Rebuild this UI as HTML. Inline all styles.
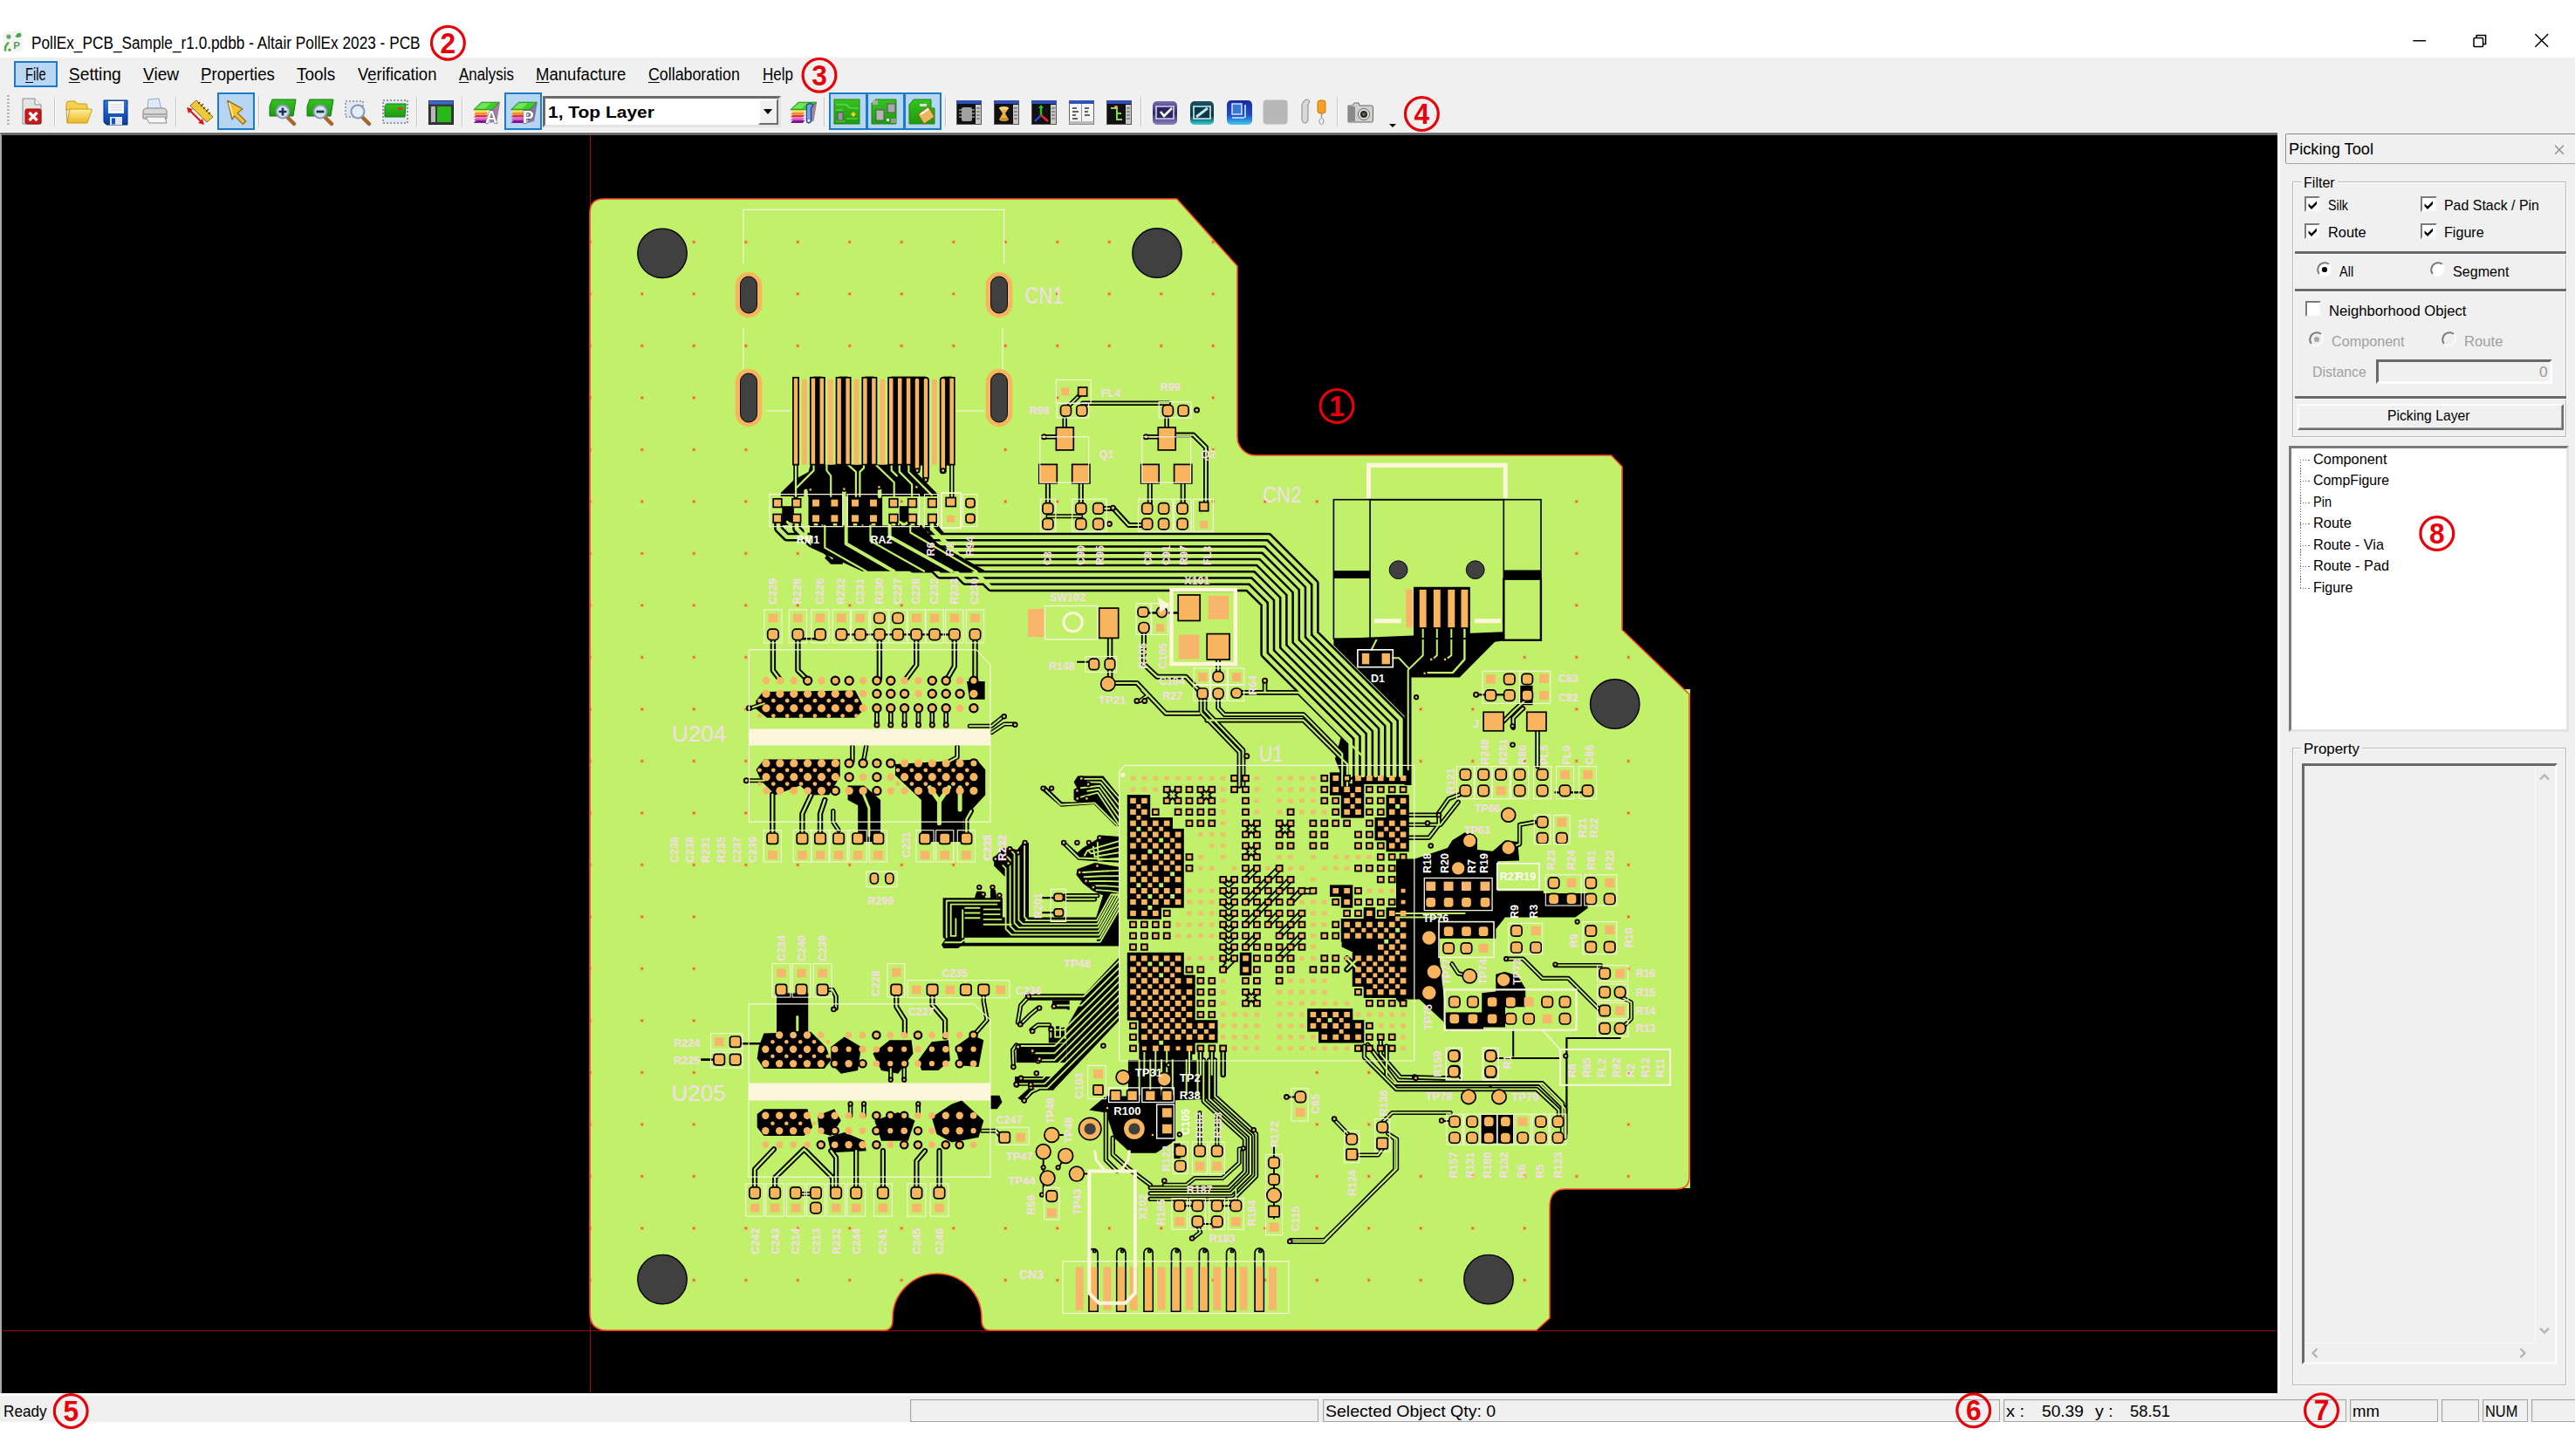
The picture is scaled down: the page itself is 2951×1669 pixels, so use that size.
<!DOCTYPE html>
<html lang="en"><head><meta charset="utf-8"><title>PollEx_PCB_Sample_r1.0.pdbb - Altair PollEx 2023 - PCB</title>
<style>
html,body{margin:0;padding:0;background:#fff;}
body{width:2951px;height:1669px;position:relative;overflow:hidden;font-family:"Liberation Sans",sans-serif;}
.t{position:absolute;white-space:nowrap;transform-origin:0 50%;}
.b{position:absolute;box-sizing:border-box;}
u{text-decoration:underline;text-underline-offset:2px;text-decoration-thickness:1px;}
svg{position:absolute;left:0;top:0;}
svg text{font-family:"Liberation Sans",sans-serif;}
</style></head><body>
<div class="b" style="left:0.0px;top:66.0px;width:2951.0px;height:1563.8px;background:#f0f0f0;"></div>
<div class="b" style="left:0.0px;top:1597.4px;width:2609.6px;height:3.1px;background:#fbfbfb;"></div>
<div class="b" style="left:0.0px;top:150.7px;width:2609.6px;height:1.4px;background:#fff;"></div>
<div class="b" style="left:0.0px;top:152.1px;width:2609.6px;height:1445.3px;background:#000;border-left:2.6px solid #a8a8a8;border-top:3.2px solid #6c6c6c;"></div>
<div class="b" style="left:2609.6px;top:155.0px;width:3.6px;height:1442.4px;background:#f8f8f8;"></div>
<span class="t" style="left:36.1px;top:37.9px;font-size:19.5px;line-height:22.41px;color:#000;transform:scaleX(0.8841);">PollEx_PCB_Sample_r1.0.pdbb - Altair PollEx 2023 - PCB</span>
<div class="b" style="left:15.7px;top:69.7px;width:50.1px;height:30.0px;background:#b9d7f3;border:2px solid #1c7acb;"></div>
<span class="t" style="left:28.5px;top:74.5px;font-size:19.3px;line-height:22.18px;color:#000;transform:scaleX(0.7589);"><u>F</u>ile</span>
<span class="t" style="left:78.8px;top:74.5px;font-size:19.3px;line-height:22.18px;color:#000;"><u>S</u>etting</span>
<span class="t" style="left:163.9px;top:74.5px;font-size:19.3px;line-height:22.18px;color:#000;transform:scaleX(0.9908);"><u>V</u>iew</span>
<span class="t" style="left:230.3px;top:74.5px;font-size:19.3px;line-height:22.18px;color:#000;transform:scaleX(0.9664);"><u>P</u>roperties</span>
<span class="t" style="left:340.2px;top:74.5px;font-size:19.3px;line-height:22.18px;color:#000;transform:scaleX(0.9833);"><u>T</u>ools</span>
<span class="t" style="left:409.7px;top:74.5px;font-size:19.3px;line-height:22.18px;color:#000;transform:scaleX(0.9586);">V<u>e</u>rification</span>
<span class="t" style="left:526.2px;top:74.5px;font-size:19.3px;line-height:22.18px;color:#000;transform:scaleX(0.8752);"><u>A</u>nalysis</span>
<span class="t" style="left:613.6px;top:74.5px;font-size:19.3px;line-height:22.18px;color:#000;transform:scaleX(0.9630);"><u>M</u>anufacture</span>
<span class="t" style="left:742.5px;top:74.5px;font-size:19.3px;line-height:22.18px;color:#000;transform:scaleX(0.9224);"><u>C</u>ollaboration</span>
<span class="t" style="left:873.8px;top:74.5px;font-size:19.3px;line-height:22.18px;color:#000;transform:scaleX(0.8793);"><u>H</u>elp</span>
<div class="b" style="left:8.0px;top:109.0px;width:3.0px;height:36.0px;background:repeating-linear-gradient(#b8b8b8 0 2px,transparent 2px 4px);"></div>
<div class="b" style="left:62.0px;top:111.0px;width:1.0px;height:34.0px;background:#c4c4c4;"></div>
<div class="b" style="left:63.0px;top:111.0px;width:1.0px;height:34.0px;background:#fff;"></div>
<div class="b" style="left:200.8px;top:111.0px;width:1.0px;height:34.0px;background:#c4c4c4;"></div>
<div class="b" style="left:201.8px;top:111.0px;width:1.0px;height:34.0px;background:#fff;"></div>
<div class="b" style="left:296.0px;top:111.0px;width:1.0px;height:34.0px;background:#c4c4c4;"></div>
<div class="b" style="left:297.0px;top:111.0px;width:1.0px;height:34.0px;background:#fff;"></div>
<div class="b" style="left:477.0px;top:111.0px;width:1.0px;height:34.0px;background:#c4c4c4;"></div>
<div class="b" style="left:478.0px;top:111.0px;width:1.0px;height:34.0px;background:#fff;"></div>
<div class="b" style="left:529.0px;top:111.0px;width:1.0px;height:34.0px;background:#c4c4c4;"></div>
<div class="b" style="left:530.0px;top:111.0px;width:1.0px;height:34.0px;background:#fff;"></div>
<div class="b" style="left:944.3px;top:111.0px;width:1.0px;height:34.0px;background:#c4c4c4;"></div>
<div class="b" style="left:945.3px;top:111.0px;width:1.0px;height:34.0px;background:#fff;"></div>
<div class="b" style="left:1083.3px;top:111.0px;width:1.0px;height:34.0px;background:#c4c4c4;"></div>
<div class="b" style="left:1084.3px;top:111.0px;width:1.0px;height:34.0px;background:#fff;"></div>
<div class="b" style="left:1307.0px;top:111.0px;width:1.0px;height:34.0px;background:#c4c4c4;"></div>
<div class="b" style="left:1308.0px;top:111.0px;width:1.0px;height:34.0px;background:#fff;"></div>
<div class="b" style="left:1531.5px;top:111.0px;width:1.0px;height:34.0px;background:#c4c4c4;"></div>
<div class="b" style="left:1532.5px;top:111.0px;width:1.0px;height:34.0px;background:#fff;"></div>
<div class="b" style="left:249.0px;top:106.2px;width:43.0px;height:43.0px;background:#b5d5f2;border:2px solid #1c7acb;"></div>
<div class="b" style="left:578.1px;top:106.2px;width:43.0px;height:43.0px;background:#b5d5f2;border:2px solid #1c7acb;"></div>
<div class="b" style="left:949.7px;top:106.2px;width:44.4px;height:43.0px;background:#b5d5f2;border:2px solid #1c7acb;"></div>
<div class="b" style="left:992.6px;top:106.2px;width:44.4px;height:43.0px;background:#b5d5f2;border:2px solid #1c7acb;"></div>
<div class="b" style="left:1035.5px;top:106.2px;width:43.4px;height:43.0px;background:#b5d5f2;border:2px solid #1c7acb;"></div>
<div class="b" style="left:621.6px;top:109.7px;width:273.4px;height:36.1px;background:#fff;border:3px solid;border-color:#6a6a6a #e4e4e4 #e4e4e4 #6a6a6a;"></div>
<div class="b" style="left:869.0px;top:112.8px;width:23.0px;height:30.2px;background:#f0f0f0;border:2px solid;border-color:#fff #6d6d6d #6d6d6d #fff;"></div>
<div class="b" style="left:874.8px;top:125.0px;width:0.0px;height:0.0px;border-left:5.5px solid transparent;border-right:5.5px solid transparent;border-top:6px solid #000;"></div>
<span class="t" style="left:628.2px;top:117.9px;font-size:19.2px;line-height:22.06px;color:#000;font-weight:bold;transform:scaleX(1.0925);">1, Top Layer</span>
<div class="b" style="left:1592.0px;top:142.0px;width:0.0px;height:0.0px;border-left:4px solid transparent;border-right:4px solid transparent;border-top:4px solid #000;"></div>
<div class="b" style="left:2619.3px;top:153.1px;width:333.0px;height:35.2px;background:#f0f0f0;border:1px solid;border-color:#8c8c8c #b0b0b0 #a8a8a8 #8c8c8c;border-radius:2px;"></div>
<span class="t" style="left:2622.8px;top:160.0px;font-size:18.6px;line-height:21.37px;color:#000;transform:scaleX(0.9817);">Picking Tool</span>
<div class="b" style="left:2627.4px;top:208.3px;width:313.8px;height:292.3px;border:1px solid #b8b8b8;box-shadow:inset 1px 1px 0 #fff, 1px 1px 0 #fff;"></div>
<div class="b" style="left:2636.5px;top:200.0px;width:42.0px;height:20.0px;background:#f0f0f0;"></div>
<span class="t" style="left:2639.9px;top:200.2px;font-size:17.0px;line-height:19.53px;color:#000;transform:scaleX(0.9451);">Filter</span>
<div class="b" style="left:2640.9px;top:225.4px;width:18.3px;height:18.0px;background:#fff;border:2px solid;border-color:#7a7a7a #f4f4f4 #f4f4f4 #7a7a7a;"></div>
<svg width="20" height="20" style="left:2640.9px;top:225.4px" viewBox="0 0 20 20"><path d="M4.6 8.2 L8 11.6 L14 5.6 V9 L8 15 L4.6 11.6 Z" fill="#000"/></svg>
<span class="t" style="left:2667.8px;top:226.3px;font-size:17.0px;line-height:19.53px;color:#000;transform:scaleX(0.8360);">Silk</span>
<div class="b" style="left:2774.4px;top:225.4px;width:18.3px;height:18.0px;background:#fff;border:2px solid;border-color:#7a7a7a #f4f4f4 #f4f4f4 #7a7a7a;"></div>
<svg width="20" height="20" style="left:2774.4px;top:225.4px" viewBox="0 0 20 20"><path d="M4.6 8.2 L8 11.6 L14 5.6 V9 L8 15 L4.6 11.6 Z" fill="#000"/></svg>
<span class="t" style="left:2800.9px;top:226.3px;font-size:17.0px;line-height:19.53px;color:#000;transform:scaleX(0.9370);">Pad Stack / Pin</span>
<div class="b" style="left:2640.9px;top:256.1px;width:18.3px;height:18.0px;background:#fff;border:2px solid;border-color:#7a7a7a #f4f4f4 #f4f4f4 #7a7a7a;"></div>
<svg width="20" height="20" style="left:2640.9px;top:256.1px" viewBox="0 0 20 20"><path d="M4.6 8.2 L8 11.6 L14 5.6 V9 L8 15 L4.6 11.6 Z" fill="#000"/></svg>
<span class="t" style="left:2667.8px;top:256.9px;font-size:17.0px;line-height:19.53px;color:#000;transform:scaleX(0.9634);">Route</span>
<div class="b" style="left:2774.4px;top:256.1px;width:18.3px;height:18.0px;background:#fff;border:2px solid;border-color:#7a7a7a #f4f4f4 #f4f4f4 #7a7a7a;"></div>
<svg width="20" height="20" style="left:2774.4px;top:256.1px" viewBox="0 0 20 20"><path d="M4.6 8.2 L8 11.6 L14 5.6 V9 L8 15 L4.6 11.6 Z" fill="#000"/></svg>
<span class="t" style="left:2800.9px;top:256.9px;font-size:17.0px;line-height:19.53px;color:#000;transform:scaleX(0.9485);">Figure</span>
<div class="b" style="left:2629.7px;top:288.0px;width:311.0px;height:3.0px;background:#6a6a6a;"></div>
<div class="b" style="left:2629.7px;top:291.0px;width:311.0px;height:1.0px;background:#fff;"></div>
<div class="b" style="left:2629.7px;top:331.2px;width:311.0px;height:3.0px;background:#6a6a6a;"></div>
<div class="b" style="left:2629.7px;top:334.2px;width:311.0px;height:1.0px;background:#fff;"></div>
<div class="b" style="left:2629.7px;top:454.0px;width:311.0px;height:3.0px;background:#6a6a6a;"></div>
<div class="b" style="left:2629.7px;top:457.0px;width:311.0px;height:1.0px;background:#fff;"></div>
<svg width="20" height="20" style="left:2654.4px;top:299.1px" viewBox="0 0 20 20"><circle cx="10" cy="10" r="7.6" fill="#fff"/><path d="M3.8 15 A8 8 0 0 1 15 3.8" fill="none" stroke="#7a7a7a" stroke-width="2"/><path d="M15.6 4.4 A8 8 0 0 1 4.4 15.6" fill="none" stroke="#fbfbfb" stroke-width="2"/><circle cx="10" cy="10" r="3.1" fill="#000"/></svg>
<span class="t" style="left:2681.4px;top:301.6px;font-size:17.0px;line-height:19.53px;color:#000;transform:scaleX(0.8521);">All</span>
<svg width="20" height="20" style="left:2783.6px;top:299.1px" viewBox="0 0 20 20"><circle cx="10" cy="10" r="7.6" fill="#fff"/><path d="M3.8 15 A8 8 0 0 1 15 3.8" fill="none" stroke="#7a7a7a" stroke-width="2"/><path d="M15.6 4.4 A8 8 0 0 1 4.4 15.6" fill="none" stroke="#fbfbfb" stroke-width="2"/></svg>
<span class="t" style="left:2810.6px;top:301.6px;font-size:17.0px;line-height:19.53px;color:#000;transform:scaleX(0.9465);">Segment</span>
<div class="b" style="left:2642.2px;top:345.3px;width:18.3px;height:18.0px;background:#fff;border:2px solid;border-color:#7a7a7a #f4f4f4 #f4f4f4 #7a7a7a;"></div>
<span class="t" style="left:2668.8px;top:346.5px;font-size:17.0px;line-height:19.53px;color:#000;transform:scaleX(0.9798);">Neighborhood Object</span>
<svg width="20" height="20" style="left:2645.3px;top:379.3px" viewBox="0 0 20 20"><circle cx="10" cy="10" r="7.6" fill="#f0f0f0"/><path d="M3.8 15 A8 8 0 0 1 15 3.8" fill="none" stroke="#7a7a7a" stroke-width="2"/><path d="M15.6 4.4 A8 8 0 0 1 4.4 15.6" fill="none" stroke="#fbfbfb" stroke-width="2"/><circle cx="10" cy="10" r="3.1" fill="#a8a8a8"/></svg>
<span class="t" style="left:2672.2px;top:381.6px;font-size:17.0px;line-height:19.53px;color:#a0a0a0;transform:scaleX(0.9513);">Component</span>
<svg width="20" height="20" style="left:2797.2px;top:379.3px" viewBox="0 0 20 20"><circle cx="10" cy="10" r="7.6" fill="#f0f0f0"/><path d="M3.8 15 A8 8 0 0 1 15 3.8" fill="none" stroke="#7a7a7a" stroke-width="2"/><path d="M15.6 4.4 A8 8 0 0 1 4.4 15.6" fill="none" stroke="#fbfbfb" stroke-width="2"/></svg>
<span class="t" style="left:2824.1px;top:381.6px;font-size:17.0px;line-height:19.53px;color:#a0a0a0;transform:scaleX(0.9788);">Route</span>
<span class="t" style="left:2649.5px;top:416.9px;font-size:17.0px;line-height:19.53px;color:#a0a0a0;transform:scaleX(0.9359);">Distance</span>
<div class="b" style="left:2722.6px;top:411.5px;width:202.0px;height:28.0px;background:#f0f0f0;border:3px solid;border-color:#696969 #fdfdfd #fdfdfd #696969;"></div>
<span class="t" style="left:2909.5px;top:416.9px;font-size:17.0px;line-height:19.53px;color:#9a9a9a;transform:scaleX(1.0155);">0</span>
<div class="b" style="left:2633.0px;top:462.9px;width:304.7px;height:30.0px;background:#f0f0f0;border:2px solid;border-color:#fcfcfc #6d6d6d #6d6d6d #fcfcfc;box-shadow:inset -1px -1px 0 #a0a0a0;"></div>
<span class="t" style="left:2736.2px;top:467.1px;font-size:17.0px;line-height:19.53px;color:#000;transform:scaleX(0.9261);">Picking Layer</span>
<div class="b" style="left:2622.5px;top:510.7px;width:321.0px;height:328.6px;background:#fff;border:3px solid;border-color:#7a7a7a #e3e3e3 #e3e3e3 #7a7a7a;"></div>
<div class="b" style="left:2636.0px;top:526.9px;width:1.3px;height:147.0px;background:repeating-linear-gradient(#707070 0 1.3px,transparent 1.3px 3.1px);"></div>
<div class="b" style="left:2636.0px;top:526.6px;width:10.8px;height:1.3px;background:repeating-linear-gradient(90deg,#707070 0 1.3px,transparent 1.3px 3.1px);"></div>
<span class="t" style="left:2650.6px;top:516.9px;font-size:17.0px;line-height:19.53px;color:#000;transform:scaleX(0.9615);">Component</span>
<div class="b" style="left:2636.0px;top:551.1px;width:10.8px;height:1.3px;background:repeating-linear-gradient(90deg,#707070 0 1.3px,transparent 1.3px 3.1px);"></div>
<span class="t" style="left:2650.6px;top:541.4px;font-size:17.0px;line-height:19.53px;color:#000;transform:scaleX(0.9313);">CompFigure</span>
<div class="b" style="left:2636.0px;top:575.6px;width:10.8px;height:1.3px;background:repeating-linear-gradient(90deg,#707070 0 1.3px,transparent 1.3px 3.1px);"></div>
<span class="t" style="left:2650.6px;top:565.9px;font-size:17.0px;line-height:19.53px;color:#000;transform:scaleX(0.8588);">Pin</span>
<div class="b" style="left:2636.0px;top:600.1px;width:10.8px;height:1.3px;background:repeating-linear-gradient(90deg,#707070 0 1.3px,transparent 1.3px 3.1px);"></div>
<span class="t" style="left:2650.6px;top:590.4px;font-size:17.0px;line-height:19.53px;color:#000;transform:scaleX(0.9656);">Route</span>
<div class="b" style="left:2636.0px;top:624.6px;width:10.8px;height:1.3px;background:repeating-linear-gradient(90deg,#707070 0 1.3px,transparent 1.3px 3.1px);"></div>
<span class="t" style="left:2650.6px;top:614.9px;font-size:17.0px;line-height:19.53px;color:#000;transform:scaleX(0.9548);">Route - Via</span>
<div class="b" style="left:2636.0px;top:649.1px;width:10.8px;height:1.3px;background:repeating-linear-gradient(90deg,#707070 0 1.3px,transparent 1.3px 3.1px);"></div>
<span class="t" style="left:2650.6px;top:639.4px;font-size:17.0px;line-height:19.53px;color:#000;transform:scaleX(0.9602);">Route - Pad</span>
<div class="b" style="left:2636.0px;top:673.6px;width:10.8px;height:1.3px;background:repeating-linear-gradient(90deg,#707070 0 1.3px,transparent 1.3px 3.1px);"></div>
<span class="t" style="left:2650.6px;top:663.9px;font-size:17.0px;line-height:19.53px;color:#000;transform:scaleX(0.9423);">Figure</span>
<div class="b" style="left:2627.4px;top:857.2px;width:313.8px;height:730.4px;border:1px solid #b8b8b8;box-shadow:inset 1px 1px 0 #fff, 1px 1px 0 #fff;"></div>
<div class="b" style="left:2636.5px;top:848.0px;width:70.0px;height:20.0px;background:#f0f0f0;"></div>
<span class="t" style="left:2639.6px;top:849.2px;font-size:17.0px;line-height:19.53px;color:#000;transform:scaleX(0.9946);">Property</span>
<div class="b" style="left:2638.3px;top:874.7px;width:292.3px;height:689.7px;background:#f0f0f0;border:3px solid;border-color:#696969 #fafafa #fafafa #696969;"></div>
<div class="b" style="left:2904.5px;top:877.7px;width:1.5px;height:661.0px;background:#fafafa;"></div>
<div class="b" style="left:2641.3px;top:1538.6px;width:264.0px;height:1.5px;background:#fafafa;"></div>
<svg width="14" height="14" style="left:2909.3px;top:884.0px" viewBox="-7 -7 14 14"><path d="M-5 2.5 L0 -2.5 L5 2.5" fill="none" stroke="#b4b4b4" stroke-width="2.4"/></svg>
<svg width="14" height="14" style="left:2909.3px;top:1518.3px" viewBox="-7 -7 14 14"><path d="M-5 -2.5 L0 2.5 L5 -2.5" fill="none" stroke="#b4b4b4" stroke-width="2.4"/></svg>
<svg width="14" height="14" style="left:2646.2px;top:1544.1px" viewBox="-7 -7 14 14"><path d="M2.5 -5 L-2.5 0 L2.5 5" fill="none" stroke="#b4b4b4" stroke-width="2.4"/></svg>
<svg width="14" height="14" style="left:2883.8px;top:1544.1px" viewBox="-7 -7 14 14"><path d="M-2.5 -5 L2.5 0 L-2.5 5" fill="none" stroke="#b4b4b4" stroke-width="2.4"/></svg>
<span class="t" style="left:3.9px;top:1606.6px;font-size:18.6px;line-height:21.37px;color:#000;transform:scaleX(0.9244);">Ready</span>
<div class="b" style="left:1043.0px;top:1604.0px;width:468.0px;height:25.8px;border:1px solid #a6a6a6;box-shadow:inset 1px 1px 0 #e2e2e2;"></div>
<div class="b" style="left:1516.0px;top:1604.0px;width:775.5px;height:25.8px;border:1px solid #a6a6a6;box-shadow:inset 1px 1px 0 #e2e2e2;"></div>
<div class="b" style="left:2296.0px;top:1604.0px;width:393.0px;height:25.8px;border:1px solid #a6a6a6;box-shadow:inset 1px 1px 0 #e2e2e2;"></div>
<div class="b" style="left:2693.0px;top:1604.0px;width:100.5px;height:25.8px;border:1px solid #a6a6a6;box-shadow:inset 1px 1px 0 #e2e2e2;"></div>
<div class="b" style="left:2797.5px;top:1604.0px;width:43.5px;height:25.8px;border:1px solid #a6a6a6;box-shadow:inset 1px 1px 0 #e2e2e2;"></div>
<div class="b" style="left:2845.0px;top:1604.0px;width:51.7px;height:25.8px;border:1px solid #a6a6a6;box-shadow:inset 1px 1px 0 #e2e2e2;"></div>
<div class="b" style="left:2900.5px;top:1604.0px;width:52.5px;height:25.8px;border:1px solid #a6a6a6;box-shadow:inset 1px 1px 0 #e2e2e2;"></div>
<span class="t" style="left:1519.3px;top:1606.6px;font-size:18.6px;line-height:21.37px;color:#000;transform:scaleX(1.0490);">Selected Object Qty: 0</span>
<span class="t" style="left:2299.1px;top:1606.6px;font-size:18.6px;line-height:21.37px;color:#000;transform:scaleX(1.0797);">x :</span>
<span class="t" style="left:2340.0px;top:1606.6px;font-size:18.6px;line-height:21.37px;color:#000;transform:scaleX(1.0292);">50.39</span>
<span class="t" style="left:2400.5px;top:1606.6px;font-size:18.6px;line-height:21.37px;color:#000;transform:scaleX(1.0543);">y :</span>
<span class="t" style="left:2441.4px;top:1606.6px;font-size:18.6px;line-height:21.37px;color:#000;transform:scaleX(0.9884);">58.51</span>
<span class="t" style="left:2696.0px;top:1606.6px;font-size:18.6px;line-height:21.37px;color:#000;">mm</span>
<span class="t" style="left:2848.3px;top:1606.6px;font-size:18.6px;line-height:21.37px;color:#000;transform:scaleX(0.8806);">NUM</span>
<svg width="2951" height="1669" viewBox="0 0 2951 1669" shape-rendering="auto">
<defs><clipPath id="cv"><rect x="3" y="155.3" width="2606.6" height="1442.1"/></clipPath>
<clipPath id="bd"><path d="M692 228 H1348.7 L1418 305 V501 A21 21 0 0 0 1439 522 H1846.5 L1859 535 V722 L1936 796 V1349 Q1936 1363 1921 1363 H1793 Q1776 1363 1776 1384 V1511 L1760.6 1525 H1135 Q1125 1525 1125 1513 V1511 A51 51 0 0 0 1023 1511 V1513 Q1023 1525 1013 1525 H696 Q676 1525 676 1505 V244 Q676 228 692 228 Z"/></clipPath>
<pattern id="vg" x="765.45" y="247.65" width="59.5" height="59.5" patternUnits="userSpaceOnUse"><rect x="27.6" y="27.6" width="4.4" height="4.4" fill="#f8b55e"/><rect x="29" y="29" width="1.6" height="1.6" fill="#7a3a10"/></pattern>
</defs>
<g clip-path="url(#cv)">
<path d="M676.5 155 V1597.4 M3 1525.5 H2610" stroke="#8f0d0d" stroke-width="1.2"/>
<path d="M692 228 H1348.7 L1418 305 V501 A21 21 0 0 0 1439 522 H1846.5 L1859 535 V722 L1936 796 V1349 Q1936 1363 1921 1363 H1793 Q1776 1363 1776 1384 V1511 L1760.6 1525 H1135 Q1125 1525 1125 1513 V1511 A51 51 0 0 0 1023 1511 V1513 Q1023 1525 1013 1525 H696 Q676 1525 676 1505 V244 Q676 228 692 228 Z" fill="#c1f06a"/>
<path d="M692 228 H1348.7 L1418 305 V501 A21 21 0 0 0 1439 522 H1846.5 L1859 535 V722 L1936 796 V1349 Q1936 1363 1921 1363 H1793 Q1776 1363 1776 1384 V1511 L1760.6 1525 H1135 Q1125 1525 1125 1513 V1511 A51 51 0 0 0 1023 1511 V1513 Q1023 1525 1013 1525 H696 Q676 1525 676 1505 V244 Q676 228 692 228 Z" fill="url(#vg)"/>
<rect x="1529" y="573" width="237" height="160" fill="#c1f06a"/>
<rect x="1283" y="877" width="338" height="339" fill="#c1f06a"/>
<rect x="858" y="745" width="277" height="197" fill="#c1f06a"/>
<rect x="858" y="1151" width="277" height="198" fill="#c1f06a"/>
<rect x="1622" y="930" width="208" height="370" fill="#c1f06a"/>
<rect x="1130" y="1216" width="370" height="184" fill="#c1f06a"/>
<rect x="1080" y="600" width="450" height="277" fill="#c1f06a"/>
<rect x="1135" y="877" width="148" height="339" fill="#c1f06a"/>
<rect x="826" y="1010" width="474" height="390" fill="#c1f06a"/>
<rect x="1900" y="790" width="37" height="572" fill="#c1f06a"/>
<rect x="1240" y="440" width="120" height="172" fill="#c1f06a"/>
<rect x="826" y="1010" width="34" height="230" fill="#c1f06a"/>
<g clip-path="url(#bd)">
<g fill="#000"><rect x="931.9" y="431.6" width="9.9" height="102"/><rect x="961.6" y="431.6" width="9.9" height="102"/><rect x="991.4" y="431.6" width="9.9" height="102"/><rect x="1021.2" y="431.6" width="9.9" height="102"/><rect x="1031.2" y="431.6" width="9.9" height="102"/><rect x="1041.1" y="431.6" width="9.9" height="102"/><rect x="1051" y="431.6" width="9.9" height="102"/><rect x="1080.8" y="431.6" width="9.9" height="102"/><polygon points="928.8,532.6 1049.7,532.6 1049.7,540.9 1073.9,565.8 1073.9,568.9 894.8,568.9 894.8,565.1 909.9,550 926.5,540.9" fill="#000"/><rect x="926.5" y="568.9" width="39.3" height="33.2"/><rect x="971.8" y="568.9" width="39.3" height="33.2"/><polygon points="896.3,580.2 909.9,580.2 909.9,602.1 896.3,602.1" fill="#000"/><polygon points="1030.8,580.2 1041.4,580.2 1041.4,602.1 1030.8,602.1" fill="#000"/><polygon points="928,602.1 965.8,602.1 965.8,646.7 952.2,646.7 928,622.5" fill="#000"/><polygon points="971.8,602.1 1011.1,602.1 1011.1,621 1033.8,643.7 996,643.7 971.8,628.6" fill="#000"/><polygon points="1020.2,602.1 1056.5,602.1 1056.5,622.5 1047.4,622.5 1030.8,613.4 1020.2,613.4" fill="#000"/><polygon points="1059.5,602.1 1074.6,602.1 1085.2,615 1071.6,615 1059.5,607.4" fill="#000"/><polygon points="1538,840 1616,840 1616,890 1538,890 1530,870" fill="#000"/><rect x="1528.4" y="654.2" width="41.7" height="8.8"/><rect x="1723.3" y="653.5" width="42.6" height="10.1"/><rect x="1620" y="672.8" width="64.8" height="59.4"/><polygon points="1528.4,732.2 1723.3,724.3 1723.3,734.4 1713.2,735.7 1672.7,776.4 1617.5,776.4 1617.5,899.9 1609.6,899.9 1609.6,820.7 1528.4,739.5" fill="#000"/><rect x="1524" y="885.4" width="13.5" height="13.5"/><rect x="1549.8" y="885.4" width="13.5" height="13.5"/><rect x="1562.7" y="885.4" width="13.5" height="13.5"/><rect x="1575.5" y="885.4" width="13.5" height="13.5"/><rect x="1588.5" y="885.4" width="13.5" height="13.5"/><rect x="1601.3" y="885.4" width="13.5" height="13.5"/><rect x="1524" y="898.2" width="13.5" height="13.5"/><rect x="1536.8" y="898.2" width="13.5" height="13.5"/><rect x="1549.8" y="898.2" width="13.5" height="13.5"/><rect x="1291.8" y="911.1" width="13.5" height="13.5"/><rect x="1304.7" y="911.1" width="13.5" height="13.5"/><rect x="1536.8" y="911.1" width="13.5" height="13.5"/><rect x="1549.8" y="911.1" width="13.5" height="13.5"/><rect x="1588.5" y="911.1" width="13.5" height="13.5"/><rect x="1601.3" y="911.1" width="13.5" height="13.5"/><rect x="1291.8" y="924.1" width="13.5" height="13.5"/><rect x="1304.7" y="924.1" width="13.5" height="13.5"/><rect x="1536.8" y="924.1" width="13.5" height="13.5"/><rect x="1549.8" y="924.1" width="13.5" height="13.5"/><rect x="1588.5" y="924.1" width="13.5" height="13.5"/><rect x="1601.3" y="924.1" width="13.5" height="13.5"/><rect x="1291.8" y="937" width="13.5" height="13.5"/><rect x="1304.7" y="937" width="13.5" height="13.5"/><rect x="1317.5" y="937" width="13.5" height="13.5"/><rect x="1330.5" y="937" width="13.5" height="13.5"/><rect x="1575.5" y="937" width="13.5" height="13.5"/><rect x="1588.5" y="937" width="13.5" height="13.5"/><rect x="1601.3" y="937" width="13.5" height="13.5"/><rect x="1291.8" y="949.9" width="13.5" height="13.5"/><rect x="1304.7" y="949.9" width="13.5" height="13.5"/><rect x="1317.5" y="949.9" width="13.5" height="13.5"/><rect x="1330.5" y="949.9" width="13.5" height="13.5"/><rect x="1343.3" y="949.9" width="13.5" height="13.5"/><rect x="1575.5" y="949.9" width="13.5" height="13.5"/><rect x="1588.5" y="949.9" width="13.5" height="13.5"/><rect x="1601.3" y="949.9" width="13.5" height="13.5"/><rect x="1291.8" y="962.8" width="13.5" height="13.5"/><rect x="1304.7" y="962.8" width="13.5" height="13.5"/><rect x="1317.5" y="962.8" width="13.5" height="13.5"/><rect x="1330.5" y="962.8" width="13.5" height="13.5"/><rect x="1343.3" y="962.8" width="13.5" height="13.5"/><rect x="1588.5" y="962.8" width="13.5" height="13.5"/><rect x="1601.3" y="962.8" width="13.5" height="13.5"/><rect x="1291.8" y="975.6" width="13.5" height="13.5"/><rect x="1304.7" y="975.6" width="13.5" height="13.5"/><rect x="1317.5" y="975.6" width="13.5" height="13.5"/><rect x="1330.5" y="975.6" width="13.5" height="13.5"/><rect x="1343.3" y="975.6" width="13.5" height="13.5"/><rect x="1291.8" y="988.6" width="13.5" height="13.5"/><rect x="1304.7" y="988.6" width="13.5" height="13.5"/><rect x="1317.5" y="988.6" width="13.5" height="13.5"/><rect x="1330.5" y="988.6" width="13.5" height="13.5"/><rect x="1343.3" y="988.6" width="13.5" height="13.5"/><rect x="1291.8" y="1001.5" width="13.5" height="13.5"/><rect x="1304.7" y="1001.5" width="13.5" height="13.5"/><rect x="1317.5" y="1001.5" width="13.5" height="13.5"/><rect x="1330.5" y="1001.5" width="13.5" height="13.5"/><rect x="1343.3" y="1001.5" width="13.5" height="13.5"/><rect x="1291.8" y="1014.4" width="13.5" height="13.5"/><rect x="1304.7" y="1014.4" width="13.5" height="13.5"/><rect x="1317.5" y="1014.4" width="13.5" height="13.5"/><rect x="1330.5" y="1014.4" width="13.5" height="13.5"/><rect x="1343.3" y="1014.4" width="13.5" height="13.5"/><rect x="1524" y="1014.4" width="13.5" height="13.5"/><rect x="1536.8" y="1014.4" width="13.5" height="13.5"/><rect x="1291.8" y="1027.2" width="13.5" height="13.5"/><rect x="1304.7" y="1027.2" width="13.5" height="13.5"/><rect x="1317.5" y="1027.2" width="13.5" height="13.5"/><rect x="1330.5" y="1027.2" width="13.5" height="13.5"/><rect x="1343.3" y="1027.2" width="13.5" height="13.5"/><rect x="1536.8" y="1027.2" width="13.5" height="13.5"/><rect x="1291.8" y="1040.2" width="13.5" height="13.5"/><rect x="1304.7" y="1040.2" width="13.5" height="13.5"/><rect x="1317.5" y="1040.2" width="13.5" height="13.5"/><rect x="1562.7" y="1040.2" width="13.5" height="13.5"/><rect x="1588.5" y="1040.2" width="13.5" height="13.5"/><rect x="1601.3" y="1040.2" width="13.5" height="13.5"/><rect x="1536.8" y="1053" width="13.5" height="13.5"/><rect x="1549.8" y="1053" width="13.5" height="13.5"/><rect x="1562.7" y="1053" width="13.5" height="13.5"/><rect x="1575.5" y="1053" width="13.5" height="13.5"/><rect x="1588.5" y="1053" width="13.5" height="13.5"/><rect x="1601.3" y="1053" width="13.5" height="13.5"/><rect x="1536.8" y="1066" width="13.5" height="13.5"/><rect x="1549.8" y="1066" width="13.5" height="13.5"/><rect x="1562.7" y="1066" width="13.5" height="13.5"/><rect x="1575.5" y="1066" width="13.5" height="13.5"/><rect x="1588.5" y="1066" width="13.5" height="13.5"/><rect x="1601.3" y="1066" width="13.5" height="13.5"/><rect x="1575.5" y="1078.8" width="13.5" height="13.5"/><rect x="1588.5" y="1078.8" width="13.5" height="13.5"/><rect x="1601.3" y="1078.8" width="13.5" height="13.5"/><rect x="1291.8" y="1091.8" width="13.5" height="13.5"/><rect x="1304.7" y="1091.8" width="13.5" height="13.5"/><rect x="1317.5" y="1091.8" width="13.5" height="13.5"/><rect x="1330.5" y="1091.8" width="13.5" height="13.5"/><rect x="1343.3" y="1091.8" width="13.5" height="13.5"/><rect x="1420.8" y="1091.8" width="13.5" height="13.5"/><rect x="1549.8" y="1091.8" width="13.5" height="13.5"/><rect x="1562.7" y="1091.8" width="13.5" height="13.5"/><rect x="1575.5" y="1091.8" width="13.5" height="13.5"/><rect x="1588.5" y="1091.8" width="13.5" height="13.5"/><rect x="1601.3" y="1091.8" width="13.5" height="13.5"/><rect x="1291.8" y="1104.7" width="13.5" height="13.5"/><rect x="1304.7" y="1104.7" width="13.5" height="13.5"/><rect x="1317.5" y="1104.7" width="13.5" height="13.5"/><rect x="1330.5" y="1104.7" width="13.5" height="13.5"/><rect x="1343.3" y="1104.7" width="13.5" height="13.5"/><rect x="1420.8" y="1104.7" width="13.5" height="13.5"/><rect x="1549.8" y="1104.7" width="13.5" height="13.5"/><rect x="1562.7" y="1104.7" width="13.5" height="13.5"/><rect x="1575.5" y="1104.7" width="13.5" height="13.5"/><rect x="1588.5" y="1104.7" width="13.5" height="13.5"/><rect x="1601.3" y="1104.7" width="13.5" height="13.5"/><rect x="1291.8" y="1117.5" width="13.5" height="13.5"/><rect x="1304.7" y="1117.5" width="13.5" height="13.5"/><rect x="1317.5" y="1117.5" width="13.5" height="13.5"/><rect x="1330.5" y="1117.5" width="13.5" height="13.5"/><rect x="1343.3" y="1117.5" width="13.5" height="13.5"/><rect x="1356.2" y="1117.5" width="13.5" height="13.5"/><rect x="1549.8" y="1117.5" width="13.5" height="13.5"/><rect x="1562.7" y="1117.5" width="13.5" height="13.5"/><rect x="1575.5" y="1117.5" width="13.5" height="13.5"/><rect x="1588.5" y="1117.5" width="13.5" height="13.5"/><rect x="1601.3" y="1117.5" width="13.5" height="13.5"/><rect x="1291.8" y="1130.5" width="13.5" height="13.5"/><rect x="1304.7" y="1130.5" width="13.5" height="13.5"/><rect x="1317.5" y="1130.5" width="13.5" height="13.5"/><rect x="1330.5" y="1130.5" width="13.5" height="13.5"/><rect x="1343.3" y="1130.5" width="13.5" height="13.5"/><rect x="1356.2" y="1130.5" width="13.5" height="13.5"/><rect x="1562.7" y="1130.5" width="13.5" height="13.5"/><rect x="1575.5" y="1130.5" width="13.5" height="13.5"/><rect x="1588.5" y="1130.5" width="13.5" height="13.5"/><rect x="1601.3" y="1130.5" width="13.5" height="13.5"/><rect x="1291.8" y="1143.3" width="13.5" height="13.5"/><rect x="1304.7" y="1143.3" width="13.5" height="13.5"/><rect x="1317.5" y="1143.3" width="13.5" height="13.5"/><rect x="1330.5" y="1143.3" width="13.5" height="13.5"/><rect x="1343.3" y="1143.3" width="13.5" height="13.5"/><rect x="1356.2" y="1143.3" width="13.5" height="13.5"/><rect x="1291.8" y="1156.2" width="13.5" height="13.5"/><rect x="1304.7" y="1156.2" width="13.5" height="13.5"/><rect x="1317.5" y="1156.2" width="13.5" height="13.5"/><rect x="1330.5" y="1156.2" width="13.5" height="13.5"/><rect x="1343.3" y="1156.2" width="13.5" height="13.5"/><rect x="1356.2" y="1156.2" width="13.5" height="13.5"/><rect x="1498.2" y="1156.2" width="13.5" height="13.5"/><rect x="1511" y="1156.2" width="13.5" height="13.5"/><rect x="1524" y="1156.2" width="13.5" height="13.5"/><rect x="1536.8" y="1156.2" width="13.5" height="13.5"/><rect x="1304.7" y="1169.2" width="13.5" height="13.5"/><rect x="1317.5" y="1169.2" width="13.5" height="13.5"/><rect x="1330.5" y="1169.2" width="13.5" height="13.5"/><rect x="1343.3" y="1169.2" width="13.5" height="13.5"/><rect x="1356.2" y="1169.2" width="13.5" height="13.5"/><rect x="1369.2" y="1169.2" width="13.5" height="13.5"/><rect x="1382" y="1169.2" width="13.5" height="13.5"/><rect x="1498.2" y="1169.2" width="13.5" height="13.5"/><rect x="1511" y="1169.2" width="13.5" height="13.5"/><rect x="1524" y="1169.2" width="13.5" height="13.5"/><rect x="1536.8" y="1169.2" width="13.5" height="13.5"/><rect x="1549.8" y="1169.2" width="13.5" height="13.5"/><rect x="1304.7" y="1182" width="13.5" height="13.5"/><rect x="1317.5" y="1182" width="13.5" height="13.5"/><rect x="1330.5" y="1182" width="13.5" height="13.5"/><rect x="1343.3" y="1182" width="13.5" height="13.5"/><rect x="1356.2" y="1182" width="13.5" height="13.5"/><rect x="1369.2" y="1182" width="13.5" height="13.5"/><rect x="1382" y="1182" width="13.5" height="13.5"/><rect x="1511" y="1182" width="13.5" height="13.5"/><rect x="1524" y="1182" width="13.5" height="13.5"/><rect x="1536.8" y="1182" width="13.5" height="13.5"/><rect x="1549.8" y="1182" width="13.5" height="13.5"/><rect x="1317.5" y="1195" width="13.5" height="13.5"/><rect x="1330.5" y="1195" width="13.5" height="13.5"/><rect x="1356.2" y="1195" width="13.5" height="13.5"/><polygon points="1537.6,1053.8 1621,1053.8 1621,1143.2 1569.4,1143.2 1550.5,1111.4 1550.5,1091.6 1537.6,1085.6" fill="#000"/><polygon points="1305.4,1163 1363,1163 1363,1232 1305.4,1232" fill="#000"/><polygon points="1080.6,1029.2 1116.9,1029.2 1119.3,1021.8 1125.9,1021.8 1129.2,1029.2 1135,1029.2 1135,1020.1 1140.8,1020.1 1142.4,1029.2 1149,1029.2 1149,1051.4 1256.2,1051.4 1264.4,1025.1 1282.5,1025.1 1282.5,1084.4 1256.2,1084.4 1101.2,1084.4 1097.9,1087 1081.4,1087 1079,1083.1 1083.1,1076.5 1080.6,1074.5" fill="#000"/><polygon points="1139.1,983 1149.8,972.3 1158.9,972.3 1165.5,974.3 1172.1,966 1179,966 1179,1052.3 1152.3,1052.3 1152.3,1005.6 1139.1,992.4" fill="#000"/><polygon points="1235.1,889.6 1264.4,889.6 1282.5,912.1 1282.5,946.8 1278.4,946.8 1253.7,922 1215.8,924.8 1192.7,904.7 1197.6,900.6 1216.9,919.2 1230.6,919.2 1230.6,904.7 1235.1,904.7 1230.6,896.5" fill="#000"/><polygon points="1240.5,972.3 1256.2,962.4 1262.7,957.5 1282.5,959.1 1282.5,988.8 1235.5,985.8 1217.4,968.2 1221.2,964.9 1234.7,977.3" fill="#000"/><polygon points="1234.7,996.2 1254.5,989.1 1282.5,993.7 1282.5,1025.9 1263.1,1025.9 1252,1020.9 1241.3,1012.7 1233.4,1002.8" fill="#000"/><polygon points="1282.6,1097.3 1282.6,1169.8 1207.6,1249 1205.1,1249 1205.1,1234.9 1222.4,1216.8 1222.4,1177.3 1245.5,1136.9" fill="#000"/><rect x="1177.9" y="1139.3" width="67.6" height="7.4"/><polygon points="1205.9,1146.8 1225.7,1146.8 1225.7,1157.5 1205.9,1157.5" fill="#000"/><polygon points="1201.8,1176.4 1222.4,1176.4 1222.4,1195.4 1201.8,1195.4" fill="#000"/><rect x="1164.7" y="1196.2" width="57.7" height="21.9"/><polygon points="1163.1,1234.1 1207.6,1234.1 1207.6,1249.8 1189.5,1249.8 1171.3,1262.1 1166.4,1258.8 1182,1244.8 1163.1,1244.8" fill="#000"/><polygon points="866.4,803.2 874.3,793.1 980.1,791.6 991.1,812.7 980.1,822.8 879,822.8 866.4,812.7" fill="#000"/><polygon points="1108,781.1 1128.6,781.1 1128.6,801.7 1111.2,801.7" fill="#000"/><polygon points="866.4,882.2 875.8,870.5 962.7,870.5 962.7,890.1 950.1,911.3 929.5,911.3 916.9,900.5 888.5,911.3 872.7,895.5" fill="#000"/><polygon points="971.6,900.5 990.2,900.5 1009.1,917 1009.1,965 983.2,965 983.2,923.3 971.6,917" fill="#000"/><polygon points="1025.9,875.9 1119.1,870.5 1129.2,882.2 1129.2,911.3 1103.9,939.1 1103.9,965 1055.9,965 1055.9,917 1025.9,888.5" fill="#000"/><polygon points="869.6,1200 875.4,1184.6 929.2,1182.7 946.5,1200 952.3,1215.4 944.6,1225 875.4,1225 867.7,1213.5" fill="#000"/><polygon points="890,1138.5 926.2,1138.5 926.2,1184.6 890,1184.6" fill="#000"/><polygon points="952.3,1200 967.7,1188.5 986.9,1200 983.1,1226.9 963.8,1230.8 952.3,1219.2" fill="#000"/><polygon points="1000.4,1207.7 1019.6,1192.3 1044.6,1192.3 1046.5,1207.7 1029.2,1230.8 1010,1226.9" fill="#000"/><polygon points="1052.3,1215.4 1067.7,1194.2 1086.9,1192.3 1088.8,1215.4 1075.4,1226.9 1056.2,1226.9" fill="#000"/><polygon points="1094.6,1200 1113.8,1186.5 1127.3,1192.3 1121.5,1223.1 1100.4,1221.2" fill="#000"/><polygon points="867.7,1276.9 875.4,1271.2 925.4,1271.2 931.2,1292.3 921.5,1301.9 875.4,1301.9 867.7,1292.3" fill="#000"/><polygon points="936.9,1278.8 956.2,1271.2 963.8,1284.6 952.3,1301.9 938.8,1298.1" fill="#000"/><polygon points="948.5,1303.8 967.7,1298.1 990.8,1307.7 992.7,1319.2 952.3,1321.2" fill="#000"/><polygon points="1002.3,1284.6 1029.2,1275 1048.5,1284.6 1040.8,1307.7 1010,1307.7" fill="#000"/><polygon points="1067.7,1280.8 1090.8,1265.4 1102.3,1261.5 1127.3,1284.6 1121.5,1303.8 1090.8,1309.6 1073.5,1300" fill="#000"/><polygon points="1135,1255.8 1145.4,1255.8 1148.5,1263.5 1142.7,1271.2 1135,1271.2" fill="#000"/><polygon points="1600,984.6 1621.4,984.6 1658.9,972.1 1664.3,963.2 1678.6,954.3 1692.9,961.4 1692.9,973.9 1710.7,975.7 1725,963.2 1739.3,965 1741.1,986.4 1716.1,987.3 1716.1,1021.2 1768.8,1021.2 1768.8,1023.9 1819.6,1023.9 1819.6,1040.9 1805.4,1051.6 1725,1051.6 1714.3,1065 1714.3,1075.7 1650,1075.7 1650,1057.9 1600,1057.9" fill="#000"/><polygon points="1600,1057.9 1650,1057.9 1650,1100.7 1653.6,1132.9 1658.9,1179.3 1653.6,1170.4 1626.8,1145.4 1610.7,1145.4 1607.1,1152.5 1600,1145.4" fill="#000"/><polygon points="1714.3,1116.8 1725,1114.1 1739.3,1118.6 1748.2,1132.9 1748.2,1154.3 1725,1154.3 1725,1177.5 1698.2,1177.5 1698.2,1138.2 1714.3,1136.4" fill="#000"/><rect x="1657.1" y="1160.5" width="42.9" height="19.6"/><polygon points="1741.6,785.9 1756.5,785.9 1756.5,808.2 1741.6,808.2" fill="#000"/><polygon points="1292.9,1215 1394.8,1215 1394.8,1259.6 1347,1261.2 1347,1307.4 1324.7,1321.7 1296,1321.7 1276.9,1304.2 1267.4,1275.5 1248.3,1272.4 1267.4,1256.4 1292.9,1256.4" fill="#000"/><rect x="1345.4" y="1310.6" width="7.3" height="17.5"/><polygon points="1696.7,1278.1 1735.5,1278.1 1735.5,1310.6 1696.7,1310.6" fill="#000"/></g>
<path d="M912 532.6 L912 568.9 M1090.8 532.6 L1090.8 568.9 M976.9 855.4 L976.9 872.7 M992.7 855.4 L989.6 872.7 M1097 855.4 L1097 868 L1084.3 874.9 M954.8 929.6 L954.8 942.2 L961.1 951.7 M942.7 1134.6 L954.2 1134.6 L958.1 1142.3 L958.1 1155.8 M1127.3 1139.2 L1127.3 1148.1 L1131.2 1169.2 L1117.7 1184.6 M974.6 1265.4 L974.6 1278.8 M990 1265.4 L990 1278.8 M1052.3 1265.4 L1052.3 1278.8 M1020.8 1221.2 L1020.8 1236.5 M1036.2 1221.2 L1036.2 1236.5 M1728.7 972 L1741.6 967.6 L1741.6 945.4 L1758.3 942.4 M1615.6 934.2 L1647.1 934.2 L1660.1 915.7 L1679.4 908.3 M1615.6 945.4 L1650.8 945.4 L1671.2 919.4 M1615.6 960.2 L1637.8 960.2 L1649 945.4 L1649 934.2 M1392.3 1215 L1392.3 1256.7 L1439.5 1299.7 L1439.5 1348.3 L1413.4 1374.4 L1318.3 1374.4 M1385.8 1215 L1385.8 1259.6 L1433 1302.6 L1433 1345.6 L1410.7 1367.9 L1318.3 1367.9 M1379.3 1215 L1379.3 1262.5 L1426.5 1305.5 L1426.5 1342.9 L1408 1361.4 L1318.3 1361.4 M1267.4 1275.5 L1267.4 1329.7 L1280.1 1342.4 M1275.3 1304.2 L1275.3 1323.3 L1292.9 1339.2 L1318.3 1358.3 M1563.5 1199.1 L1563.5 1211.8 L1600.2 1248.5 L1761 1248.5 L1786.5 1272.4 L1786.5 1283.5 M1589 1199.1 L1589 1232.5 L1598.6 1242.1 L1764.2 1242.1 L1793.5 1270.8 L1793.5 1304.2" fill="none" stroke="#000" stroke-width="5.4" stroke-linejoin="round" stroke-linecap="round"/>
<path d="M1068 600 L1068 606 L1135.3 673.3 L1430.1 673.3 L1449.2 692.4 L1449.2 749.9 L1547.7 848.4 L1547.7 889 M1046 600 L1046 606 L1106.1 666.1 L1433.1 666.1 L1456.4 689.4 L1456.4 746.9 L1554.9 845.4 L1554.9 889 M1024 600 L1024 606 L1076.9 658.9 L1436 658.9 L1463.6 686.5 L1463.6 744 L1562.1 842.5 L1562.1 889 M1001 600 L1001 606 L1046.7 651.7 L1439 651.7 L1470.8 683.5 L1470.8 741 L1569.3 839.5 L1569.3 889 M980 600 L980 606 L1018.5 644.5 L1442 644.5 L1478 680.5 L1478 738 L1576.5 836.5 L1576.5 889 M957 600 L957 606 L988.3 637.3 L1445 637.3 L1485.2 677.5 L1485.2 735 L1583.7 833.5 L1583.7 889 M935 600 L935 606 L959.1 630.1 L1448 630.1 L1492.4 674.5 L1492.4 732 L1590.9 830.5 L1590.9 889 M913 600 L913 606 L929.9 622.9 L1450.9 622.9 L1499.6 671.6 L1499.6 729.1 L1598.1 827.6 L1598.1 889 M892 600 L892 606 L901.7 615.7 L1453.9 615.7 L1506.8 668.6 L1506.8 726.1 L1605.3 824.6 L1605.3 889" fill="none" stroke="#000" stroke-width="9.7" stroke-linejoin="round" stroke-linecap="round"/>
<path d="M1240.7 462.2 L1339.3 462.2 M1220.2 479.6 L1220.2 490.7 M1197.1 500.8 L1211.3 500.8 M1337.1 479.6 L1337.1 490.7 M1314 500.8 L1328.2 500.8" fill="none" stroke="#000" stroke-width="5.5" stroke-linejoin="round" stroke-linecap="round"/>
<path d="M1240.7 449.6 L1221.5 468.6 M1200.9 591.8 L1238.8 591.8 M860 811.8 L875.8 806.4 M856.9 894.8 L875.8 894.8 M1111.2 832.3 L1136.4 832.3 L1150.7 820.6 M1136.4 839.6 L1150.7 830.1 L1163.3 830.1 M911.9 1368.5 L929.2 1368.5 M1125.4 1296.2 L1140.8 1296.2 L1146.5 1301.9 M1306.4 803.4 L1315.4 797.1 L1309.1 790.9 M1856.6 1141.8 L1869.5 1149.2 L1869.5 1167.8 L1860.3 1177.1 M1375 1275.5 L1375 1315.3 M1394.8 1275.5 L1394.8 1315.3 M1425 1316.9 L1420.2 1316.9 L1420.2 1332.9 L1401.1 1350.4 L1369.3 1350.4 L1359.7 1358.3 L1334.3 1358.3 M1416.4 1377.4 L1416.4 1361.5 M1372.5 1404.5 L1375.7 1412.5 L1366.7 1419.5 M1557.2 1323.9 L1579.5 1323.9 L1584.2 1316.9 M1529.1 1283.5 L1544.4 1299.4 M1584.2 1286.7 L1595.4 1275.5 L1662.3 1275.5" fill="none" stroke="#000" stroke-width="5" stroke-linejoin="round" stroke-linecap="round"/>
<path d="M1200.9 553.9 L1200.9 579.1 M1238.8 553.9 L1238.8 579.1 M1317.8 553.9 L1317.8 579.1 M1355.7 553.9 L1355.7 579.1 M1347.2 498.6 L1367.7 498.6 L1382 512.8 L1382 576 M1258.7 582.9 L1276.1 582.9 L1293.5 601.9 L1314.7 601.9 M913.8 1165.4 L913.8 1180.8 M1310.9 723.9 L1310.9 761.4 L1326.1 775.7 L1359.1 775.7 L1374.3 791.8 M1396.1 756.1 L1396.1 770.4 M1277.9 782.9 L1302.9 782.9 L1335.9 817.7 L1374.3 817.7" fill="none" stroke="#000" stroke-width="6" stroke-linejoin="round" stroke-linecap="round"/>
<path d="M1427 1008.7 L1440.1 995.8 M1427 1034.4 L1465.6 995.8 M1427 1060.1 L1478.5 1008.7 M1440.1 1047.2 L1465.6 1021.5 M1478.5 1034.4 L1491.3 1021.5 M1452.7 1060.1 L1465.6 1047.2 M1465.6 1073 L1491.3 1047.2 M1478.5 1085.8 L1491.3 1073 M1427 1085.8 L1440.1 1073 M1401.3 1111.5 L1414.2 1098.7 M1465.6 1098.7 L1491.3 1073 M1491.3 1021.5 L1504.2 1021.5" fill="none" stroke="#000" stroke-width="7.5" stroke-linejoin="round" stroke-linecap="round"/>
<path d="M1401.7 1008.2 L1408.2 1014.2 L1414.6 1008.2 M1401.7 1021.1 L1408.2 1027.1 L1414.6 1021.1 M1401.7 1034 L1408.2 1040 L1414.6 1034 M1401.7 1046.9 L1408.2 1052.9 L1414.6 1046.9 M1401.7 1059.8 L1408.2 1065.8 L1414.6 1059.8 M1401.7 1072.7 L1408.2 1078.7 L1414.6 1072.7 M1401.7 1085.6 L1408.2 1091.6 L1414.6 1085.6 M1401.7 1098.5 L1408.2 1104.5 L1414.6 1098.5 M1337.2 905 L1350.1 917.9 M1337.2 917.9 L1350.1 905 M1375.9 905 L1388.8 917.9 M1375.9 917.9 L1388.8 905 M1427.5 943.7 L1440.4 956.6 M1427.5 956.6 L1440.4 943.7 M1427.5 969.5 L1440.4 982.4 M1427.5 982.4 L1440.4 969.5 M1427.5 1137.2 L1440.4 1150.1 M1427.5 1150.1 L1440.4 1137.2 M1543.6 1098.5 L1556.5 1111.4 M1543.6 1111.4 L1556.5 1098.5 M1466.2 943.7 L1479.1 956.6 M1466.2 956.6 L1479.1 943.7 M1311.4 1201.7 L1311.4 1232 M1324.3 1201.7 L1324.3 1232 M1337.2 1201.7 L1337.2 1232 M1363 1201.7 L1363 1232 M1375.9 1201.7 L1375.9 1232 M1388.8 1201.7 L1388.8 1232 M1401.7 1201.7 L1401.7 1232 M1272.1 731.4 L1272.1 777.5" fill="none" stroke="#000" stroke-width="6.5" stroke-linejoin="round" stroke-linecap="round"/>
<path d="M1221.5 1026.7 L1257.8 1026.7 M1221.5 1030.8 L1254.5 1030.8 M1178.7 1142.6 L1169.7 1152.5 L1166.4 1172.3 M1189.5 1155.8 L1179.6 1164.1 L1169.7 1174 M1182 1180.5 L1189.5 1174.8 L1202.6 1174.8 M1161.4 1221.8 L1160.6 1203.6 L1164.7 1197.9 M1173 1261.3 L1182 1251.4 L1189.5 1248.1 M1726.1 1099.2 L1745.4 1099.2 L1767.6 1121.4 L1797.3 1121.4 L1834.3 1158.5 M1782.4 1106.6 L1834.3 1106.6 M1684.2 1118.9 L1671.2 1115.9 L1663.8 1104.8" fill="none" stroke="#000" stroke-width="5.2" stroke-linejoin="round" stroke-linecap="round"/>
<path d="M1195.2 1029.2 L1207.5 1029.2 M1195.2 1046.2 L1207.5 1046.2 M1695.3 796.3 L1723.1 796.3 M1782.4 908.3 L1819.5 908.3 M1715.7 1213 L1788 1213 M1795.4 1190 L1795.4 1299.8 M1706.8 1243.7 L1718 1257.4" fill="none" stroke="#000" stroke-width="2.2" stroke-linejoin="round" stroke-linecap="round"/>
<path d="M1004.9 811.8 L1004.9 830.4 M1020.8 811.8 L1020.8 830.4 M1036.6 811.8 L1036.6 830.4 M1052.5 811.8 L1052.5 830.4 M1068.3 811.8 L1068.3 830.4 M1084.2 811.8 L1084.2 830.4 M1376.4 800.7 L1376.4 816.8 L1420.4 862.3 L1420.4 900.7 M1380.7 800.7 L1380.7 814.1 L1424.6 860 L1424.6 900.7 M1396.1 800.7 L1396.1 811.4 L1403.2 819.1 L1493.9 819.1 L1538.2 864.1 L1538.2 900.7 M1383.2 825.7 L1493.9 825.7 L1543.9 875.7 L1543.9 900.7 M1422.5 793.9 L1488.6 793.9 L1560 865.4 M1449.6 782 L1449.6 793.2 M1723.1 826.7 L1734.2 815.6 L1750.2 800.8 M1734.2 834.1 L1734.2 823 L1745.4 811.9 M1762 837.8 L1762 878.6 M1567.4 1197.4 L1600.8 1241.9 L1767.6 1241.9 L1790.6 1264.9 L1790.6 1301.2 M1582.2 1193.7 L1582.2 1208.6 L1604.5 1234.5 L1671.2 1236.4" fill="none" stroke="#000" stroke-width="5.6" stroke-linejoin="round" stroke-linecap="round"/>
<path d="M914.4 732.2 L940 732.2 M964.3 727.4 L1093.8 727.4 M1317.1 702.5 L1326.1 702.5 M1338.6 702.5 L1350.2 702.5" fill="none" stroke="#000" stroke-width="2.4" stroke-linejoin="round" stroke-linecap="round"/>
<path d="M885.9 732.2 L885.9 768.5 L894.8 780.2 M914.4 732.2 L914.4 768.5 L926.4 780.2 M1007.9 732.2 L1007.9 778 M1050.2 732.2 L1050.2 762.2 L1036.9 780.2 M1093.8 732.2 L1093.8 763.8 L1084.3 780.2 M1117.5 732.2 L1117.5 778 M885.3 910.6 L885.3 958.7 M929.5 911.3 L919.4 932.8 L919.4 958.7 M945.3 917 L940 932.8 L940 958.7 M1112.8 929.6 L1107.4 939.1 L1107.4 958.7" fill="none" stroke="#000" stroke-width="6.4" stroke-linejoin="round" stroke-linecap="round"/>
<path d="M1027.3 1139.2 L1027.3 1153.8 L1036.9 1169.2 L1036.9 1186.5 M1068.5 1139.2 L1068.5 1151.9 L1083.1 1169.2 L1083.1 1188.5 M865 1363.5 L865 1340.4 L886.9 1317.3 M888.1 1363.5 L888.1 1350 L921.5 1317.3 L954.2 1350 L954.2 1363.5 M958.1 1363.5 L958.1 1326.9 L952.3 1319.2 M981.2 1363.5 L981.2 1319.2 M1011.9 1363.5 L1011.9 1319.2 M1050.4 1363.5 L1050.4 1330.8 L1060 1319.2 M1076.5 1363.5 L1076.5 1319.2" fill="none" stroke="#000" stroke-width="6.2" stroke-linejoin="round" stroke-linecap="round"/>
<path d="M846.5 1196.2 L871.5 1196.2 M804.2 1214.6 L821.5 1214.6" fill="none" stroke="#000" stroke-width="2.6" stroke-linejoin="round" stroke-linecap="round"/>
<path d="M1235 758.8 L1248.4 758.8 M1734.2 1180.8 L1734.2 1210.4 M1795.4 1190 L1856.6 1190 M1205.3 1301 L1218 1301 M1195.7 1320.1 L1195.7 1371.1 M1221.2 1324.9 L1212.6 1339.2 M1233.9 1345.6 L1246.7 1345.6 M1356.5 1382.2 L1367.7 1382.2 M1399.5 1382.2 L1412.3 1382.2 M1377.2 1402.9 L1390 1402.9 M1460 1315.3 L1460 1396.5 M1476 1257.4 L1487.1 1257.4 M1622.5 1237.3 L1622.5 1242.1 M1653.3 1285.1 L1663.9 1285.1" fill="none" stroke="#000" stroke-width="2" stroke-linejoin="round" stroke-linecap="round"/>
<path d="M1590.6 1299.4 L1598.6 1305.8 L1598.6 1340.8 L1516.7 1423.6 L1479.2 1423.6 M1590.6 1299.4 L1600.8 1305.8 L1600.8 1339.9 L1517.8 1421.4 L1479.2 1421.4" fill="none" stroke="#000" stroke-width="4.8" stroke-linejoin="round" stroke-linecap="round"/>
<path d="M912 532.6 L912 568.9 M1090.8 532.6 L1090.8 568.9 M932.5 532.6 L932.5 539.4 L912.1 559.8 L912.1 568.9 M947.4 532.6 L947.4 539.4 L952.2 545.4 L952.2 568.9 M971.8 532.6 L980.9 540.9 L980.9 568.9 M990 532.6 L990 536.4 L985.4 540.9 L985.4 568.9 M1003.6 532.6 L1024.7 553 L1024.7 568.9 M1030.8 532.6 L1030.8 540.9 L1045.1 555.3 L1045.1 568.9 M1021.7 532.6 L1021.7 539.4 L1027.8 545.4 M1041.4 532.6 L1041.4 540.9 L1050.4 550 L1067.8 567.4 M942.4 602.1 L942.4 628.6 L953.7 640 M988.5 602.1 L988.5 631.6 L996 640 M1033.8 602.1 L1033.8 610.4 L1048.9 625.5 M1258.7 582.9 L1276.1 582.9 L1293.5 601.9 L1314.7 601.9 M1376.4 800.7 L1376.4 816.8 L1420.4 862.3 L1420.4 900.7 M1380.7 800.7 L1380.7 814.1 L1424.6 860 L1424.6 900.7 M1396.1 800.7 L1396.1 811.4 L1403.2 819.1 L1493.9 819.1 L1538.2 864.1 L1538.2 900.7 M1383.2 825.7 L1493.9 825.7 L1543.9 875.7 L1543.9 900.7 M1422.5 793.9 L1488.6 793.9 L1560 865.4 M1449.6 782 L1449.6 793.2 M1723.1 826.7 L1734.2 815.6 L1750.2 800.8 M1734.2 834.1 L1734.2 823 L1745.4 811.9 M1762 837.8 L1762 878.6 M1567.4 1197.4 L1600.8 1241.9 L1767.6 1241.9 L1790.6 1264.9 L1790.6 1301.2 M1582.2 1193.7 L1582.2 1208.6 L1604.5 1234.5 L1671.2 1236.4" fill="none" stroke="#c1f06a" stroke-width="2.2" stroke-linejoin="round" stroke-linecap="round"/>
<path d="M923.5 562.8 L923.5 568.9 M967.3 562.8 L967.3 568.9 M1008.1 561.3 L1008.1 568.9 M968.1 571.1 L968.1 631.6 L974.9 640 M1015.7 571.1 L1015.7 616.5 L1024.7 627.1" fill="none" stroke="#c1f06a" stroke-width="4.5" stroke-linejoin="round" stroke-linecap="round"/>
<path d="M923.5 571.1 L923.5 616.5 L944.6 637.6" fill="none" stroke="#c1f06a" stroke-width="4" stroke-linejoin="round" stroke-linecap="round"/>
<path d="M902.3 598.3 L905.3 601.4 L909.9 598.3 M1030.8 598.3 L1036.1 601.4 L1041.4 598.3 M989.6 910.6 L995.9 926.4 L995.9 958 M913.8 1165.4 L913.8 1180.8" fill="none" stroke="#c1f06a" stroke-width="3" stroke-linejoin="round" stroke-linecap="round"/>
<path d="M1068 600 L1068 606 L1135.3 673.3 L1430.1 673.3 L1449.2 692.4 L1449.2 749.9 L1547.7 848.4 L1547.7 889 M1046 600 L1046 606 L1106.1 666.1 L1433.1 666.1 L1456.4 689.4 L1456.4 746.9 L1554.9 845.4 L1554.9 889 M1024 600 L1024 606 L1076.9 658.9 L1436 658.9 L1463.6 686.5 L1463.6 744 L1562.1 842.5 L1562.1 889 M1001 600 L1001 606 L1046.7 651.7 L1439 651.7 L1470.8 683.5 L1470.8 741 L1569.3 839.5 L1569.3 889 M980 600 L980 606 L1018.5 644.5 L1442 644.5 L1478 680.5 L1478 738 L1576.5 836.5 L1576.5 889 M957 600 L957 606 L988.3 637.3 L1445 637.3 L1485.2 677.5 L1485.2 735 L1583.7 833.5 L1583.7 889 M935 600 L935 606 L959.1 630.1 L1448 630.1 L1492.4 674.5 L1492.4 732 L1590.9 830.5 L1590.9 889 M913 600 L913 606 L929.9 622.9 L1450.9 622.9 L1499.6 671.6 L1499.6 729.1 L1598.1 827.6 L1598.1 889 M892 600 L892 606 L901.7 615.7 L1453.9 615.7 L1506.8 668.6 L1506.8 726.1 L1605.3 824.6 L1605.3 889" fill="none" stroke="#c1f06a" stroke-width="4.7" stroke-linejoin="round" stroke-linecap="round"/>
<path d="M1240.7 462.2 L1339.3 462.2 M1240.7 449.6 L1221.5 468.6 M1220.2 479.6 L1220.2 490.7 M1197.1 500.8 L1211.3 500.8 M1337.1 479.6 L1337.1 490.7 M1314 500.8 L1328.2 500.8 M1200.9 591.8 L1238.8 591.8 M1630.7 719.6 L1630.7 751.2 L1613.7 767.9 L1613.7 882.3 M1596.3 754.3 L1603.2 754.3 L1613.7 765.4 M1646.8 719.6 L1646.8 751.2 L1641.1 755.9 M1663.3 719.6 L1663.3 751.2 L1656.9 755.9 M1578 732.2 L1571.7 744.8 M1311.4 1201.7 L1311.4 1232 M1324.3 1201.7 L1324.3 1232 M1337.2 1201.7 L1337.2 1232 M1363 1201.7 L1363 1232 M1375.9 1201.7 L1375.9 1232 M1388.8 1201.7 L1388.8 1232 M1401.7 1201.7 L1401.7 1232 M1004.9 811.8 L1004.9 830.4 M1020.8 811.8 L1020.8 830.4 M1036.6 811.8 L1036.6 830.4 M1052.5 811.8 L1052.5 830.4 M1068.3 811.8 L1068.3 830.4 M1084.2 811.8 L1084.2 830.4 M976.9 855.4 L976.9 872.7 M992.7 855.4 L989.6 872.7 M1097 855.4 L1097 868 L1084.3 874.9 M954.8 929.6 L954.8 942.2 L961.1 951.7 M860 811.8 L875.8 806.4 M856.9 894.8 L875.8 894.8 M1111.2 832.3 L1136.4 832.3 L1150.7 820.6 M1136.4 839.6 L1150.7 830.1 L1163.3 830.1 M942.7 1134.6 L954.2 1134.6 L958.1 1142.3 L958.1 1155.8 M1127.3 1139.2 L1127.3 1148.1 L1131.2 1169.2 L1117.7 1184.6 M974.6 1265.4 L974.6 1278.8 M990 1265.4 L990 1278.8 M1052.3 1265.4 L1052.3 1278.8 M1020.8 1221.2 L1020.8 1236.5 M1036.2 1221.2 L1036.2 1236.5 M911.9 1368.5 L929.2 1368.5 M1125.4 1296.2 L1140.8 1296.2 L1146.5 1301.9 M1306.4 803.4 L1315.4 797.1 L1309.1 790.9 M1600 1047.1 L1678.6 1047.1 M1600 1051.6 L1653.6 1051.6 M1728.7 972 L1741.6 967.6 L1741.6 945.4 L1758.3 942.4 M1615.6 934.2 L1647.1 934.2 L1660.1 915.7 L1679.4 908.3 M1615.6 945.4 L1650.8 945.4 L1671.2 919.4 M1615.6 960.2 L1637.8 960.2 L1649 945.4 L1649 934.2 M1726.1 1099.2 L1745.4 1099.2 L1767.6 1121.4 L1797.3 1121.4 L1834.3 1158.5 M1782.4 1106.6 L1834.3 1106.6 M1684.2 1118.9 L1671.2 1115.9 L1663.8 1104.8 M1856.6 1141.8 L1869.5 1149.2 L1869.5 1167.8 L1860.3 1177.1 M1305.6 1215 L1305.6 1254.8 M1318.3 1215 L1318.3 1254.8 M1331.1 1215 L1331.1 1254.8 M1343.8 1215 L1343.8 1254.8 M1359.7 1215 L1359.7 1254.8 M1372.5 1215 L1372.5 1254.8 M1375 1275.5 L1375 1315.3 M1394.8 1275.5 L1394.8 1315.3 M1392.3 1215 L1392.3 1256.7 L1439.5 1299.7 L1439.5 1348.3 L1413.4 1374.4 L1318.3 1374.4 M1385.8 1215 L1385.8 1259.6 L1433 1302.6 L1433 1345.6 L1410.7 1367.9 L1318.3 1367.9 M1379.3 1215 L1379.3 1262.5 L1426.5 1305.5 L1426.5 1342.9 L1408 1361.4 L1318.3 1361.4 M1425 1316.9 L1420.2 1316.9 L1420.2 1332.9 L1401.1 1350.4 L1369.3 1350.4 L1359.7 1358.3 L1334.3 1358.3 M1267.4 1275.5 L1267.4 1329.7 L1280.1 1342.4 M1275.3 1304.2 L1275.3 1323.3 L1292.9 1339.2 L1318.3 1358.3 M1416.4 1377.4 L1416.4 1361.5 M1372.5 1404.5 L1375.7 1412.5 L1366.7 1419.5 M1557.2 1323.9 L1579.5 1323.9 L1584.2 1316.9 M1529.1 1283.5 L1544.4 1299.4 M1584.2 1286.7 L1595.4 1275.5 L1662.3 1275.5 M1563.5 1199.1 L1563.5 1211.8 L1600.2 1248.5 L1761 1248.5 L1786.5 1272.4 L1786.5 1283.5 M1589 1199.1 L1589 1232.5 L1598.6 1242.1 L1764.2 1242.1 L1793.5 1270.8 L1793.5 1304.2" fill="none" stroke="#c1f06a" stroke-width="2" stroke-linejoin="round" stroke-linecap="round"/>
<path d="M1200.9 553.9 L1200.9 579.1 M1238.8 553.9 L1238.8 579.1 M1317.8 553.9 L1317.8 579.1 M1355.7 553.9 L1355.7 579.1 M1347.2 498.6 L1367.7 498.6 L1382 512.8 L1382 576 M1678.4 719.6 L1678.4 755.9 L1664.8 771.1 L1633.2 771.1 M885.9 732.2 L885.9 768.5 L894.8 780.2 M914.4 732.2 L914.4 768.5 L926.4 780.2 M1007.9 732.2 L1007.9 778 M1050.2 732.2 L1050.2 762.2 L1036.9 780.2 M1093.8 732.2 L1093.8 763.8 L1084.3 780.2 M1117.5 732.2 L1117.5 778 M885.3 910.6 L885.3 958.7 M929.5 911.3 L919.4 932.8 L919.4 958.7 M945.3 917 L940 932.8 L940 958.7 M1112.8 929.6 L1107.4 939.1 L1107.4 958.7 M1027.3 1139.2 L1027.3 1153.8 L1036.9 1169.2 L1036.9 1186.5 M1068.5 1139.2 L1068.5 1151.9 L1083.1 1169.2 L1083.1 1188.5 M865 1363.5 L865 1340.4 L886.9 1317.3 M888.1 1363.5 L888.1 1350 L921.5 1317.3 L954.2 1350 L954.2 1363.5 M958.1 1363.5 L958.1 1326.9 L952.3 1319.2 M981.2 1363.5 L981.2 1319.2 M1011.9 1363.5 L1011.9 1319.2 M1050.4 1363.5 L1050.4 1330.8 L1060 1319.2 M1076.5 1363.5 L1076.5 1319.2 M1310.9 723.9 L1310.9 761.4 L1326.1 775.7 L1359.1 775.7 L1374.3 791.8 M1396.1 756.1 L1396.1 770.4 M1277.9 782.9 L1302.9 782.9 L1335.9 817.7 L1374.3 817.7" fill="none" stroke="#c1f06a" stroke-width="2.4" stroke-linejoin="round" stroke-linecap="round"/>
<path d="M1427 1008.7 L1440.1 995.8 M1427 1034.4 L1465.6 995.8 M1427 1060.1 L1478.5 1008.7 M1440.1 1047.2 L1465.6 1021.5 M1478.5 1034.4 L1491.3 1021.5 M1452.7 1060.1 L1465.6 1047.2 M1465.6 1073 L1491.3 1047.2 M1478.5 1085.8 L1491.3 1073 M1427 1085.8 L1440.1 1073 M1401.3 1111.5 L1414.2 1098.7 M1465.6 1098.7 L1491.3 1073 M1491.3 1021.5 L1504.2 1021.5" fill="none" stroke="#c1f06a" stroke-width="3.9" stroke-linejoin="round" stroke-linecap="round"/>
<path d="M1401.7 1008.2 L1408.2 1014.2 L1414.6 1008.2 M1401.7 1021.1 L1408.2 1027.1 L1414.6 1021.1 M1401.7 1034 L1408.2 1040 L1414.6 1034 M1401.7 1046.9 L1408.2 1052.9 L1414.6 1046.9 M1401.7 1059.8 L1408.2 1065.8 L1414.6 1059.8 M1401.7 1072.7 L1408.2 1078.7 L1414.6 1072.7 M1401.7 1085.6 L1408.2 1091.6 L1414.6 1085.6 M1401.7 1098.5 L1408.2 1104.5 L1414.6 1098.5 M1337.2 905 L1350.1 917.9 M1337.2 917.9 L1350.1 905 M1375.9 905 L1388.8 917.9 M1375.9 917.9 L1388.8 905 M1427.5 943.7 L1440.4 956.6 M1427.5 956.6 L1440.4 943.7 M1427.5 969.5 L1440.4 982.4 M1427.5 982.4 L1440.4 969.5 M1427.5 1137.2 L1440.4 1150.1 M1427.5 1150.1 L1440.4 1137.2 M1543.6 1098.5 L1556.5 1111.4 M1543.6 1111.4 L1556.5 1098.5 M1466.2 943.7 L1479.1 956.6 M1466.2 956.6 L1479.1 943.7 M1272.1 731.4 L1272.1 777.5" fill="none" stroke="#c1f06a" stroke-width="2.6" stroke-linejoin="round" stroke-linecap="round"/>
<path d="M1175.4 1055.1 L1257 1055.1 L1273.5 1025.1 L1282.5 1025.1 M1174.1 1059.2 L1257.6 1059.2 L1276.4 1025.5 L1282.5 1025.5 M1172.7 1063.3 L1258.3 1063.3 L1279.3 1026 L1282.5 1026 M1171.4 1067.4 L1259 1067.4 L1282.3 1026.5 L1282.5 1026.5 M1170.1 1071.5 L1259.6 1071.5 L1285.2 1027 L1282.5 1027 M1106.2 1075.7 L1260.3 1075.7 L1288.1 1027.5 L1282.5 1027.5 M1106.2 1079.8 L1260.9 1079.8 L1291 1028 L1282.5 1028 M1149.3 992.1 L1152.6 995.4 L1152.6 1064.9 L1159.2 1071.5 L1178.7 1071.5 M1154.3 982.2 L1157.6 985.5 L1157.6 1061.5 L1163.5 1067.4 L1178.7 1067.4 M1159.2 975.6 L1162.5 978.9 L1162.5 1058 L1167.8 1063.3 L1178.7 1063.3 M1167.5 978.9 L1167.5 978.9 L1167.5 1054.6 L1172.1 1059.2 L1178.7 1059.2 M1174.1 969 L1174.1 969 L1174.1 1051.1 L1178 1055.1 L1178.7 1055.1 M1145.7 1032.5 L1084.7 1032.5 L1084.7 1074.5 M1142.4 1036.6 L1089.7 1036.6 L1089.7 1072.9 L1095.4 1072.9 L1095.4 1053.1 M1106.2 1040.7 L1122.6 1040.7 M1106.2 1046.5 L1122.6 1046.5 M1106.2 1052.3 L1122.6 1052.3 M1103.2 1043.2 L1103.2 1074.5 M1127.6 1042.4 L1145.7 1042.4 M1127.6 1048.1 L1145.7 1048.1 M1127.6 1053.9 L1147.4 1053.9 M1127.6 1059.7 L1158.9 1059.7 M1083.1 1080.3 L1101.2 1080.3 L1104.5 1077.8 L1256.2 1077.8 M1238.8 892.9 L1262.7 892.9 L1282.5 915.4 M1246.3 896.4 L1261.6 896.8 L1282.5 923 M1238.8 903.3 L1260.4 900.8 L1282.5 930.5 M1246.3 906.8 L1259.2 904.7 L1282.5 938 M1238.8 913.7 L1258 908.7 L1282.5 945.5 M1196.8 903.9 L1215.8 922.5 L1254.5 920.4 L1280.1 945.9 M1205.1 903.9 L1218.2 918.2 L1233.1 918.2 M1243 980.5 L1246.3 974.8 L1282.5 964.1 M1247.9 975.6 L1250.4 978.4 L1282.5 970.7 M1252.9 970.7 L1254.5 982 L1282.5 977.3 M1257.8 965.7 L1258.6 985.7 L1282.5 983.8 M1219.6 966.5 L1236.4 983.5 L1282.5 985.5 M1238 1000.3 L1261.1 998.7 L1282.5 997.9 M1242.6 1005.3 L1263.6 1004.3 L1282.5 1004.1 M1247.3 1010.2 L1266 1009.9 L1282.5 1010.4 M1251.9 1015.2 L1268.5 1015.5 L1282.5 1016.6 M1256.5 1020.1 L1271 1021.1 L1282.5 1022.9 M1221.5 1026.7 L1257.8 1026.7 M1221.5 1030.8 L1254.5 1030.8 M1288.4 1101.4 L1282.6 1101.4 L1241.7 1142.3 L1179.6 1142.3 M1288.4 1109.3 L1282.6 1109.3 L1239.4 1152.5 L1209.2 1152.5 M1288.4 1117.3 L1282.6 1117.3 L1219.3 1180.5 L1205.9 1180.5 M1288.4 1125.2 L1282.6 1125.2 L1208.7 1199 L1168 1199 M1288.4 1133.1 L1282.6 1133.1 L1208.4 1207.3 L1184.5 1207.3 M1288.4 1141 L1282.6 1141 L1208.4 1215.2 L1191.1 1215.2 M1288.4 1148.9 L1282.6 1148.9 L1194.9 1236.6 L1171.3 1236.6 M1288.4 1156.8 L1282.6 1156.8 L1197 1242.4 L1166.4 1242.4 M1288.4 1164.7 L1282.6 1164.7 L1200 1247.3 L1182.9 1247.3 M1222.4 1157.5 L1207.6 1157.5 L1205.9 1152.5 L1222.4 1152.5 M1204.3 1188.8 L1204.3 1178.9 L1209.2 1176.4 L1209.2 1188.8 L1215 1188.8 L1215 1177.3 L1220.8 1176.4 L1220.8 1190.4 M1178.7 1142.6 L1169.7 1152.5 L1166.4 1172.3 M1189.5 1155.8 L1179.6 1164.1 L1169.7 1174 M1182 1180.5 L1189.5 1174.8 L1202.6 1174.8 M1161.4 1221.8 L1160.6 1203.6 L1164.7 1197.9 M1173 1261.3 L1182 1251.4 L1189.5 1248.1" fill="none" stroke="#c1f06a" stroke-width="1.9" stroke-linejoin="round" stroke-linecap="round"/>
<path d="M1065.4 902.7 L1076.4 918.5 L1087.5 902.7 M1076.4 918.5 L1076.4 943.8 M1100.1 902.7 L1100.1 928" fill="none" stroke="#c1f06a" stroke-width="5" stroke-linejoin="round" stroke-linecap="round"/>
<path d="M1590.6 1299.4 L1598.6 1305.8 L1598.6 1340.8 L1516.7 1423.6 L1479.2 1423.6 M1590.6 1299.4 L1600.8 1305.8 L1600.8 1339.9 L1517.8 1421.4 L1479.2 1421.4" fill="none" stroke="#c1f06a" stroke-width="1.8" stroke-linejoin="round" stroke-linecap="round"/>
<g fill="#000"><polygon points="929.5,602.6 1055.9,602.6 1074.8,623.2 1130.1,654.8 988,654.8 929.5,627.9"/></g>
<path d="M969.7 602.6 L969.7 623.2 L1024.3 654.8 M1019.6 602.6 L1019.6 615.3 L1090.6 654.8" fill="none" stroke="#c1f06a" stroke-width="4" stroke-linejoin="round" stroke-linecap="round"/>
<path d="M997.5 602.6 L997.5 620 L1059.1 654.8 M945.3 602.6 L945.3 627.9 L992.7 654.8 M1043.3 602.6 L1043.3 610.5 L1119.1 654.8" fill="none" stroke="#c1f06a" stroke-width="2.2" stroke-linejoin="round" stroke-linecap="round"/>

<rect x="842.7" y="312" width="30.6" height="52" rx="15.3" fill="#f8b55e"/><rect x="848.5" y="317" width="19" height="42" rx="9.5" fill="#404040" stroke="#000" stroke-width="1"/><rect x="842.7" y="423" width="30.6" height="66" rx="15.3" fill="#f8b55e"/><rect x="848.5" y="428" width="19" height="56" rx="9.5" fill="#404040" stroke="#000" stroke-width="1"/><rect x="1129.7" y="312" width="30.6" height="52" rx="15.3" fill="#f8b55e"/><rect x="1135.5" y="317" width="19" height="42" rx="9.5" fill="#404040" stroke="#000" stroke-width="1"/><rect x="1129.7" y="423" width="30.6" height="66" rx="15.3" fill="#f8b55e"/><rect x="1135.5" y="428" width="19" height="56" rx="9.5" fill="#404040" stroke="#000" stroke-width="1"/><rect x="908.9" y="432.8" width="6.2" height="99.8" fill="#f8b55e" stroke="#000" stroke-width="1.7"/><rect x="918.9" y="434.8" width="6" height="97.8" fill="#f7b66c"/><rect x="928.8" y="432.8" width="6.2" height="99.8" fill="#f8b55e" stroke="#000" stroke-width="1.7"/><rect x="938.7" y="432.8" width="6.2" height="99.8" fill="#f8b55e" stroke="#000" stroke-width="1.7"/><rect x="948.7" y="434.8" width="6" height="97.8" fill="#f7b66c"/><rect x="958.5" y="432.8" width="6.2" height="99.8" fill="#f8b55e" stroke="#000" stroke-width="1.7"/><rect x="968.5" y="432.8" width="6.2" height="99.8" fill="#f8b55e" stroke="#000" stroke-width="1.7"/><rect x="978.5" y="434.8" width="6" height="97.8" fill="#f7b66c"/><rect x="988.3" y="432.8" width="6.2" height="99.8" fill="#f8b55e" stroke="#000" stroke-width="1.7"/><rect x="998.3" y="432.8" width="6.2" height="99.8" fill="#f8b55e" stroke="#000" stroke-width="1.7"/><rect x="1008.3" y="434.8" width="6" height="97.8" fill="#f7b66c"/><rect x="1018.1" y="432.8" width="6.2" height="99.8" fill="#f8b55e" stroke="#000" stroke-width="1.7"/><rect x="1028.1" y="432.8" width="6.2" height="99.8" fill="#f8b55e" stroke="#000" stroke-width="1.7"/><rect x="1038" y="432.8" width="6.2" height="99.8" fill="#f8b55e" stroke="#000" stroke-width="1.7"/><rect x="1047.9" y="432.8" width="6.2" height="106.6" fill="#f8b55e" rx="3" stroke="#000" stroke-width="1.7"/><rect x="1057.9" y="432.8" width="6.2" height="117.2" fill="#f8b55e" rx="3" stroke="#000" stroke-width="1.7"/><rect x="1067.9" y="434.8" width="6" height="97.8" fill="#f7b66c"/><rect x="1077.7" y="432.8" width="6.2" height="109.6" fill="#f8b55e" rx="3" stroke="#000" stroke-width="1.7"/><rect x="1087.6" y="432.8" width="6.2" height="99.8" fill="#f8b55e" stroke="#000" stroke-width="1.7"/><circle cx="928.8" cy="561.3" r="2.3" fill="#f8b55e" stroke="#000" stroke-width="1.8"/><circle cx="967.3" cy="560.6" r="2.3" fill="#f8b55e" stroke="#000" stroke-width="1.8"/><circle cx="1007.4" cy="558.3" r="2.3" fill="#f8b55e" stroke="#000" stroke-width="1.8"/><circle cx="1050.4" cy="558.3" r="2.3" fill="#f8b55e" stroke="#000" stroke-width="1.8"/><circle cx="1051.2" cy="539.4" r="2.3" fill="#f8b55e" stroke="#000" stroke-width="1.8"/><circle cx="1061" cy="550" r="2.3" fill="#f8b55e" stroke="#000" stroke-width="1.8"/><circle cx="1080.7" cy="539.4" r="2.3" fill="#f8b55e" stroke="#000" stroke-width="1.8"/><rect x="886.2" y="571.8" width="9.6" height="9.6" fill="#f8b55e" stroke="#000" stroke-width="1.7"/><rect x="886.2" y="589.5" width="9.6" height="9.6" fill="#f8b55e" stroke="#000" stroke-width="1.7"/><rect x="908" y="571.8" width="9.6" height="9.6" fill="#f8b55e" stroke="#000" stroke-width="1.7"/><rect x="908" y="589.5" width="9.6" height="9.6" fill="#f8b55e" stroke="#000" stroke-width="1.7"/><rect x="930.2" y="571.8" width="9.6" height="9.6" fill="#f8b55e" stroke="#000" stroke-width="1.7"/><rect x="930.2" y="589.5" width="9.6" height="9.6" fill="#f8b55e" stroke="#000" stroke-width="1.7"/><rect x="951.6" y="571.8" width="9.6" height="9.6" fill="#f8b55e" stroke="#000" stroke-width="1.7"/><rect x="951.6" y="589.5" width="9.6" height="9.6" fill="#f8b55e" stroke="#000" stroke-width="1.7"/><rect x="975.2" y="571.8" width="9.6" height="9.6" fill="#f8b55e" stroke="#000" stroke-width="1.7"/><rect x="975.2" y="589.5" width="9.6" height="9.6" fill="#f8b55e" stroke="#000" stroke-width="1.7"/><rect x="996.2" y="571.8" width="9.6" height="9.6" fill="#f8b55e" stroke="#000" stroke-width="1.7"/><rect x="996.2" y="589.5" width="9.6" height="9.6" fill="#f8b55e" stroke="#000" stroke-width="1.7"/><rect x="1019.2" y="571.8" width="9.6" height="9.6" fill="#f8b55e" stroke="#000" stroke-width="1.7"/><rect x="1019.2" y="589.5" width="9.6" height="9.6" fill="#f8b55e" stroke="#000" stroke-width="1.7"/><rect x="1040.7" y="571.8" width="9.6" height="9.6" fill="#f8b55e" stroke="#000" stroke-width="1.7"/><rect x="1040.7" y="589.5" width="9.6" height="9.6" fill="#f8b55e" stroke="#000" stroke-width="1.7"/><rect x="1063.7" y="571.8" width="9.6" height="9.6" fill="#f8b55e" stroke="#000" stroke-width="1.7"/><rect x="1063.7" y="589.5" width="9.6" height="9.6" fill="#f8b55e" stroke="#000" stroke-width="1.7"/><rect x="1084.2" y="570.5" width="11" height="10" fill="#f8b55e" stroke="#000" stroke-width="1.7"/><rect x="1085.2" y="591" width="9" height="8" fill="#f7b66c"/><rect x="1107" y="571.6" width="10" height="10" fill="#f8b55e" rx="3" stroke="#000" stroke-width="1.7"/><rect x="1107" y="589.3" width="10" height="10" fill="#f8b55e" rx="3" stroke="#000" stroke-width="1.7"/><rect x="1216.3" y="444.5" width="9" height="9" fill="#f7b66c"/><rect x="1235.7" y="444" width="10" height="10" fill="#f8b55e" stroke="#000" stroke-width="1.7"/><rect x="1215.5" y="464.5" width="12" height="12.5" fill="#f8b55e" rx="4" stroke="#000" stroke-width="1.7"/><rect x="1233.8" y="464.5" width="12" height="12.5" fill="#f8b55e" rx="4" stroke="#000" stroke-width="1.7"/><rect x="1332.4" y="464.5" width="12" height="12.5" fill="#f8b55e" rx="4" stroke="#000" stroke-width="1.7"/><rect x="1350.1" y="464.5" width="12" height="12.5" fill="#f8b55e" rx="4" stroke="#000" stroke-width="1.7"/><circle cx="1371.5" cy="470.1" r="2.6" fill="#f8b55e" stroke="#000" stroke-width="1.8"/><rect x="1210.4" y="490" width="19.9" height="25.9" fill="#f8b55e" stroke="#000" stroke-width="1.7"/><rect x="1190.8" y="532.4" width="20.5" height="21.5" fill="#f8b55e" stroke="#000" stroke-width="1.7"/><rect x="1228.7" y="532.4" width="20.2" height="21.5" fill="#f8b55e" stroke="#000" stroke-width="1.7"/><circle cx="1196.5" cy="500.8" r="2.6" fill="#f8b55e" stroke="#000" stroke-width="1.8"/><rect x="1327.3" y="490" width="19.9" height="25.9" fill="#f8b55e" stroke="#000" stroke-width="1.7"/><rect x="1307.7" y="532.4" width="20.5" height="21.5" fill="#f8b55e" stroke="#000" stroke-width="1.7"/><rect x="1345.6" y="532.4" width="20.2" height="21.5" fill="#f8b55e" stroke="#000" stroke-width="1.7"/><circle cx="1313.4" cy="500.8" r="2.6" fill="#f8b55e" stroke="#000" stroke-width="1.8"/><rect x="1194.9" y="576.7" width="12" height="12.5" fill="#f8b55e" rx="4" stroke="#000" stroke-width="1.7"/><rect x="1194.9" y="594.4" width="12" height="12.5" fill="#f8b55e" rx="4" stroke="#000" stroke-width="1.7"/><rect x="1232.8" y="576.7" width="12" height="12.5" fill="#f8b55e" rx="4" stroke="#000" stroke-width="1.7"/><rect x="1232.8" y="594.4" width="12" height="12.5" fill="#f8b55e" rx="4" stroke="#000" stroke-width="1.7"/><rect x="1252.7" y="576.7" width="12" height="12.5" fill="#f8b55e" rx="4" stroke="#000" stroke-width="1.7"/><rect x="1252.7" y="594.4" width="12" height="12.5" fill="#f8b55e" rx="4" stroke="#000" stroke-width="1.7"/><rect x="1308.7" y="576.7" width="12" height="12.5" fill="#f8b55e" rx="4" stroke="#000" stroke-width="1.7"/><rect x="1308.7" y="594.4" width="12" height="12.5" fill="#f8b55e" rx="4" stroke="#000" stroke-width="1.7"/><rect x="1327.6" y="576.7" width="12" height="12.5" fill="#f8b55e" rx="4" stroke="#000" stroke-width="1.7"/><rect x="1327.6" y="594.4" width="12" height="12.5" fill="#f8b55e" rx="4" stroke="#000" stroke-width="1.7"/><rect x="1349.1" y="576.7" width="12" height="12.5" fill="#f8b55e" rx="4" stroke="#000" stroke-width="1.7"/><rect x="1349.1" y="594.4" width="12" height="12.5" fill="#f8b55e" rx="4" stroke="#000" stroke-width="1.7"/><rect x="1374.7" y="575.7" width="10" height="10" fill="#f8b55e" stroke="#000" stroke-width="1.7"/><rect x="1375.2" y="596.8" width="9" height="9" fill="#f7b66c"/><circle cx="1275.5" cy="582.3" r="2.6" fill="#f8b55e" stroke="#000" stroke-width="1.8"/><circle cx="1271.4" cy="600.6" r="2.6" fill="#f8b55e" stroke="#000" stroke-width="1.8"/><rect x="1611.2" y="675.5" width="8" height="44" fill="#f7b66c"/><rect x="1625.9" y="675" width="9.6" height="45" fill="#f8b55e" stroke="#000" stroke-width="1.7"/><rect x="1642" y="675" width="9.6" height="45" fill="#f8b55e" stroke="#000" stroke-width="1.7"/><rect x="1658.5" y="675" width="9.6" height="45" fill="#f8b55e" stroke="#000" stroke-width="1.7"/><rect x="1673.6" y="675" width="9.6" height="45" fill="#f8b55e" stroke="#000" stroke-width="1.7"/><rect x="1560" y="748" width="10.1" height="14.2" fill="#f8b55e" stroke="#000" stroke-width="1.7"/><rect x="1582.7" y="748" width="11.1" height="14.2" fill="#f8b55e" stroke="#000" stroke-width="1.7"/><circle cx="1640.2" cy="755.9" r="2.2" fill="#f8b55e" stroke="#000" stroke-width="1.8"/><circle cx="1656" cy="755.9" r="2.2" fill="#f8b55e" stroke="#000" stroke-width="1.8"/><circle cx="1632.6" cy="771.7" r="2.2" fill="#f8b55e" stroke="#000" stroke-width="1.8"/><circle cx="1623.1" cy="799.2" r="2.2" fill="#f8b55e" stroke="#000" stroke-width="1.8"/><rect x="1295.7" y="889.7" width="5.6" height="4.8" fill="#f7b66c" opacity="0.85"/><rect x="1308.6" y="889.7" width="5.6" height="4.8" fill="#f7b66c" opacity="0.85"/><rect x="1321.5" y="889.7" width="5.6" height="4.8" fill="#f7b66c" opacity="0.85"/><rect x="1334.4" y="889.7" width="5.6" height="4.8" fill="#f7b66c" opacity="0.85"/><rect x="1347.3" y="889.7" width="5.6" height="4.8" fill="#f7b66c" opacity="0.85"/><rect x="1360.2" y="889.7" width="5.6" height="4.8" fill="#f7b66c" opacity="0.85"/><rect x="1373.1" y="889.7" width="5.6" height="4.8" fill="#f7b66c" opacity="0.85"/><rect x="1386" y="889.7" width="5.6" height="4.8" fill="#f7b66c" opacity="0.85"/><rect x="1398.9" y="889.7" width="5.6" height="4.8" fill="#f7b66c" opacity="0.85"/><rect x="1411.2" y="888.9" width="6.8" height="6.4" fill="#f8b55e" stroke="#000" stroke-width="1.9"/><rect x="1424.1" y="888.9" width="6.8" height="6.4" fill="#f8b55e" stroke="#000" stroke-width="1.9"/><rect x="1437.6" y="889.7" width="5.6" height="4.8" fill="#f7b66c" opacity="0.85"/><rect x="1463.4" y="889.7" width="5.6" height="4.8" fill="#f7b66c" opacity="0.85"/><rect x="1476.3" y="889.7" width="5.6" height="4.8" fill="#f7b66c" opacity="0.85"/><rect x="1489.2" y="889.7" width="5.6" height="4.8" fill="#f7b66c" opacity="0.85"/><rect x="1502.1" y="889.7" width="5.6" height="4.8" fill="#f7b66c" opacity="0.85"/><rect x="1514.4" y="888.9" width="6.8" height="6.4" fill="#f8b55e" stroke="#000" stroke-width="1.9"/><rect x="1527.4" y="889" width="6.6" height="6.2" fill="#f8b55e"/><rect x="1540.2" y="888.9" width="6.8" height="6.4" fill="#f8b55e" stroke="#000" stroke-width="1.9"/><rect x="1553.2" y="889" width="6.6" height="6.2" fill="#f8b55e"/><rect x="1566.1" y="889" width="6.6" height="6.2" fill="#f8b55e"/><rect x="1579" y="889" width="6.6" height="6.2" fill="#f8b55e"/><rect x="1591.9" y="889" width="6.6" height="6.2" fill="#f8b55e"/><rect x="1604.8" y="889" width="6.6" height="6.2" fill="#f8b55e"/><rect x="1295.7" y="902.6" width="5.6" height="4.8" fill="#f7b66c" opacity="0.85"/><rect x="1308.6" y="902.6" width="5.6" height="4.8" fill="#f7b66c" opacity="0.85"/><rect x="1321.5" y="902.6" width="5.6" height="4.8" fill="#f7b66c" opacity="0.85"/><rect x="1333.8" y="901.8" width="6.8" height="6.4" fill="#f8b55e" stroke="#000" stroke-width="1.9"/><rect x="1346.7" y="901.8" width="6.8" height="6.4" fill="#f8b55e" stroke="#000" stroke-width="1.9"/><rect x="1359.6" y="901.8" width="6.8" height="6.4" fill="#f8b55e" stroke="#000" stroke-width="1.9"/><rect x="1372.5" y="901.8" width="6.8" height="6.4" fill="#f8b55e" stroke="#000" stroke-width="1.9"/><rect x="1385.4" y="901.8" width="6.8" height="6.4" fill="#f8b55e" stroke="#000" stroke-width="1.9"/><rect x="1398.9" y="902.6" width="5.6" height="4.8" fill="#f7b66c" opacity="0.85"/><rect x="1411.2" y="901.8" width="6.8" height="6.4" fill="#f8b55e" stroke="#000" stroke-width="1.9"/><rect x="1424.1" y="901.8" width="6.8" height="6.4" fill="#f8b55e" stroke="#000" stroke-width="1.9"/><rect x="1437.6" y="902.6" width="5.6" height="4.8" fill="#f7b66c" opacity="0.85"/><rect x="1463.4" y="902.6" width="5.6" height="4.8" fill="#f7b66c" opacity="0.85"/><rect x="1476.3" y="902.6" width="5.6" height="4.8" fill="#f7b66c" opacity="0.85"/><rect x="1489.2" y="902.6" width="5.6" height="4.8" fill="#f7b66c" opacity="0.85"/><rect x="1502.1" y="902.6" width="5.6" height="4.8" fill="#f7b66c" opacity="0.85"/><rect x="1514.4" y="901.8" width="6.8" height="6.4" fill="#f8b55e" stroke="#000" stroke-width="1.9"/><rect x="1527.4" y="901.9" width="6.6" height="6.2" fill="#f8b55e"/><rect x="1540.3" y="901.9" width="6.6" height="6.2" fill="#f8b55e"/><rect x="1553.2" y="901.9" width="6.6" height="6.2" fill="#f8b55e"/><rect x="1566" y="901.8" width="6.8" height="6.4" fill="#f8b55e" stroke="#000" stroke-width="1.9"/><rect x="1578.9" y="901.8" width="6.8" height="6.4" fill="#f8b55e" stroke="#000" stroke-width="1.9"/><rect x="1591.8" y="901.8" width="6.8" height="6.4" fill="#f8b55e" stroke="#000" stroke-width="1.9"/><rect x="1604.7" y="901.8" width="6.8" height="6.4" fill="#f8b55e" stroke="#000" stroke-width="1.9"/><rect x="1295.2" y="914.8" width="6.6" height="6.2" fill="#f8b55e"/><rect x="1308.1" y="914.8" width="6.6" height="6.2" fill="#f8b55e"/><rect x="1333.8" y="914.7" width="6.8" height="6.4" fill="#f8b55e" stroke="#000" stroke-width="1.9"/><rect x="1346.7" y="914.7" width="6.8" height="6.4" fill="#f8b55e" stroke="#000" stroke-width="1.9"/><rect x="1359.6" y="914.7" width="6.8" height="6.4" fill="#f8b55e" stroke="#000" stroke-width="1.9"/><rect x="1372.5" y="914.7" width="6.8" height="6.4" fill="#f8b55e" stroke="#000" stroke-width="1.9"/><rect x="1385.4" y="914.7" width="6.8" height="6.4" fill="#f8b55e" stroke="#000" stroke-width="1.9"/><rect x="1398.9" y="915.5" width="5.6" height="4.8" fill="#f7b66c" opacity="0.85"/><rect x="1424.1" y="914.7" width="6.8" height="6.4" fill="#f8b55e" stroke="#000" stroke-width="1.9"/><rect x="1437.6" y="915.5" width="5.6" height="4.8" fill="#f7b66c" opacity="0.85"/><rect x="1463.4" y="915.5" width="5.6" height="4.8" fill="#f7b66c" opacity="0.85"/><rect x="1476.3" y="915.5" width="5.6" height="4.8" fill="#f7b66c" opacity="0.85"/><rect x="1489.2" y="915.5" width="5.6" height="4.8" fill="#f7b66c" opacity="0.85"/><rect x="1502.1" y="915.5" width="5.6" height="4.8" fill="#f7b66c" opacity="0.85"/><rect x="1514.4" y="914.7" width="6.8" height="6.4" fill="#f8b55e" stroke="#000" stroke-width="1.9"/><rect x="1527.3" y="914.7" width="6.8" height="6.4" fill="#f8b55e" stroke="#000" stroke-width="1.9"/><rect x="1540.3" y="914.8" width="6.6" height="6.2" fill="#f8b55e"/><rect x="1553.2" y="914.8" width="6.6" height="6.2" fill="#f8b55e"/><rect x="1566" y="914.7" width="6.8" height="6.4" fill="#f8b55e" stroke="#000" stroke-width="1.9"/><rect x="1578.9" y="914.7" width="6.8" height="6.4" fill="#f8b55e" stroke="#000" stroke-width="1.9"/><rect x="1591.9" y="914.8" width="6.6" height="6.2" fill="#f8b55e"/><rect x="1604.8" y="914.8" width="6.6" height="6.2" fill="#f8b55e"/><rect x="1295.2" y="927.7" width="6.6" height="6.2" fill="#f8b55e"/><rect x="1308.1" y="927.7" width="6.6" height="6.2" fill="#f8b55e"/><rect x="1320.9" y="927.6" width="6.8" height="6.4" fill="#f8b55e" stroke="#000" stroke-width="1.9"/><rect x="1346.7" y="927.6" width="6.8" height="6.4" fill="#f8b55e" stroke="#000" stroke-width="1.9"/><rect x="1359.6" y="927.6" width="6.8" height="6.4" fill="#f8b55e" stroke="#000" stroke-width="1.9"/><rect x="1372.5" y="927.6" width="6.8" height="6.4" fill="#f8b55e" stroke="#000" stroke-width="1.9"/><rect x="1385.4" y="927.6" width="6.8" height="6.4" fill="#f8b55e" stroke="#000" stroke-width="1.9"/><rect x="1398.9" y="928.4" width="5.6" height="4.8" fill="#f7b66c" opacity="0.85"/><rect x="1424.1" y="927.6" width="6.8" height="6.4" fill="#f8b55e" stroke="#000" stroke-width="1.9"/><rect x="1437.6" y="928.4" width="5.6" height="4.8" fill="#f7b66c" opacity="0.85"/><rect x="1463.4" y="928.4" width="5.6" height="4.8" fill="#f7b66c" opacity="0.85"/><rect x="1475.7" y="927.6" width="6.8" height="6.4" fill="#f8b55e" stroke="#000" stroke-width="1.9"/><rect x="1489.2" y="928.4" width="5.6" height="4.8" fill="#f7b66c" opacity="0.85"/><rect x="1502.1" y="928.4" width="5.6" height="4.8" fill="#f7b66c" opacity="0.85"/><rect x="1515" y="928.4" width="5.6" height="4.8" fill="#f7b66c" opacity="0.85"/><rect x="1527.3" y="927.6" width="6.8" height="6.4" fill="#f8b55e" stroke="#000" stroke-width="1.9"/><rect x="1540.3" y="927.7" width="6.6" height="6.2" fill="#f8b55e"/><rect x="1553.2" y="927.7" width="6.6" height="6.2" fill="#f8b55e"/><rect x="1566" y="927.6" width="6.8" height="6.4" fill="#f8b55e" stroke="#000" stroke-width="1.9"/><rect x="1578.9" y="927.6" width="6.8" height="6.4" fill="#f8b55e" stroke="#000" stroke-width="1.9"/><rect x="1591.9" y="927.7" width="6.6" height="6.2" fill="#f8b55e"/><rect x="1604.8" y="927.7" width="6.6" height="6.2" fill="#f8b55e"/><rect x="1295.2" y="940.6" width="6.6" height="6.2" fill="#f8b55e"/><rect x="1308.1" y="940.6" width="6.6" height="6.2" fill="#f8b55e"/><rect x="1321" y="940.6" width="6.6" height="6.2" fill="#f8b55e"/><rect x="1333.9" y="940.6" width="6.6" height="6.2" fill="#f8b55e"/><rect x="1359.6" y="940.5" width="6.8" height="6.4" fill="#f8b55e" stroke="#000" stroke-width="1.9"/><rect x="1372.5" y="940.5" width="6.8" height="6.4" fill="#f8b55e" stroke="#000" stroke-width="1.9"/><rect x="1385.4" y="940.5" width="6.8" height="6.4" fill="#f8b55e" stroke="#000" stroke-width="1.9"/><rect x="1398.9" y="941.3" width="5.6" height="4.8" fill="#f7b66c" opacity="0.85"/><rect x="1424.1" y="940.5" width="6.8" height="6.4" fill="#f8b55e" stroke="#000" stroke-width="1.9"/><rect x="1437" y="940.5" width="6.8" height="6.4" fill="#f8b55e" stroke="#000" stroke-width="1.9"/><rect x="1462.8" y="940.5" width="6.8" height="6.4" fill="#f8b55e" stroke="#000" stroke-width="1.9"/><rect x="1475.7" y="940.5" width="6.8" height="6.4" fill="#f8b55e" stroke="#000" stroke-width="1.9"/><rect x="1501.5" y="940.5" width="6.8" height="6.4" fill="#f8b55e" stroke="#000" stroke-width="1.9"/><rect x="1514.4" y="940.5" width="6.8" height="6.4" fill="#f8b55e" stroke="#000" stroke-width="1.9"/><rect x="1527.3" y="940.5" width="6.8" height="6.4" fill="#f8b55e" stroke="#000" stroke-width="1.9"/><rect x="1540.2" y="940.5" width="6.8" height="6.4" fill="#f8b55e" stroke="#000" stroke-width="1.9"/><rect x="1566" y="940.5" width="6.8" height="6.4" fill="#f8b55e" stroke="#000" stroke-width="1.9"/><rect x="1579" y="940.6" width="6.6" height="6.2" fill="#f8b55e"/><rect x="1591.9" y="940.6" width="6.6" height="6.2" fill="#f8b55e"/><rect x="1604.8" y="940.6" width="6.6" height="6.2" fill="#f8b55e"/><rect x="1295.2" y="953.5" width="6.6" height="6.2" fill="#f8b55e"/><rect x="1308.1" y="953.5" width="6.6" height="6.2" fill="#f8b55e"/><rect x="1321" y="953.5" width="6.6" height="6.2" fill="#f8b55e"/><rect x="1333.9" y="953.5" width="6.6" height="6.2" fill="#f8b55e"/><rect x="1346.8" y="953.5" width="6.6" height="6.2" fill="#f8b55e"/><rect x="1373.1" y="954.2" width="5.6" height="4.8" fill="#f7b66c" opacity="0.85"/><rect x="1386" y="954.2" width="5.6" height="4.8" fill="#f7b66c" opacity="0.85"/><rect x="1398.9" y="954.2" width="5.6" height="4.8" fill="#f7b66c" opacity="0.85"/><rect x="1424.1" y="953.4" width="6.8" height="6.4" fill="#f8b55e" stroke="#000" stroke-width="1.9"/><rect x="1437" y="953.4" width="6.8" height="6.4" fill="#f8b55e" stroke="#000" stroke-width="1.9"/><rect x="1462.8" y="953.4" width="6.8" height="6.4" fill="#f8b55e" stroke="#000" stroke-width="1.9"/><rect x="1475.7" y="953.4" width="6.8" height="6.4" fill="#f8b55e" stroke="#000" stroke-width="1.9"/><rect x="1501.5" y="953.4" width="6.8" height="6.4" fill="#f8b55e" stroke="#000" stroke-width="1.9"/><rect x="1514.4" y="953.4" width="6.8" height="6.4" fill="#f8b55e" stroke="#000" stroke-width="1.9"/><rect x="1553.1" y="953.4" width="6.8" height="6.4" fill="#f8b55e" stroke="#000" stroke-width="1.9"/><rect x="1566" y="953.4" width="6.8" height="6.4" fill="#f8b55e" stroke="#000" stroke-width="1.9"/><rect x="1579" y="953.5" width="6.6" height="6.2" fill="#f8b55e"/><rect x="1591.9" y="953.5" width="6.6" height="6.2" fill="#f8b55e"/><rect x="1604.8" y="953.5" width="6.6" height="6.2" fill="#f8b55e"/><rect x="1295.2" y="966.4" width="6.6" height="6.2" fill="#f8b55e"/><rect x="1308.1" y="966.4" width="6.6" height="6.2" fill="#f8b55e"/><rect x="1321" y="966.4" width="6.6" height="6.2" fill="#f8b55e"/><rect x="1333.9" y="966.4" width="6.6" height="6.2" fill="#f8b55e"/><rect x="1346.8" y="966.4" width="6.6" height="6.2" fill="#f8b55e"/><rect x="1386" y="967.1" width="5.6" height="4.8" fill="#f7b66c" opacity="0.85"/><rect x="1398.9" y="967.1" width="5.6" height="4.8" fill="#f7b66c" opacity="0.85"/><rect x="1424.1" y="966.3" width="6.8" height="6.4" fill="#f8b55e" stroke="#000" stroke-width="1.9"/><rect x="1437" y="966.3" width="6.8" height="6.4" fill="#f8b55e" stroke="#000" stroke-width="1.9"/><rect x="1462.8" y="966.3" width="6.8" height="6.4" fill="#f8b55e" stroke="#000" stroke-width="1.9"/><rect x="1475.7" y="966.3" width="6.8" height="6.4" fill="#f8b55e" stroke="#000" stroke-width="1.9"/><rect x="1501.5" y="966.3" width="6.8" height="6.4" fill="#f8b55e" stroke="#000" stroke-width="1.9"/><rect x="1514.4" y="966.3" width="6.8" height="6.4" fill="#f8b55e" stroke="#000" stroke-width="1.9"/><rect x="1553.1" y="966.3" width="6.8" height="6.4" fill="#f8b55e" stroke="#000" stroke-width="1.9"/><rect x="1566" y="966.3" width="6.8" height="6.4" fill="#f8b55e" stroke="#000" stroke-width="1.9"/><rect x="1578.9" y="966.3" width="6.8" height="6.4" fill="#f8b55e" stroke="#000" stroke-width="1.9"/><rect x="1591.9" y="966.4" width="6.6" height="6.2" fill="#f8b55e"/><rect x="1604.8" y="966.4" width="6.6" height="6.2" fill="#f8b55e"/><rect x="1295.2" y="979.3" width="6.6" height="6.2" fill="#f8b55e"/><rect x="1308.1" y="979.3" width="6.6" height="6.2" fill="#f8b55e"/><rect x="1321" y="979.3" width="6.6" height="6.2" fill="#f8b55e"/><rect x="1333.9" y="979.3" width="6.6" height="6.2" fill="#f8b55e"/><rect x="1346.8" y="979.3" width="6.6" height="6.2" fill="#f8b55e"/><rect x="1359.6" y="979.2" width="6.8" height="6.4" fill="#f8b55e" stroke="#000" stroke-width="1.9"/><rect x="1373.1" y="980" width="5.6" height="4.8" fill="#f7b66c" opacity="0.85"/><rect x="1398.9" y="980" width="5.6" height="4.8" fill="#f7b66c" opacity="0.85"/><rect x="1424.1" y="979.2" width="6.8" height="6.4" fill="#f8b55e" stroke="#000" stroke-width="1.9"/><rect x="1437" y="979.2" width="6.8" height="6.4" fill="#f8b55e" stroke="#000" stroke-width="1.9"/><rect x="1463.4" y="980" width="5.6" height="4.8" fill="#f7b66c" opacity="0.85"/><rect x="1476.3" y="980" width="5.6" height="4.8" fill="#f7b66c" opacity="0.85"/><rect x="1502.1" y="980" width="5.6" height="4.8" fill="#f7b66c" opacity="0.85"/><rect x="1527.9" y="980" width="5.6" height="4.8" fill="#f7b66c" opacity="0.85"/><rect x="1540.8" y="980" width="5.6" height="4.8" fill="#f7b66c" opacity="0.85"/><rect x="1553.7" y="980" width="5.6" height="4.8" fill="#f7b66c" opacity="0.85"/><rect x="1566.6" y="980" width="5.6" height="4.8" fill="#f7b66c" opacity="0.85"/><rect x="1578.9" y="979.2" width="6.8" height="6.4" fill="#f8b55e" stroke="#000" stroke-width="1.9"/><rect x="1591.8" y="979.2" width="6.8" height="6.4" fill="#f8b55e" stroke="#000" stroke-width="1.9"/><rect x="1604.7" y="979.2" width="6.8" height="6.4" fill="#f8b55e" stroke="#000" stroke-width="1.9"/><rect x="1295.2" y="992.2" width="6.6" height="6.2" fill="#f8b55e"/><rect x="1308.1" y="992.2" width="6.6" height="6.2" fill="#f8b55e"/><rect x="1321" y="992.2" width="6.6" height="6.2" fill="#f8b55e"/><rect x="1333.9" y="992.2" width="6.6" height="6.2" fill="#f8b55e"/><rect x="1346.8" y="992.2" width="6.6" height="6.2" fill="#f8b55e"/><rect x="1359.6" y="992.1" width="6.8" height="6.4" fill="#f8b55e" stroke="#000" stroke-width="1.9"/><rect x="1373.1" y="992.9" width="5.6" height="4.8" fill="#f7b66c" opacity="0.85"/><rect x="1386" y="992.9" width="5.6" height="4.8" fill="#f7b66c" opacity="0.85"/><rect x="1411.8" y="992.9" width="5.6" height="4.8" fill="#f7b66c" opacity="0.85"/><rect x="1424.1" y="992.1" width="6.8" height="6.4" fill="#f8b55e" stroke="#000" stroke-width="1.9"/><rect x="1437" y="992.1" width="6.8" height="6.4" fill="#f8b55e" stroke="#000" stroke-width="1.9"/><rect x="1450.5" y="992.9" width="5.6" height="4.8" fill="#f7b66c" opacity="0.85"/><rect x="1462.8" y="992.1" width="6.8" height="6.4" fill="#f8b55e" stroke="#000" stroke-width="1.9"/><rect x="1476.3" y="992.9" width="5.6" height="4.8" fill="#f7b66c" opacity="0.85"/><rect x="1489.2" y="992.9" width="5.6" height="4.8" fill="#f7b66c" opacity="0.85"/><rect x="1515" y="992.9" width="5.6" height="4.8" fill="#f7b66c" opacity="0.85"/><rect x="1527.9" y="992.9" width="5.6" height="4.8" fill="#f7b66c" opacity="0.85"/><rect x="1540.8" y="992.9" width="5.6" height="4.8" fill="#f7b66c" opacity="0.85"/><rect x="1553.1" y="992.1" width="6.8" height="6.4" fill="#f8b55e" stroke="#000" stroke-width="1.9"/><rect x="1566" y="992.1" width="6.8" height="6.4" fill="#f8b55e" stroke="#000" stroke-width="1.9"/><rect x="1578.9" y="992.1" width="6.8" height="6.4" fill="#f8b55e" stroke="#000" stroke-width="1.9"/><rect x="1591.8" y="992.1" width="6.8" height="6.4" fill="#f8b55e" stroke="#000" stroke-width="1.9"/><rect x="1295.2" y="1005.1" width="6.6" height="6.2" fill="#f8b55e"/><rect x="1308.1" y="1005.1" width="6.6" height="6.2" fill="#f8b55e"/><rect x="1321" y="1005.1" width="6.6" height="6.2" fill="#f8b55e"/><rect x="1333.9" y="1005.1" width="6.6" height="6.2" fill="#f8b55e"/><rect x="1346.8" y="1005.1" width="6.6" height="6.2" fill="#f8b55e"/><rect x="1398.3" y="1005" width="6.8" height="6.4" fill="#f8b55e" stroke="#000" stroke-width="1.9"/><rect x="1411.2" y="1005" width="6.8" height="6.4" fill="#f8b55e" stroke="#000" stroke-width="1.9"/><rect x="1424.1" y="1005" width="6.8" height="6.4" fill="#f8b55e" stroke="#000" stroke-width="1.9"/><rect x="1437" y="1005" width="6.8" height="6.4" fill="#f8b55e" stroke="#000" stroke-width="1.9"/><rect x="1449.9" y="1005" width="6.8" height="6.4" fill="#f8b55e" stroke="#000" stroke-width="1.9"/><rect x="1462.8" y="1005" width="6.8" height="6.4" fill="#f8b55e" stroke="#000" stroke-width="1.9"/><rect x="1475.7" y="1005" width="6.8" height="6.4" fill="#f8b55e" stroke="#000" stroke-width="1.9"/><rect x="1502.1" y="1005.8" width="5.6" height="4.8" fill="#f7b66c" opacity="0.85"/><rect x="1578.9" y="1005" width="6.8" height="6.4" fill="#f8b55e" stroke="#000" stroke-width="1.9"/><rect x="1591.8" y="1005" width="6.8" height="6.4" fill="#f8b55e" stroke="#000" stroke-width="1.9"/><rect x="1295.2" y="1018" width="6.6" height="6.2" fill="#f8b55e"/><rect x="1308.1" y="1018" width="6.6" height="6.2" fill="#f8b55e"/><rect x="1321" y="1018" width="6.6" height="6.2" fill="#f8b55e"/><rect x="1333.9" y="1018" width="6.6" height="6.2" fill="#f8b55e"/><rect x="1346.8" y="1018" width="6.6" height="6.2" fill="#f8b55e"/><rect x="1360.2" y="1018.7" width="5.6" height="4.8" fill="#f7b66c" opacity="0.85"/><rect x="1373.1" y="1018.7" width="5.6" height="4.8" fill="#f7b66c" opacity="0.85"/><rect x="1386" y="1018.7" width="5.6" height="4.8" fill="#f7b66c" opacity="0.85"/><rect x="1398.3" y="1017.9" width="6.8" height="6.4" fill="#f8b55e" stroke="#000" stroke-width="1.9"/><rect x="1411.2" y="1017.9" width="6.8" height="6.4" fill="#f8b55e" stroke="#000" stroke-width="1.9"/><rect x="1424.1" y="1017.9" width="6.8" height="6.4" fill="#f8b55e" stroke="#000" stroke-width="1.9"/><rect x="1437" y="1017.9" width="6.8" height="6.4" fill="#f8b55e" stroke="#000" stroke-width="1.9"/><rect x="1449.9" y="1017.9" width="6.8" height="6.4" fill="#f8b55e" stroke="#000" stroke-width="1.9"/><rect x="1462.8" y="1017.9" width="6.8" height="6.4" fill="#f8b55e" stroke="#000" stroke-width="1.9"/><rect x="1475.7" y="1017.9" width="6.8" height="6.4" fill="#f8b55e" stroke="#000" stroke-width="1.9"/><rect x="1488.6" y="1017.9" width="6.8" height="6.4" fill="#f8b55e" stroke="#000" stroke-width="1.9"/><rect x="1501.5" y="1017.9" width="6.8" height="6.4" fill="#f8b55e" stroke="#000" stroke-width="1.9"/><rect x="1527.4" y="1018" width="6.6" height="6.2" fill="#f8b55e"/><rect x="1540.3" y="1018" width="6.6" height="6.2" fill="#f8b55e"/><rect x="1553.1" y="1017.9" width="6.8" height="6.4" fill="#f8b55e" stroke="#000" stroke-width="1.9"/><rect x="1566.6" y="1018.7" width="5.6" height="4.8" fill="#f7b66c" opacity="0.85"/><rect x="1579.5" y="1018.7" width="5.6" height="4.8" fill="#f7b66c" opacity="0.85"/><rect x="1592.4" y="1018.7" width="5.6" height="4.8" fill="#f7b66c" opacity="0.85"/><rect x="1604.7" y="1017.9" width="6.8" height="6.4" fill="#f8b55e" stroke="#000" stroke-width="1.9"/><rect x="1295.2" y="1030.9" width="6.6" height="6.2" fill="#f8b55e"/><rect x="1308.1" y="1030.9" width="6.6" height="6.2" fill="#f8b55e"/><rect x="1321" y="1030.9" width="6.6" height="6.2" fill="#f8b55e"/><rect x="1333.9" y="1030.9" width="6.6" height="6.2" fill="#f8b55e"/><rect x="1346.8" y="1030.9" width="6.6" height="6.2" fill="#f8b55e"/><rect x="1360.2" y="1031.6" width="5.6" height="4.8" fill="#f7b66c" opacity="0.85"/><rect x="1373.1" y="1031.6" width="5.6" height="4.8" fill="#f7b66c" opacity="0.85"/><rect x="1386" y="1031.6" width="5.6" height="4.8" fill="#f7b66c" opacity="0.85"/><rect x="1398.3" y="1030.8" width="6.8" height="6.4" fill="#f8b55e" stroke="#000" stroke-width="1.9"/><rect x="1411.2" y="1030.8" width="6.8" height="6.4" fill="#f8b55e" stroke="#000" stroke-width="1.9"/><rect x="1424.1" y="1030.8" width="6.8" height="6.4" fill="#f8b55e" stroke="#000" stroke-width="1.9"/><rect x="1437" y="1030.8" width="6.8" height="6.4" fill="#f8b55e" stroke="#000" stroke-width="1.9"/><rect x="1449.9" y="1030.8" width="6.8" height="6.4" fill="#f8b55e" stroke="#000" stroke-width="1.9"/><rect x="1462.8" y="1030.8" width="6.8" height="6.4" fill="#f8b55e" stroke="#000" stroke-width="1.9"/><rect x="1475.7" y="1030.8" width="6.8" height="6.4" fill="#f8b55e" stroke="#000" stroke-width="1.9"/><rect x="1489.2" y="1031.6" width="5.6" height="4.8" fill="#f7b66c" opacity="0.85"/><rect x="1502.1" y="1031.6" width="5.6" height="4.8" fill="#f7b66c" opacity="0.85"/><rect x="1515" y="1031.6" width="5.6" height="4.8" fill="#f7b66c" opacity="0.85"/><rect x="1527.3" y="1030.8" width="6.8" height="6.4" fill="#f8b55e" stroke="#000" stroke-width="1.9"/><rect x="1540.3" y="1030.9" width="6.6" height="6.2" fill="#f8b55e"/><rect x="1553.1" y="1030.8" width="6.8" height="6.4" fill="#f8b55e" stroke="#000" stroke-width="1.9"/><rect x="1566" y="1030.8" width="6.8" height="6.4" fill="#f8b55e" stroke="#000" stroke-width="1.9"/><rect x="1578.9" y="1030.8" width="6.8" height="6.4" fill="#f8b55e" stroke="#000" stroke-width="1.9"/><rect x="1591.8" y="1030.8" width="6.8" height="6.4" fill="#f8b55e" stroke="#000" stroke-width="1.9"/><rect x="1604.7" y="1030.8" width="6.8" height="6.4" fill="#f8b55e" stroke="#000" stroke-width="1.9"/><rect x="1295.2" y="1043.8" width="6.6" height="6.2" fill="#f8b55e"/><rect x="1308.1" y="1043.8" width="6.6" height="6.2" fill="#f8b55e"/><rect x="1321" y="1043.8" width="6.6" height="6.2" fill="#f8b55e"/><rect x="1333.8" y="1043.7" width="6.8" height="6.4" fill="#f8b55e" stroke="#000" stroke-width="1.9"/><rect x="1360.2" y="1044.5" width="5.6" height="4.8" fill="#f7b66c" opacity="0.85"/><rect x="1373.1" y="1044.5" width="5.6" height="4.8" fill="#f7b66c" opacity="0.85"/><rect x="1386" y="1044.5" width="5.6" height="4.8" fill="#f7b66c" opacity="0.85"/><rect x="1398.3" y="1043.7" width="6.8" height="6.4" fill="#f8b55e" stroke="#000" stroke-width="1.9"/><rect x="1411.2" y="1043.7" width="6.8" height="6.4" fill="#f8b55e" stroke="#000" stroke-width="1.9"/><rect x="1424.1" y="1043.7" width="6.8" height="6.4" fill="#f8b55e" stroke="#000" stroke-width="1.9"/><rect x="1437" y="1043.7" width="6.8" height="6.4" fill="#f8b55e" stroke="#000" stroke-width="1.9"/><rect x="1449.9" y="1043.7" width="6.8" height="6.4" fill="#f8b55e" stroke="#000" stroke-width="1.9"/><rect x="1462.8" y="1043.7" width="6.8" height="6.4" fill="#f8b55e" stroke="#000" stroke-width="1.9"/><rect x="1475.7" y="1043.7" width="6.8" height="6.4" fill="#f8b55e" stroke="#000" stroke-width="1.9"/><rect x="1488.6" y="1043.7" width="6.8" height="6.4" fill="#f8b55e" stroke="#000" stroke-width="1.9"/><rect x="1502.1" y="1044.5" width="5.6" height="4.8" fill="#f7b66c" opacity="0.85"/><rect x="1515" y="1044.5" width="5.6" height="4.8" fill="#f7b66c" opacity="0.85"/><rect x="1540.2" y="1043.7" width="6.8" height="6.4" fill="#f8b55e" stroke="#000" stroke-width="1.9"/><rect x="1553.1" y="1043.7" width="6.8" height="6.4" fill="#f8b55e" stroke="#000" stroke-width="1.9"/><rect x="1566.1" y="1043.8" width="6.6" height="6.2" fill="#f8b55e"/><rect x="1578.9" y="1043.7" width="6.8" height="6.4" fill="#f8b55e" stroke="#000" stroke-width="1.9"/><rect x="1591.9" y="1043.8" width="6.6" height="6.2" fill="#f8b55e"/><rect x="1604.8" y="1043.8" width="6.6" height="6.2" fill="#f8b55e"/><rect x="1295.1" y="1056.6" width="6.8" height="6.4" fill="#f8b55e" stroke="#000" stroke-width="1.9"/><rect x="1308" y="1056.6" width="6.8" height="6.4" fill="#f8b55e" stroke="#000" stroke-width="1.9"/><rect x="1320.9" y="1056.6" width="6.8" height="6.4" fill="#f8b55e" stroke="#000" stroke-width="1.9"/><rect x="1333.8" y="1056.6" width="6.8" height="6.4" fill="#f8b55e" stroke="#000" stroke-width="1.9"/><rect x="1347.3" y="1057.4" width="5.6" height="4.8" fill="#f7b66c" opacity="0.85"/><rect x="1360.2" y="1057.4" width="5.6" height="4.8" fill="#f7b66c" opacity="0.85"/><rect x="1373.1" y="1057.4" width="5.6" height="4.8" fill="#f7b66c" opacity="0.85"/><rect x="1386" y="1057.4" width="5.6" height="4.8" fill="#f7b66c" opacity="0.85"/><rect x="1398.3" y="1056.6" width="6.8" height="6.4" fill="#f8b55e" stroke="#000" stroke-width="1.9"/><rect x="1411.2" y="1056.6" width="6.8" height="6.4" fill="#f8b55e" stroke="#000" stroke-width="1.9"/><rect x="1424.1" y="1056.6" width="6.8" height="6.4" fill="#f8b55e" stroke="#000" stroke-width="1.9"/><rect x="1437" y="1056.6" width="6.8" height="6.4" fill="#f8b55e" stroke="#000" stroke-width="1.9"/><rect x="1449.9" y="1056.6" width="6.8" height="6.4" fill="#f8b55e" stroke="#000" stroke-width="1.9"/><rect x="1462.8" y="1056.6" width="6.8" height="6.4" fill="#f8b55e" stroke="#000" stroke-width="1.9"/><rect x="1475.7" y="1056.6" width="6.8" height="6.4" fill="#f8b55e" stroke="#000" stroke-width="1.9"/><rect x="1488.6" y="1056.6" width="6.8" height="6.4" fill="#f8b55e" stroke="#000" stroke-width="1.9"/><rect x="1502.1" y="1057.4" width="5.6" height="4.8" fill="#f7b66c" opacity="0.85"/><rect x="1515" y="1057.4" width="5.6" height="4.8" fill="#f7b66c" opacity="0.85"/><rect x="1527.3" y="1056.6" width="6.8" height="6.4" fill="#f8b55e" stroke="#000" stroke-width="1.9"/><rect x="1540.3" y="1056.7" width="6.6" height="6.2" fill="#f8b55e"/><rect x="1553.2" y="1056.7" width="6.6" height="6.2" fill="#f8b55e"/><rect x="1566.1" y="1056.7" width="6.6" height="6.2" fill="#f8b55e"/><rect x="1579" y="1056.7" width="6.6" height="6.2" fill="#f8b55e"/><rect x="1591.9" y="1056.7" width="6.6" height="6.2" fill="#f8b55e"/><rect x="1604.8" y="1056.7" width="6.6" height="6.2" fill="#f8b55e"/><rect x="1295.1" y="1069.5" width="6.8" height="6.4" fill="#f8b55e" stroke="#000" stroke-width="1.9"/><rect x="1308" y="1069.5" width="6.8" height="6.4" fill="#f8b55e" stroke="#000" stroke-width="1.9"/><rect x="1320.9" y="1069.5" width="6.8" height="6.4" fill="#f8b55e" stroke="#000" stroke-width="1.9"/><rect x="1333.8" y="1069.5" width="6.8" height="6.4" fill="#f8b55e" stroke="#000" stroke-width="1.9"/><rect x="1347.3" y="1070.3" width="5.6" height="4.8" fill="#f7b66c" opacity="0.85"/><rect x="1360.2" y="1070.3" width="5.6" height="4.8" fill="#f7b66c" opacity="0.85"/><rect x="1373.1" y="1070.3" width="5.6" height="4.8" fill="#f7b66c" opacity="0.85"/><rect x="1386" y="1070.3" width="5.6" height="4.8" fill="#f7b66c" opacity="0.85"/><rect x="1398.3" y="1069.5" width="6.8" height="6.4" fill="#f8b55e" stroke="#000" stroke-width="1.9"/><rect x="1411.2" y="1069.5" width="6.8" height="6.4" fill="#f8b55e" stroke="#000" stroke-width="1.9"/><rect x="1424.1" y="1069.5" width="6.8" height="6.4" fill="#f8b55e" stroke="#000" stroke-width="1.9"/><rect x="1437" y="1069.5" width="6.8" height="6.4" fill="#f8b55e" stroke="#000" stroke-width="1.9"/><rect x="1462.8" y="1069.5" width="6.8" height="6.4" fill="#f8b55e" stroke="#000" stroke-width="1.9"/><rect x="1475.7" y="1069.5" width="6.8" height="6.4" fill="#f8b55e" stroke="#000" stroke-width="1.9"/><rect x="1488.6" y="1069.5" width="6.8" height="6.4" fill="#f8b55e" stroke="#000" stroke-width="1.9"/><rect x="1502.1" y="1070.3" width="5.6" height="4.8" fill="#f7b66c" opacity="0.85"/><rect x="1514.4" y="1069.5" width="6.8" height="6.4" fill="#f8b55e" stroke="#000" stroke-width="1.9"/><rect x="1527.3" y="1069.5" width="6.8" height="6.4" fill="#f8b55e" stroke="#000" stroke-width="1.9"/><rect x="1540.3" y="1069.6" width="6.6" height="6.2" fill="#f8b55e"/><rect x="1553.2" y="1069.6" width="6.6" height="6.2" fill="#f8b55e"/><rect x="1566.1" y="1069.6" width="6.6" height="6.2" fill="#f8b55e"/><rect x="1579" y="1069.6" width="6.6" height="6.2" fill="#f8b55e"/><rect x="1591.9" y="1069.6" width="6.6" height="6.2" fill="#f8b55e"/><rect x="1604.8" y="1069.6" width="6.6" height="6.2" fill="#f8b55e"/><rect x="1295.1" y="1082.4" width="6.8" height="6.4" fill="#f8b55e" stroke="#000" stroke-width="1.9"/><rect x="1308" y="1082.4" width="6.8" height="6.4" fill="#f8b55e" stroke="#000" stroke-width="1.9"/><rect x="1398.3" y="1082.4" width="6.8" height="6.4" fill="#f8b55e" stroke="#000" stroke-width="1.9"/><rect x="1411.2" y="1082.4" width="6.8" height="6.4" fill="#f8b55e" stroke="#000" stroke-width="1.9"/><rect x="1424.1" y="1082.4" width="6.8" height="6.4" fill="#f8b55e" stroke="#000" stroke-width="1.9"/><rect x="1437" y="1082.4" width="6.8" height="6.4" fill="#f8b55e" stroke="#000" stroke-width="1.9"/><rect x="1449.9" y="1082.4" width="6.8" height="6.4" fill="#f8b55e" stroke="#000" stroke-width="1.9"/><rect x="1462.8" y="1082.4" width="6.8" height="6.4" fill="#f8b55e" stroke="#000" stroke-width="1.9"/><rect x="1475.7" y="1082.4" width="6.8" height="6.4" fill="#f8b55e" stroke="#000" stroke-width="1.9"/><rect x="1488.6" y="1082.4" width="6.8" height="6.4" fill="#f8b55e" stroke="#000" stroke-width="1.9"/><rect x="1502.1" y="1083.2" width="5.6" height="4.8" fill="#f7b66c" opacity="0.85"/><rect x="1579" y="1082.5" width="6.6" height="6.2" fill="#f8b55e"/><rect x="1591.9" y="1082.5" width="6.6" height="6.2" fill="#f8b55e"/><rect x="1604.8" y="1082.5" width="6.6" height="6.2" fill="#f8b55e"/><rect x="1295.2" y="1095.4" width="6.6" height="6.2" fill="#f8b55e"/><rect x="1308.1" y="1095.4" width="6.6" height="6.2" fill="#f8b55e"/><rect x="1321" y="1095.4" width="6.6" height="6.2" fill="#f8b55e"/><rect x="1333.9" y="1095.4" width="6.6" height="6.2" fill="#f8b55e"/><rect x="1346.8" y="1095.4" width="6.6" height="6.2" fill="#f8b55e"/><rect x="1360.2" y="1096.1" width="5.6" height="4.8" fill="#f7b66c" opacity="0.85"/><rect x="1373.1" y="1096.1" width="5.6" height="4.8" fill="#f7b66c" opacity="0.85"/><rect x="1386" y="1096.1" width="5.6" height="4.8" fill="#f7b66c" opacity="0.85"/><rect x="1398.3" y="1095.3" width="6.8" height="6.4" fill="#f8b55e" stroke="#000" stroke-width="1.9"/><rect x="1411.2" y="1095.3" width="6.8" height="6.4" fill="#f8b55e" stroke="#000" stroke-width="1.9"/><rect x="1424.2" y="1095.4" width="6.6" height="6.2" fill="#f8b55e"/><rect x="1437" y="1095.3" width="6.8" height="6.4" fill="#f8b55e" stroke="#000" stroke-width="1.9"/><rect x="1449.9" y="1095.3" width="6.8" height="6.4" fill="#f8b55e" stroke="#000" stroke-width="1.9"/><rect x="1462.8" y="1095.3" width="6.8" height="6.4" fill="#f8b55e" stroke="#000" stroke-width="1.9"/><rect x="1475.7" y="1095.3" width="6.8" height="6.4" fill="#f8b55e" stroke="#000" stroke-width="1.9"/><rect x="1489.2" y="1096.1" width="5.6" height="4.8" fill="#f7b66c" opacity="0.85"/><rect x="1502.1" y="1096.1" width="5.6" height="4.8" fill="#f7b66c" opacity="0.85"/><rect x="1514.4" y="1095.3" width="6.8" height="6.4" fill="#f8b55e" stroke="#000" stroke-width="1.9"/><rect x="1527.3" y="1095.3" width="6.8" height="6.4" fill="#f8b55e" stroke="#000" stroke-width="1.9"/><rect x="1540.8" y="1096.1" width="5.6" height="4.8" fill="#f7b66c" opacity="0.85"/><rect x="1553.2" y="1095.4" width="6.6" height="6.2" fill="#f8b55e"/><rect x="1566.1" y="1095.4" width="6.6" height="6.2" fill="#f8b55e"/><rect x="1579" y="1095.4" width="6.6" height="6.2" fill="#f8b55e"/><rect x="1591.9" y="1095.4" width="6.6" height="6.2" fill="#f8b55e"/><rect x="1604.8" y="1095.4" width="6.6" height="6.2" fill="#f8b55e"/><rect x="1295.2" y="1108.3" width="6.6" height="6.2" fill="#f8b55e"/><rect x="1308.1" y="1108.3" width="6.6" height="6.2" fill="#f8b55e"/><rect x="1321" y="1108.3" width="6.6" height="6.2" fill="#f8b55e"/><rect x="1333.9" y="1108.3" width="6.6" height="6.2" fill="#f8b55e"/><rect x="1346.8" y="1108.3" width="6.6" height="6.2" fill="#f8b55e"/><rect x="1359.6" y="1108.2" width="6.8" height="6.4" fill="#f8b55e" stroke="#000" stroke-width="1.9"/><rect x="1372.5" y="1108.2" width="6.8" height="6.4" fill="#f8b55e" stroke="#000" stroke-width="1.9"/><rect x="1398.3" y="1108.2" width="6.8" height="6.4" fill="#f8b55e" stroke="#000" stroke-width="1.9"/><rect x="1424.2" y="1108.3" width="6.6" height="6.2" fill="#f8b55e"/><rect x="1437" y="1108.2" width="6.8" height="6.4" fill="#f8b55e" stroke="#000" stroke-width="1.9"/><rect x="1462.8" y="1108.2" width="6.8" height="6.4" fill="#f8b55e" stroke="#000" stroke-width="1.9"/><rect x="1475.7" y="1108.2" width="6.8" height="6.4" fill="#f8b55e" stroke="#000" stroke-width="1.9"/><rect x="1501.5" y="1108.2" width="6.8" height="6.4" fill="#f8b55e" stroke="#000" stroke-width="1.9"/><rect x="1514.4" y="1108.2" width="6.8" height="6.4" fill="#f8b55e" stroke="#000" stroke-width="1.9"/><rect x="1527.3" y="1108.2" width="6.8" height="6.4" fill="#f8b55e" stroke="#000" stroke-width="1.9"/><rect x="1553.2" y="1108.3" width="6.6" height="6.2" fill="#f8b55e"/><rect x="1566.1" y="1108.3" width="6.6" height="6.2" fill="#f8b55e"/><rect x="1579" y="1108.3" width="6.6" height="6.2" fill="#f8b55e"/><rect x="1591.9" y="1108.3" width="6.6" height="6.2" fill="#f8b55e"/><rect x="1604.8" y="1108.3" width="6.6" height="6.2" fill="#f8b55e"/><rect x="1295.2" y="1121.2" width="6.6" height="6.2" fill="#f8b55e"/><rect x="1308.1" y="1121.2" width="6.6" height="6.2" fill="#f8b55e"/><rect x="1321" y="1121.2" width="6.6" height="6.2" fill="#f8b55e"/><rect x="1333.9" y="1121.2" width="6.6" height="6.2" fill="#f8b55e"/><rect x="1346.8" y="1121.2" width="6.6" height="6.2" fill="#f8b55e"/><rect x="1359.7" y="1121.2" width="6.6" height="6.2" fill="#f8b55e"/><rect x="1372.5" y="1121.1" width="6.8" height="6.4" fill="#f8b55e" stroke="#000" stroke-width="1.9"/><rect x="1385.4" y="1121.1" width="6.8" height="6.4" fill="#f8b55e" stroke="#000" stroke-width="1.9"/><rect x="1398.9" y="1121.9" width="5.6" height="4.8" fill="#f7b66c" opacity="0.85"/><rect x="1424.1" y="1121.1" width="6.8" height="6.4" fill="#f8b55e" stroke="#000" stroke-width="1.9"/><rect x="1437" y="1121.1" width="6.8" height="6.4" fill="#f8b55e" stroke="#000" stroke-width="1.9"/><rect x="1462.8" y="1121.1" width="6.8" height="6.4" fill="#f8b55e" stroke="#000" stroke-width="1.9"/><rect x="1476.3" y="1121.9" width="5.6" height="4.8" fill="#f7b66c" opacity="0.85"/><rect x="1489.2" y="1121.9" width="5.6" height="4.8" fill="#f7b66c" opacity="0.85"/><rect x="1502.1" y="1121.9" width="5.6" height="4.8" fill="#f7b66c" opacity="0.85"/><rect x="1515" y="1121.9" width="5.6" height="4.8" fill="#f7b66c" opacity="0.85"/><rect x="1553.2" y="1121.2" width="6.6" height="6.2" fill="#f8b55e"/><rect x="1566.1" y="1121.2" width="6.6" height="6.2" fill="#f8b55e"/><rect x="1579" y="1121.2" width="6.6" height="6.2" fill="#f8b55e"/><rect x="1591.9" y="1121.2" width="6.6" height="6.2" fill="#f8b55e"/><rect x="1604.8" y="1121.2" width="6.6" height="6.2" fill="#f8b55e"/><rect x="1295.2" y="1134.1" width="6.6" height="6.2" fill="#f8b55e"/><rect x="1308.1" y="1134.1" width="6.6" height="6.2" fill="#f8b55e"/><rect x="1321" y="1134.1" width="6.6" height="6.2" fill="#f8b55e"/><rect x="1333.9" y="1134.1" width="6.6" height="6.2" fill="#f8b55e"/><rect x="1346.8" y="1134.1" width="6.6" height="6.2" fill="#f8b55e"/><rect x="1359.7" y="1134.1" width="6.6" height="6.2" fill="#f8b55e"/><rect x="1372.5" y="1134" width="6.8" height="6.4" fill="#f8b55e" stroke="#000" stroke-width="1.9"/><rect x="1385.4" y="1134" width="6.8" height="6.4" fill="#f8b55e" stroke="#000" stroke-width="1.9"/><rect x="1398.9" y="1134.8" width="5.6" height="4.8" fill="#f7b66c" opacity="0.85"/><rect x="1424.1" y="1134" width="6.8" height="6.4" fill="#f8b55e" stroke="#000" stroke-width="1.9"/><rect x="1437" y="1134" width="6.8" height="6.4" fill="#f8b55e" stroke="#000" stroke-width="1.9"/><rect x="1463.4" y="1134.8" width="5.6" height="4.8" fill="#f7b66c" opacity="0.85"/><rect x="1476.3" y="1134.8" width="5.6" height="4.8" fill="#f7b66c" opacity="0.85"/><rect x="1489.2" y="1134.8" width="5.6" height="4.8" fill="#f7b66c" opacity="0.85"/><rect x="1502.1" y="1134.8" width="5.6" height="4.8" fill="#f7b66c" opacity="0.85"/><rect x="1515" y="1134.8" width="5.6" height="4.8" fill="#f7b66c" opacity="0.85"/><rect x="1553.1" y="1134" width="6.8" height="6.4" fill="#f8b55e" stroke="#000" stroke-width="1.9"/><rect x="1566.1" y="1134.1" width="6.6" height="6.2" fill="#f8b55e"/><rect x="1579" y="1134.1" width="6.6" height="6.2" fill="#f8b55e"/><rect x="1591.9" y="1134.1" width="6.6" height="6.2" fill="#f8b55e"/><rect x="1604.8" y="1134.1" width="6.6" height="6.2" fill="#f8b55e"/><rect x="1295.2" y="1147" width="6.6" height="6.2" fill="#f8b55e"/><rect x="1308.1" y="1147" width="6.6" height="6.2" fill="#f8b55e"/><rect x="1321" y="1147" width="6.6" height="6.2" fill="#f8b55e"/><rect x="1333.9" y="1147" width="6.6" height="6.2" fill="#f8b55e"/><rect x="1346.8" y="1147" width="6.6" height="6.2" fill="#f8b55e"/><rect x="1359.7" y="1147" width="6.6" height="6.2" fill="#f8b55e"/><rect x="1372.5" y="1146.9" width="6.8" height="6.4" fill="#f8b55e" stroke="#000" stroke-width="1.9"/><rect x="1385.4" y="1146.9" width="6.8" height="6.4" fill="#f8b55e" stroke="#000" stroke-width="1.9"/><rect x="1398.9" y="1147.7" width="5.6" height="4.8" fill="#f7b66c" opacity="0.85"/><rect x="1424.1" y="1146.9" width="6.8" height="6.4" fill="#f8b55e" stroke="#000" stroke-width="1.9"/><rect x="1437" y="1146.9" width="6.8" height="6.4" fill="#f8b55e" stroke="#000" stroke-width="1.9"/><rect x="1463.4" y="1147.7" width="5.6" height="4.8" fill="#f7b66c" opacity="0.85"/><rect x="1476.3" y="1147.7" width="5.6" height="4.8" fill="#f7b66c" opacity="0.85"/><rect x="1489.2" y="1147.7" width="5.6" height="4.8" fill="#f7b66c" opacity="0.85"/><rect x="1502.1" y="1147.7" width="5.6" height="4.8" fill="#f7b66c" opacity="0.85"/><rect x="1515" y="1147.7" width="5.6" height="4.8" fill="#f7b66c" opacity="0.85"/><rect x="1527.9" y="1147.7" width="5.6" height="4.8" fill="#f7b66c" opacity="0.85"/><rect x="1540.8" y="1147.7" width="5.6" height="4.8" fill="#f7b66c" opacity="0.85"/><rect x="1566" y="1146.9" width="6.8" height="6.4" fill="#f8b55e" stroke="#000" stroke-width="1.9"/><rect x="1578.9" y="1146.9" width="6.8" height="6.4" fill="#f8b55e" stroke="#000" stroke-width="1.9"/><rect x="1591.8" y="1146.9" width="6.8" height="6.4" fill="#f8b55e" stroke="#000" stroke-width="1.9"/><rect x="1604.7" y="1146.9" width="6.8" height="6.4" fill="#f8b55e" stroke="#000" stroke-width="1.9"/><rect x="1295.2" y="1159.9" width="6.6" height="6.2" fill="#f8b55e"/><rect x="1308.1" y="1159.9" width="6.6" height="6.2" fill="#f8b55e"/><rect x="1321" y="1159.9" width="6.6" height="6.2" fill="#f8b55e"/><rect x="1333.9" y="1159.9" width="6.6" height="6.2" fill="#f8b55e"/><rect x="1346.8" y="1159.9" width="6.6" height="6.2" fill="#f8b55e"/><rect x="1359.7" y="1159.9" width="6.6" height="6.2" fill="#f8b55e"/><rect x="1372.5" y="1159.8" width="6.8" height="6.4" fill="#f8b55e" stroke="#000" stroke-width="1.9"/><rect x="1385.4" y="1159.8" width="6.8" height="6.4" fill="#f8b55e" stroke="#000" stroke-width="1.9"/><rect x="1398.9" y="1160.6" width="5.6" height="4.8" fill="#f7b66c" opacity="0.85"/><rect x="1411.8" y="1160.6" width="5.6" height="4.8" fill="#f7b66c" opacity="0.85"/><rect x="1424.7" y="1160.6" width="5.6" height="4.8" fill="#f7b66c" opacity="0.85"/><rect x="1437.6" y="1160.6" width="5.6" height="4.8" fill="#f7b66c" opacity="0.85"/><rect x="1463.4" y="1160.6" width="5.6" height="4.8" fill="#f7b66c" opacity="0.85"/><rect x="1476.3" y="1160.6" width="5.6" height="4.8" fill="#f7b66c" opacity="0.85"/><rect x="1489.2" y="1160.6" width="5.6" height="4.8" fill="#f7b66c" opacity="0.85"/><rect x="1501.6" y="1159.9" width="6.6" height="6.2" fill="#f8b55e"/><rect x="1514.5" y="1159.9" width="6.6" height="6.2" fill="#f8b55e"/><rect x="1527.4" y="1159.9" width="6.6" height="6.2" fill="#f8b55e"/><rect x="1540.3" y="1159.9" width="6.6" height="6.2" fill="#f8b55e"/><rect x="1553.7" y="1160.6" width="5.6" height="4.8" fill="#f7b66c" opacity="0.85"/><rect x="1566.6" y="1160.6" width="5.6" height="4.8" fill="#f7b66c" opacity="0.85"/><rect x="1579.5" y="1160.6" width="5.6" height="4.8" fill="#f7b66c" opacity="0.85"/><rect x="1592.4" y="1160.6" width="5.6" height="4.8" fill="#f7b66c" opacity="0.85"/><rect x="1605.3" y="1160.6" width="5.6" height="4.8" fill="#f7b66c" opacity="0.85"/><rect x="1295.1" y="1172.7" width="6.8" height="6.4" fill="#f8b55e" stroke="#000" stroke-width="1.9"/><rect x="1308.1" y="1172.8" width="6.6" height="6.2" fill="#f8b55e"/><rect x="1321" y="1172.8" width="6.6" height="6.2" fill="#f8b55e"/><rect x="1333.9" y="1172.8" width="6.6" height="6.2" fill="#f8b55e"/><rect x="1346.8" y="1172.8" width="6.6" height="6.2" fill="#f8b55e"/><rect x="1359.7" y="1172.8" width="6.6" height="6.2" fill="#f8b55e"/><rect x="1372.6" y="1172.8" width="6.6" height="6.2" fill="#f8b55e"/><rect x="1385.5" y="1172.8" width="6.6" height="6.2" fill="#f8b55e"/><rect x="1398.9" y="1173.5" width="5.6" height="4.8" fill="#f7b66c" opacity="0.85"/><rect x="1411.8" y="1173.5" width="5.6" height="4.8" fill="#f7b66c" opacity="0.85"/><rect x="1424.7" y="1173.5" width="5.6" height="4.8" fill="#f7b66c" opacity="0.85"/><rect x="1437.6" y="1173.5" width="5.6" height="4.8" fill="#f7b66c" opacity="0.85"/><rect x="1463.4" y="1173.5" width="5.6" height="4.8" fill="#f7b66c" opacity="0.85"/><rect x="1476.3" y="1173.5" width="5.6" height="4.8" fill="#f7b66c" opacity="0.85"/><rect x="1489.2" y="1173.5" width="5.6" height="4.8" fill="#f7b66c" opacity="0.85"/><rect x="1501.6" y="1172.8" width="6.6" height="6.2" fill="#f8b55e"/><rect x="1514.5" y="1172.8" width="6.6" height="6.2" fill="#f8b55e"/><rect x="1527.4" y="1172.8" width="6.6" height="6.2" fill="#f8b55e"/><rect x="1540.3" y="1172.8" width="6.6" height="6.2" fill="#f8b55e"/><rect x="1553.2" y="1172.8" width="6.6" height="6.2" fill="#f8b55e"/><rect x="1566" y="1172.7" width="6.8" height="6.4" fill="#f8b55e" stroke="#000" stroke-width="1.9"/><rect x="1579.5" y="1173.5" width="5.6" height="4.8" fill="#f7b66c" opacity="0.85"/><rect x="1592.4" y="1173.5" width="5.6" height="4.8" fill="#f7b66c" opacity="0.85"/><rect x="1605.3" y="1173.5" width="5.6" height="4.8" fill="#f7b66c" opacity="0.85"/><rect x="1295.1" y="1185.6" width="6.8" height="6.4" fill="#f8b55e" stroke="#000" stroke-width="1.9"/><rect x="1308.1" y="1185.7" width="6.6" height="6.2" fill="#f8b55e"/><rect x="1321" y="1185.7" width="6.6" height="6.2" fill="#f8b55e"/><rect x="1333.9" y="1185.7" width="6.6" height="6.2" fill="#f8b55e"/><rect x="1346.8" y="1185.7" width="6.6" height="6.2" fill="#f8b55e"/><rect x="1359.7" y="1185.7" width="6.6" height="6.2" fill="#f8b55e"/><rect x="1372.6" y="1185.7" width="6.6" height="6.2" fill="#f8b55e"/><rect x="1385.5" y="1185.7" width="6.6" height="6.2" fill="#f8b55e"/><rect x="1398.9" y="1186.4" width="5.6" height="4.8" fill="#f7b66c" opacity="0.85"/><rect x="1411.8" y="1186.4" width="5.6" height="4.8" fill="#f7b66c" opacity="0.85"/><rect x="1424.7" y="1186.4" width="5.6" height="4.8" fill="#f7b66c" opacity="0.85"/><rect x="1437.6" y="1186.4" width="5.6" height="4.8" fill="#f7b66c" opacity="0.85"/><rect x="1463.4" y="1186.4" width="5.6" height="4.8" fill="#f7b66c" opacity="0.85"/><rect x="1476.3" y="1186.4" width="5.6" height="4.8" fill="#f7b66c" opacity="0.85"/><rect x="1489.2" y="1186.4" width="5.6" height="4.8" fill="#f7b66c" opacity="0.85"/><rect x="1502.1" y="1186.4" width="5.6" height="4.8" fill="#f7b66c" opacity="0.85"/><rect x="1514.5" y="1185.7" width="6.6" height="6.2" fill="#f8b55e"/><rect x="1527.4" y="1185.7" width="6.6" height="6.2" fill="#f8b55e"/><rect x="1540.3" y="1185.7" width="6.6" height="6.2" fill="#f8b55e"/><rect x="1553.2" y="1185.7" width="6.6" height="6.2" fill="#f8b55e"/><rect x="1566" y="1185.6" width="6.8" height="6.4" fill="#f8b55e" stroke="#000" stroke-width="1.9"/><rect x="1578.9" y="1185.6" width="6.8" height="6.4" fill="#f8b55e" stroke="#000" stroke-width="1.9"/><rect x="1591.8" y="1185.6" width="6.8" height="6.4" fill="#f8b55e" stroke="#000" stroke-width="1.9"/><rect x="1605.3" y="1186.4" width="5.6" height="4.8" fill="#f7b66c" opacity="0.85"/><rect x="1295.1" y="1198.5" width="6.8" height="6.4" fill="#f8b55e" stroke="#000" stroke-width="1.9"/><rect x="1308" y="1198.5" width="6.8" height="6.4" fill="#f8b55e" stroke="#000" stroke-width="1.9"/><rect x="1321" y="1198.6" width="6.6" height="6.2" fill="#f8b55e"/><rect x="1333.9" y="1198.6" width="6.6" height="6.2" fill="#f8b55e"/><rect x="1346.7" y="1198.5" width="6.8" height="6.4" fill="#f8b55e" stroke="#000" stroke-width="1.9"/><rect x="1359.7" y="1198.6" width="6.6" height="6.2" fill="#f8b55e"/><rect x="1372.5" y="1198.5" width="6.8" height="6.4" fill="#f8b55e" stroke="#000" stroke-width="1.9"/><rect x="1385.4" y="1198.5" width="6.8" height="6.4" fill="#f8b55e" stroke="#000" stroke-width="1.9"/><rect x="1398.3" y="1198.5" width="6.8" height="6.4" fill="#f8b55e" stroke="#000" stroke-width="1.9"/><rect x="1411.8" y="1199.3" width="5.6" height="4.8" fill="#f7b66c" opacity="0.85"/><rect x="1424.7" y="1199.3" width="5.6" height="4.8" fill="#f7b66c" opacity="0.85"/><rect x="1437.6" y="1199.3" width="5.6" height="4.8" fill="#f7b66c" opacity="0.85"/><rect x="1463.4" y="1199.3" width="5.6" height="4.8" fill="#f7b66c" opacity="0.85"/><rect x="1476.3" y="1199.3" width="5.6" height="4.8" fill="#f7b66c" opacity="0.85"/><rect x="1489.2" y="1199.3" width="5.6" height="4.8" fill="#f7b66c" opacity="0.85"/><rect x="1502.1" y="1199.3" width="5.6" height="4.8" fill="#f7b66c" opacity="0.85"/><rect x="1515" y="1199.3" width="5.6" height="4.8" fill="#f7b66c" opacity="0.85"/><rect x="1527.9" y="1199.3" width="5.6" height="4.8" fill="#f7b66c" opacity="0.85"/><rect x="1540.8" y="1199.3" width="5.6" height="4.8" fill="#f7b66c" opacity="0.85"/><rect x="1553.1" y="1198.5" width="6.8" height="6.4" fill="#f8b55e" stroke="#000" stroke-width="1.9"/><rect x="1566" y="1198.5" width="6.8" height="6.4" fill="#f8b55e" stroke="#000" stroke-width="1.9"/><rect x="1578.9" y="1198.5" width="6.8" height="6.4" fill="#f8b55e" stroke="#000" stroke-width="1.9"/><rect x="1591.8" y="1198.5" width="6.8" height="6.4" fill="#f8b55e" stroke="#000" stroke-width="1.9"/><rect x="1605.3" y="1199.3" width="5.6" height="4.8" fill="#f7b66c" opacity="0.85"/><rect x="1547.6" y="909.1" width="4.8" height="4.8" fill="#f8b55e"/><rect x="1302.5" y="922" width="4.8" height="4.8" fill="#f8b55e"/><rect x="1547.6" y="922" width="4.8" height="4.8" fill="#f8b55e"/><rect x="1599.2" y="922" width="4.8" height="4.8" fill="#c1f06a"/><rect x="1302.5" y="934.9" width="4.8" height="4.8" fill="#f8b55e"/><rect x="1302.5" y="947.8" width="4.8" height="4.8" fill="#c1f06a"/><rect x="1315.5" y="947.8" width="4.8" height="4.8" fill="#f8b55e"/><rect x="1328.3" y="947.8" width="4.8" height="4.8" fill="#f8b55e"/><rect x="1586.3" y="947.8" width="4.8" height="4.8" fill="#f8b55e"/><rect x="1599.2" y="947.8" width="4.8" height="4.8" fill="#f8b55e"/><rect x="1302.5" y="960.7" width="4.8" height="4.8" fill="#f8b55e"/><rect x="1315.5" y="960.7" width="4.8" height="4.8" fill="#f8b55e"/><rect x="1328.3" y="960.7" width="4.8" height="4.8" fill="#c1f06a"/><rect x="1341.2" y="960.7" width="4.8" height="4.8" fill="#f8b55e"/><rect x="1599.2" y="960.7" width="4.8" height="4.8" fill="#f8b55e"/><rect x="1315.5" y="973.6" width="4.8" height="4.8" fill="#c1f06a"/><rect x="1328.3" y="973.6" width="4.8" height="4.8" fill="#c1f06a"/><rect x="1341.2" y="973.6" width="4.8" height="4.8" fill="#f8b55e"/><rect x="1302.5" y="986.5" width="4.8" height="4.8" fill="#f8b55e"/><rect x="1328.3" y="986.5" width="4.8" height="4.8" fill="#f8b55e"/><rect x="1341.2" y="986.5" width="4.8" height="4.8" fill="#f8b55e"/><rect x="1302.5" y="999.4" width="4.8" height="4.8" fill="#f8b55e"/><rect x="1315.5" y="999.4" width="4.8" height="4.8" fill="#f8b55e"/><rect x="1341.2" y="999.4" width="4.8" height="4.8" fill="#c1f06a"/><rect x="1302.5" y="1012.3" width="4.8" height="4.8" fill="#c1f06a"/><rect x="1315.5" y="1012.3" width="4.8" height="4.8" fill="#f8b55e"/><rect x="1328.3" y="1012.3" width="4.8" height="4.8" fill="#c1f06a"/><rect x="1302.5" y="1025.1" width="4.8" height="4.8" fill="#f8b55e"/><rect x="1315.5" y="1025.1" width="4.8" height="4.8" fill="#c1f06a"/><rect x="1328.3" y="1025.1" width="4.8" height="4.8" fill="#f8b55e"/><rect x="1341.2" y="1025.1" width="4.8" height="4.8" fill="#c1f06a"/><rect x="1315.5" y="1038" width="4.8" height="4.8" fill="#c1f06a"/><rect x="1599.2" y="1051" width="4.8" height="4.8" fill="#f8b55e"/><rect x="1547.6" y="1063.8" width="4.8" height="4.8" fill="#f8b55e"/><rect x="1560.5" y="1063.8" width="4.8" height="4.8" fill="#f8b55e"/><rect x="1573.5" y="1063.8" width="4.8" height="4.8" fill="#f8b55e"/><rect x="1586.3" y="1063.8" width="4.8" height="4.8" fill="#f8b55e"/><rect x="1599.2" y="1063.8" width="4.8" height="4.8" fill="#c1f06a"/><rect x="1586.3" y="1076.8" width="4.8" height="4.8" fill="#c1f06a"/><rect x="1599.2" y="1076.8" width="4.8" height="4.8" fill="#f8b55e"/><rect x="1586.3" y="1089.6" width="4.8" height="4.8" fill="#f8b55e"/><rect x="1599.2" y="1089.6" width="4.8" height="4.8" fill="#f8b55e"/><rect x="1302.5" y="1102.5" width="4.8" height="4.8" fill="#f8b55e"/><rect x="1315.5" y="1102.5" width="4.8" height="4.8" fill="#c1f06a"/><rect x="1328.3" y="1102.5" width="4.8" height="4.8" fill="#c1f06a"/><rect x="1341.2" y="1102.5" width="4.8" height="4.8" fill="#f8b55e"/><rect x="1560.5" y="1102.5" width="4.8" height="4.8" fill="#f8b55e"/><rect x="1573.5" y="1102.5" width="4.8" height="4.8" fill="#f8b55e"/><rect x="1586.3" y="1102.5" width="4.8" height="4.8" fill="#f8b55e"/><rect x="1302.5" y="1115.5" width="4.8" height="4.8" fill="#f8b55e"/><rect x="1315.5" y="1115.5" width="4.8" height="4.8" fill="#f8b55e"/><rect x="1328.3" y="1115.5" width="4.8" height="4.8" fill="#c1f06a"/><rect x="1341.2" y="1115.5" width="4.8" height="4.8" fill="#f8b55e"/><rect x="1560.5" y="1115.5" width="4.8" height="4.8" fill="#f8b55e"/><rect x="1573.5" y="1115.5" width="4.8" height="4.8" fill="#f8b55e"/><rect x="1586.3" y="1115.5" width="4.8" height="4.8" fill="#f8b55e"/><rect x="1599.2" y="1115.5" width="4.8" height="4.8" fill="#f8b55e"/><rect x="1302.5" y="1128.3" width="4.8" height="4.8" fill="#f8b55e"/><rect x="1315.5" y="1128.3" width="4.8" height="4.8" fill="#f8b55e"/><rect x="1328.3" y="1128.3" width="4.8" height="4.8" fill="#f8b55e"/><rect x="1341.2" y="1128.3" width="4.8" height="4.8" fill="#f8b55e"/><rect x="1573.5" y="1128.3" width="4.8" height="4.8" fill="#f8b55e"/><rect x="1586.3" y="1128.3" width="4.8" height="4.8" fill="#f8b55e"/><rect x="1599.2" y="1128.3" width="4.8" height="4.8" fill="#f8b55e"/><rect x="1302.5" y="1141.2" width="4.8" height="4.8" fill="#f8b55e"/><rect x="1315.5" y="1141.2" width="4.8" height="4.8" fill="#f8b55e"/><rect x="1328.3" y="1141.2" width="4.8" height="4.8" fill="#f8b55e"/><rect x="1341.2" y="1141.2" width="4.8" height="4.8" fill="#f8b55e"/><rect x="1354.1" y="1141.2" width="4.8" height="4.8" fill="#f8b55e"/><rect x="1302.5" y="1154.1" width="4.8" height="4.8" fill="#f8b55e"/><rect x="1315.5" y="1154.1" width="4.8" height="4.8" fill="#f8b55e"/><rect x="1328.3" y="1154.1" width="4.8" height="4.8" fill="#f8b55e"/><rect x="1341.2" y="1154.1" width="4.8" height="4.8" fill="#f8b55e"/><rect x="1354.1" y="1154.1" width="4.8" height="4.8" fill="#f8b55e"/><rect x="1315.5" y="1167" width="4.8" height="4.8" fill="#f8b55e"/><rect x="1328.3" y="1167" width="4.8" height="4.8" fill="#f8b55e"/><rect x="1341.2" y="1167" width="4.8" height="4.8" fill="#f8b55e"/><rect x="1354.1" y="1167" width="4.8" height="4.8" fill="#f8b55e"/><rect x="1509" y="1167" width="4.8" height="4.8" fill="#f8b55e"/><rect x="1521.8" y="1167" width="4.8" height="4.8" fill="#c1f06a"/><rect x="1534.8" y="1167" width="4.8" height="4.8" fill="#f8b55e"/><rect x="1315.5" y="1180" width="4.8" height="4.8" fill="#f8b55e"/><rect x="1328.3" y="1180" width="4.8" height="4.8" fill="#f8b55e"/><rect x="1341.2" y="1180" width="4.8" height="4.8" fill="#f8b55e"/><rect x="1354.1" y="1180" width="4.8" height="4.8" fill="#f8b55e"/><rect x="1367" y="1180" width="4.8" height="4.8" fill="#f8b55e"/><rect x="1380" y="1180" width="4.8" height="4.8" fill="#f8b55e"/><rect x="1534.8" y="1180" width="4.8" height="4.8" fill="#f8b55e"/><rect x="1328.3" y="1192.8" width="4.8" height="4.8" fill="#c1f06a"/><rect x="1425" y="1006.7" width="4" height="4" fill="#f8b55e"/><rect x="1438.1" y="993.8" width="4" height="4" fill="#f8b55e"/><rect x="1425" y="1032.4" width="4" height="4" fill="#f8b55e"/><rect x="1463.6" y="993.8" width="4" height="4" fill="#f8b55e"/><rect x="1425" y="1058.1" width="4" height="4" fill="#f8b55e"/><rect x="1476.5" y="1006.7" width="4" height="4" fill="#f8b55e"/><rect x="1438.1" y="1045.2" width="4" height="4" fill="#f8b55e"/><rect x="1463.6" y="1019.5" width="4" height="4" fill="#f8b55e"/><rect x="1476.5" y="1032.4" width="4" height="4" fill="#f8b55e"/><rect x="1489.3" y="1019.5" width="4" height="4" fill="#f8b55e"/><rect x="1450.7" y="1058.1" width="4" height="4" fill="#f8b55e"/><rect x="1463.6" y="1045.2" width="4" height="4" fill="#f8b55e"/><rect x="1463.6" y="1071" width="4" height="4" fill="#f8b55e"/><rect x="1489.3" y="1045.2" width="4" height="4" fill="#f8b55e"/><rect x="1476.5" y="1083.8" width="4" height="4" fill="#f8b55e"/><rect x="1489.3" y="1071" width="4" height="4" fill="#f8b55e"/><rect x="1425" y="1083.8" width="4" height="4" fill="#f8b55e"/><rect x="1438.1" y="1071" width="4" height="4" fill="#f8b55e"/><rect x="1399.3" y="1109.5" width="4" height="4" fill="#f8b55e"/><rect x="1412.2" y="1096.7" width="4" height="4" fill="#f8b55e"/><rect x="1463.6" y="1096.7" width="4" height="4" fill="#f8b55e"/><rect x="1489.3" y="1071" width="4" height="4" fill="#f8b55e"/><rect x="1489.3" y="1019.5" width="4" height="4" fill="#f8b55e"/><rect x="1502.2" y="1019.5" width="4" height="4" fill="#f8b55e"/><circle cx="1122.3" cy="1017.1" r="2.3" fill="#f8b55e" stroke="#000" stroke-width="1.8"/><circle cx="1126.8" cy="1025.1" r="2.3" fill="#f8b55e" stroke="#000" stroke-width="1.8"/><circle cx="1137.5" cy="1017.1" r="2.3" fill="#f8b55e" stroke="#000" stroke-width="1.8"/><circle cx="1145.4" cy="1026.4" r="2.3" fill="#f8b55e" stroke="#000" stroke-width="1.8"/><circle cx="1140.8" cy="984.7" r="2.3" fill="#f8b55e" stroke="#000" stroke-width="1.8"/><circle cx="1157.3" cy="973.1" r="2.3" fill="#f8b55e" stroke="#000" stroke-width="1.8"/><circle cx="1166.8" cy="977.3" r="2.3" fill="#f8b55e" stroke="#000" stroke-width="1.8"/><circle cx="1155.6" cy="989.6" r="2.3" fill="#f8b55e" stroke="#000" stroke-width="1.8"/><circle cx="1174.6" cy="966" r="2.3" fill="#f8b55e" stroke="#000" stroke-width="1.8"/><circle cx="1239.3" cy="892.4" r="2.3" fill="#f8b55e" stroke="#000" stroke-width="1.8"/><circle cx="1247.1" cy="899" r="2.3" fill="#f8b55e" stroke="#000" stroke-width="1.8"/><circle cx="1234.4" cy="906.4" r="2.3" fill="#f8b55e" stroke="#000" stroke-width="1.8"/><circle cx="1234.7" cy="915.4" r="2.3" fill="#f8b55e" stroke="#000" stroke-width="1.8"/><circle cx="1245.4" cy="915.4" r="2.3" fill="#f8b55e" stroke="#000" stroke-width="1.8"/><circle cx="1195.5" cy="903.6" r="2.3" fill="#f8b55e" stroke="#000" stroke-width="1.8"/><circle cx="1205.1" cy="903.6" r="2.3" fill="#f8b55e" stroke="#000" stroke-width="1.8"/><circle cx="1219.1" cy="966" r="2.3" fill="#f8b55e" stroke="#000" stroke-width="1.8"/><circle cx="1234.4" cy="966" r="2.3" fill="#f8b55e" stroke="#000" stroke-width="1.8"/><circle cx="1247.9" cy="966" r="2.3" fill="#f8b55e" stroke="#000" stroke-width="1.8"/><circle cx="1260.3" cy="960.4" r="2.3" fill="#f8b55e" stroke="#000" stroke-width="1.8"/><circle cx="1257.5" cy="992.6" r="2.3" fill="#f8b55e" stroke="#000" stroke-width="1.8"/><circle cx="1237.2" cy="1000" r="2.3" fill="#f8b55e" stroke="#000" stroke-width="1.8"/><circle cx="1244.6" cy="1009.9" r="2.3" fill="#f8b55e" stroke="#000" stroke-width="1.8"/><circle cx="1252.9" cy="1017.1" r="2.3" fill="#f8b55e" stroke="#000" stroke-width="1.8"/><rect x="1208" y="1024.4" width="10.5" height="8.5" fill="#f8b55e" rx="3" stroke="#000" stroke-width="1.7"/><rect x="1208" y="1041.9" width="10.5" height="8.5" fill="#f8b55e" rx="3" stroke="#000" stroke-width="1.7"/><circle cx="1178.2" cy="1141.6" r="2.4" fill="#f8b55e" stroke="#000" stroke-width="1.8"/><circle cx="1207.9" cy="1153.5" r="2.4" fill="#f8b55e" stroke="#000" stroke-width="1.8"/><circle cx="1204.6" cy="1179.9" r="2.4" fill="#f8b55e" stroke="#000" stroke-width="1.8"/><circle cx="1166.7" cy="1200" r="2.4" fill="#f8b55e" stroke="#000" stroke-width="1.8"/><circle cx="1183.2" cy="1206.6" r="2.4" fill="#f8b55e" stroke="#000" stroke-width="1.8"/><circle cx="1189.8" cy="1216.2" r="2.4" fill="#f8b55e" stroke="#000" stroke-width="1.8"/><circle cx="1170" cy="1235.9" r="2.4" fill="#f8b55e" stroke="#000" stroke-width="1.8"/><circle cx="1165.1" cy="1243.4" r="2.4" fill="#f8b55e" stroke="#000" stroke-width="1.8"/><circle cx="1181.5" cy="1246.6" r="2.4" fill="#f8b55e" stroke="#000" stroke-width="1.8"/><circle cx="1178.7" cy="1142.3" r="2.4" fill="#f8b55e" stroke="#000" stroke-width="1.8"/><circle cx="1191.1" cy="1155.5" r="2.4" fill="#f8b55e" stroke="#000" stroke-width="1.8"/><circle cx="1169.3" cy="1174.3" r="2.4" fill="#f8b55e" stroke="#000" stroke-width="1.8"/><circle cx="1183.2" cy="1181.9" r="2.4" fill="#f8b55e" stroke="#000" stroke-width="1.8"/><circle cx="1161.4" cy="1223.1" r="2.4" fill="#f8b55e" stroke="#000" stroke-width="1.8"/><circle cx="1183.2" cy="1204.4" r="2.4" fill="#f8b55e" stroke="#000" stroke-width="1.8"/><circle cx="1191.1" cy="1213.8" r="2.4" fill="#f8b55e" stroke="#000" stroke-width="1.8"/><circle cx="1187.8" cy="1230.3" r="2.4" fill="#f8b55e" stroke="#000" stroke-width="1.8"/><circle cx="1164.7" cy="1242.9" r="2.4" fill="#f8b55e" stroke="#000" stroke-width="1.8"/><circle cx="1181.2" cy="1242.9" r="2.4" fill="#f8b55e" stroke="#000" stroke-width="1.8"/><circle cx="1173.8" cy="1261.6" r="2.4" fill="#f8b55e" stroke="#000" stroke-width="1.8"/><circle cx="1264.4" cy="1198.7" r="2.4" fill="#f8b55e" stroke="#000" stroke-width="1.8"/><circle cx="878" cy="780.2" r="4.2" fill="#f7b66c"/><circle cx="893.9" cy="780.2" r="4.2" fill="#f7b66c"/><circle cx="909.8" cy="780.2" r="4.2" fill="#f7b66c"/><circle cx="925.6" cy="780.2" r="4.6" fill="#f8b55e" stroke="#000" stroke-width="2.2"/><circle cx="941.5" cy="780.2" r="4.2" fill="#f7b66c"/><circle cx="957.3" cy="780.2" r="4.6" fill="#f8b55e" stroke="#000" stroke-width="2.2"/><circle cx="973.2" cy="780.2" r="4.6" fill="#f8b55e" stroke="#000" stroke-width="2.2"/><circle cx="989.1" cy="780.2" r="4.2" fill="#f7b66c"/><circle cx="1004.9" cy="780.2" r="4.6" fill="#f8b55e" stroke="#000" stroke-width="2.2"/><circle cx="1020.8" cy="780.2" r="4.6" fill="#f8b55e" stroke="#000" stroke-width="2.2"/><circle cx="1036.6" cy="780.2" r="4.2" fill="#f7b66c"/><circle cx="1052.5" cy="780.2" r="4.2" fill="#f7b66c"/><circle cx="1068.3" cy="780.2" r="4.6" fill="#f8b55e" stroke="#000" stroke-width="2.2"/><circle cx="1084.2" cy="780.2" r="4.6" fill="#f8b55e" stroke="#000" stroke-width="2.2"/><circle cx="1100.1" cy="780.2" r="4.2" fill="#f7b66c"/><circle cx="1115.9" cy="780.2" r="4.6" fill="#f8b55e" stroke="#000" stroke-width="2.2"/><circle cx="878" cy="795.3" r="4.6" fill="#f8b55e"/><circle cx="893.9" cy="795.3" r="4.6" fill="#f8b55e"/><circle cx="909.8" cy="795.3" r="4.6" fill="#f8b55e"/><circle cx="925.6" cy="795.3" r="4.6" fill="#f8b55e"/><circle cx="941.5" cy="795.3" r="4.6" fill="#f8b55e"/><circle cx="957.3" cy="795.3" r="4.6" fill="#f8b55e"/><circle cx="973.2" cy="795.3" r="4.6" fill="#f8b55e"/><circle cx="989.1" cy="795.3" r="4.2" fill="#f7b66c"/><circle cx="1004.9" cy="795.3" r="4.6" fill="#f8b55e" stroke="#000" stroke-width="2.2"/><circle cx="1020.8" cy="795.3" r="4.6" fill="#f8b55e" stroke="#000" stroke-width="2.2"/><circle cx="1036.6" cy="795.3" r="4.6" fill="#f8b55e" stroke="#000" stroke-width="2.2"/><circle cx="1052.5" cy="795.3" r="4.2" fill="#f7b66c"/><circle cx="1068.3" cy="795.3" r="4.6" fill="#f8b55e" stroke="#000" stroke-width="2.2"/><circle cx="1084.2" cy="795.3" r="4.6" fill="#f8b55e" stroke="#000" stroke-width="2.2"/><circle cx="1100.1" cy="795.3" r="4.6" fill="#f8b55e" stroke="#000" stroke-width="2.2"/><circle cx="1115.9" cy="795.3" r="4.6" fill="#f8b55e"/><circle cx="878" cy="811.8" r="4.6" fill="#f8b55e"/><circle cx="893.9" cy="811.8" r="4.6" fill="#f8b55e"/><circle cx="909.8" cy="811.8" r="4.6" fill="#f8b55e"/><circle cx="925.6" cy="811.8" r="4.6" fill="#f8b55e"/><circle cx="941.5" cy="811.8" r="4.6" fill="#f8b55e"/><circle cx="957.3" cy="811.8" r="4.6" fill="#f8b55e"/><circle cx="973.2" cy="811.8" r="4.6" fill="#f8b55e"/><circle cx="989.1" cy="811.8" r="4.6" fill="#f8b55e"/><circle cx="1004.9" cy="811.8" r="4.6" fill="#f8b55e" stroke="#000" stroke-width="2.2"/><circle cx="1020.8" cy="811.8" r="4.6" fill="#f8b55e" stroke="#000" stroke-width="2.2"/><circle cx="1036.6" cy="811.8" r="4.6" fill="#f8b55e" stroke="#000" stroke-width="2.2"/><circle cx="1052.5" cy="811.8" r="4.6" fill="#f8b55e" stroke="#000" stroke-width="2.2"/><circle cx="1068.3" cy="811.8" r="4.6" fill="#f8b55e" stroke="#000" stroke-width="2.2"/><circle cx="1084.2" cy="811.8" r="4.6" fill="#f8b55e" stroke="#000" stroke-width="2.2"/><circle cx="1100.1" cy="811.8" r="4.2" fill="#f7b66c"/><circle cx="1115.9" cy="811.8" r="4.6" fill="#f8b55e" stroke="#000" stroke-width="2.2"/><circle cx="878" cy="874.9" r="4.6" fill="#f8b55e"/><circle cx="893.9" cy="874.9" r="4.6" fill="#f8b55e"/><circle cx="909.8" cy="874.9" r="4.6" fill="#f8b55e"/><circle cx="925.6" cy="874.9" r="4.6" fill="#f8b55e"/><circle cx="941.5" cy="874.9" r="4.6" fill="#f8b55e"/><circle cx="957.3" cy="874.9" r="4.6" fill="#f8b55e"/><circle cx="973.2" cy="874.9" r="4.6" fill="#f8b55e" stroke="#000" stroke-width="2.2"/><circle cx="989.1" cy="874.9" r="4.6" fill="#f8b55e" stroke="#000" stroke-width="2.2"/><circle cx="1004.9" cy="874.9" r="4.6" fill="#f8b55e" stroke="#000" stroke-width="2.2"/><circle cx="1020.8" cy="874.9" r="4.6" fill="#f8b55e" stroke="#000" stroke-width="2.2"/><circle cx="1036.6" cy="874.9" r="4.6" fill="#f8b55e"/><circle cx="1052.5" cy="874.9" r="4.6" fill="#f8b55e"/><circle cx="1068.3" cy="874.9" r="4.6" fill="#f8b55e"/><circle cx="1084.2" cy="874.9" r="4.6" fill="#f8b55e"/><circle cx="1100.1" cy="874.9" r="4.6" fill="#f8b55e"/><circle cx="1115.9" cy="874.9" r="4.6" fill="#f8b55e" stroke="#000" stroke-width="2.2"/><circle cx="878" cy="890.7" r="4.6" fill="#f8b55e"/><circle cx="893.9" cy="890.7" r="4.6" fill="#f8b55e"/><circle cx="909.8" cy="890.7" r="4.6" fill="#f8b55e"/><circle cx="925.6" cy="890.7" r="4.6" fill="#f8b55e"/><circle cx="941.5" cy="890.7" r="4.6" fill="#f8b55e"/><circle cx="957.3" cy="890.7" r="4.6" fill="#f8b55e"/><circle cx="973.2" cy="890.7" r="4.6" fill="#f8b55e" stroke="#000" stroke-width="2.2"/><circle cx="989.1" cy="890.7" r="4.2" fill="#f7b66c"/><circle cx="1004.9" cy="890.7" r="4.6" fill="#f8b55e" stroke="#000" stroke-width="2.2"/><circle cx="1020.8" cy="890.7" r="4.2" fill="#f7b66c"/><circle cx="1036.6" cy="890.7" r="4.6" fill="#f8b55e"/><circle cx="1052.5" cy="890.7" r="4.6" fill="#f8b55e"/><circle cx="1068.3" cy="890.7" r="4.6" fill="#f8b55e"/><circle cx="1084.2" cy="890.7" r="4.6" fill="#f8b55e"/><circle cx="1100.1" cy="890.7" r="4.6" fill="#f8b55e"/><circle cx="1115.9" cy="890.7" r="4.6" fill="#f8b55e"/><circle cx="878" cy="906.5" r="4.2" fill="#f7b66c"/><circle cx="893.9" cy="906.5" r="4.6" fill="#f8b55e"/><circle cx="909.8" cy="906.5" r="4.6" fill="#f8b55e"/><circle cx="925.6" cy="906.5" r="4.2" fill="#f7b66c"/><circle cx="941.5" cy="906.5" r="4.6" fill="#f8b55e"/><circle cx="957.3" cy="906.5" r="4.6" fill="#f8b55e" stroke="#000" stroke-width="2.2"/><circle cx="973.2" cy="906.5" r="4.6" fill="#f8b55e"/><circle cx="989.1" cy="906.5" r="4.6" fill="#f8b55e"/><circle cx="1004.9" cy="906.5" r="4.6" fill="#f8b55e" stroke="#000" stroke-width="2.2"/><circle cx="1020.8" cy="906.5" r="4.2" fill="#f7b66c"/><circle cx="1036.6" cy="906.5" r="4.2" fill="#f7b66c"/><circle cx="1052.5" cy="906.5" r="4.6" fill="#f8b55e"/><circle cx="1068.3" cy="906.5" r="4.6" fill="#f8b55e"/><circle cx="1084.2" cy="906.5" r="4.6" fill="#f8b55e"/><circle cx="1100.1" cy="906.5" r="4.6" fill="#f8b55e"/><circle cx="1115.9" cy="906.5" r="4.6" fill="#f8b55e"/><circle cx="870.5" cy="803.2" r="2.4" fill="#f8b55e"/><circle cx="886.3" cy="803.2" r="2.4" fill="#f8b55e"/><circle cx="902.2" cy="803.2" r="2.4" fill="#f8b55e"/><circle cx="918" cy="803.2" r="2.4" fill="#f8b55e"/><circle cx="933.9" cy="803.2" r="2.4" fill="#f8b55e"/><circle cx="949.8" cy="803.2" r="2.4" fill="#f8b55e"/><circle cx="965.6" cy="803.2" r="2.4" fill="#f8b55e"/><circle cx="981.5" cy="803.2" r="2.4" fill="#f8b55e"/><circle cx="870.5" cy="820.6" r="2.4" fill="#f8b55e"/><circle cx="886.3" cy="820.6" r="2.4" fill="#f8b55e"/><circle cx="902.2" cy="820.6" r="2.4" fill="#f8b55e"/><circle cx="918" cy="820.6" r="2.4" fill="#f8b55e"/><circle cx="933.9" cy="820.6" r="2.4" fill="#f8b55e"/><circle cx="949.8" cy="820.6" r="2.4" fill="#f8b55e"/><circle cx="965.6" cy="820.6" r="2.4" fill="#f8b55e"/><circle cx="981.5" cy="820.6" r="2.4" fill="#f8b55e"/><circle cx="870.5" cy="882.8" r="2.4" fill="#f8b55e"/><circle cx="886.3" cy="882.8" r="2.4" fill="#f8b55e"/><circle cx="902.2" cy="882.8" r="2.4" fill="#f8b55e"/><circle cx="918" cy="882.8" r="2.4" fill="#f8b55e"/><circle cx="933.9" cy="882.8" r="2.4" fill="#f8b55e"/><circle cx="949.8" cy="882.8" r="2.4" fill="#f8b55e"/><circle cx="1029" cy="882.8" r="2.4" fill="#f8b55e"/><circle cx="1044.9" cy="882.8" r="2.4" fill="#f8b55e"/><circle cx="1060.8" cy="882.8" r="2.4" fill="#f8b55e"/><circle cx="1076.6" cy="882.8" r="2.4" fill="#f8b55e"/><circle cx="1092.5" cy="882.8" r="2.4" fill="#f8b55e"/><circle cx="1108.3" cy="882.8" r="2.4" fill="#f8b55e"/><circle cx="870.5" cy="898.6" r="2.4" fill="#f8b55e"/><circle cx="886.3" cy="898.6" r="2.4" fill="#f8b55e"/><circle cx="902.2" cy="898.6" r="2.4" fill="#f8b55e"/><circle cx="918" cy="898.6" r="2.4" fill="#f8b55e"/><circle cx="933.9" cy="898.6" r="2.4" fill="#f8b55e"/><circle cx="949.8" cy="898.6" r="2.4" fill="#f8b55e"/><circle cx="1029" cy="898.6" r="2.4" fill="#f8b55e"/><circle cx="1044.9" cy="898.6" r="2.4" fill="#f8b55e"/><circle cx="1060.8" cy="898.6" r="2.4" fill="#f8b55e"/><circle cx="1076.6" cy="898.6" r="2.4" fill="#f8b55e"/><circle cx="1092.5" cy="898.6" r="2.4" fill="#f8b55e"/><circle cx="1108.3" cy="898.6" r="2.4" fill="#f8b55e"/><circle cx="1004.9" cy="831" r="2.6" fill="#f8b55e" stroke="#000" stroke-width="1.8"/><circle cx="1020.8" cy="831" r="2.6" fill="#f8b55e" stroke="#000" stroke-width="1.8"/><circle cx="1036.6" cy="831" r="2.6" fill="#f8b55e" stroke="#000" stroke-width="1.8"/><circle cx="1052.5" cy="831" r="2.6" fill="#f8b55e" stroke="#000" stroke-width="1.8"/><circle cx="1068.3" cy="831" r="2.6" fill="#f8b55e" stroke="#000" stroke-width="1.8"/><circle cx="1084.2" cy="831" r="2.6" fill="#f8b55e" stroke="#000" stroke-width="1.8"/><rect x="880.7" y="703.5" width="10.5" height="10" fill="#f7b66c"/><rect x="879.7" y="721.2" width="12.4" height="12.4" fill="#f8b55e" rx="4" stroke="#000" stroke-width="1.7"/><rect x="909.1" y="703.5" width="10.5" height="10" fill="#f7b66c"/><rect x="908.2" y="721.2" width="12.4" height="12.4" fill="#f8b55e" rx="4" stroke="#000" stroke-width="1.7"/><rect x="934.7" y="703.5" width="10.5" height="10" fill="#f7b66c"/><rect x="933.8" y="721.2" width="12.4" height="12.4" fill="#f8b55e" rx="4" stroke="#000" stroke-width="1.7"/><rect x="959" y="703.5" width="10.5" height="10" fill="#f7b66c"/><rect x="958.1" y="721.2" width="12.4" height="12.4" fill="#f8b55e" rx="4" stroke="#000" stroke-width="1.7"/><rect x="980.5" y="703.5" width="10.5" height="10" fill="#f7b66c"/><rect x="979.6" y="721.2" width="12.4" height="12.4" fill="#f8b55e" rx="4" stroke="#000" stroke-width="1.7"/><rect x="1001.7" y="702.5" width="12.4" height="12" fill="#f8b55e" rx="4.5" stroke="#000" stroke-width="1.7"/><rect x="1001.7" y="721.2" width="12.4" height="12.4" fill="#f8b55e" rx="4" stroke="#000" stroke-width="1.7"/><rect x="1022.8" y="702.5" width="12.4" height="12" fill="#f8b55e" rx="4.5" stroke="#000" stroke-width="1.7"/><rect x="1022.8" y="721.2" width="12.4" height="12.4" fill="#f8b55e" rx="4" stroke="#000" stroke-width="1.7"/><rect x="1045" y="703.5" width="10.5" height="10" fill="#f7b66c"/><rect x="1044" y="721.2" width="12.4" height="12.4" fill="#f8b55e" rx="4" stroke="#000" stroke-width="1.7"/><rect x="1065.8" y="703.5" width="10.5" height="10" fill="#f7b66c"/><rect x="1064.9" y="721.2" width="12.4" height="12.4" fill="#f8b55e" rx="4" stroke="#000" stroke-width="1.7"/><rect x="1088.6" y="703.5" width="10.5" height="10" fill="#f7b66c"/><rect x="1087.6" y="721.2" width="12.4" height="12.4" fill="#f8b55e" rx="4" stroke="#000" stroke-width="1.7"/><rect x="1112.2" y="703.5" width="10.5" height="10" fill="#f7b66c"/><rect x="1111.3" y="721.2" width="12.4" height="12.4" fill="#f8b55e" rx="4" stroke="#000" stroke-width="1.7"/><rect x="879.1" y="955" width="12.4" height="12.4" fill="#f8b55e" rx="3" stroke="#000" stroke-width="1.7"/><rect x="880.1" y="975.1" width="10.5" height="10" fill="#f7b66c"/><rect x="913.2" y="955" width="12.4" height="12.4" fill="#f8b55e" rx="3" stroke="#000" stroke-width="1.7"/><rect x="914.2" y="975.1" width="10.5" height="10" fill="#f7b66c"/><rect x="933.8" y="955" width="12.4" height="12.4" fill="#f8b55e" rx="3" stroke="#000" stroke-width="1.7"/><rect x="934.7" y="975.1" width="10.5" height="10" fill="#f7b66c"/><rect x="954.9" y="955" width="12.4" height="12.4" fill="#f8b55e" rx="3" stroke="#000" stroke-width="1.7"/><rect x="955.9" y="975.1" width="10.5" height="10" fill="#f7b66c"/><rect x="977" y="955" width="12.4" height="12.4" fill="#f8b55e" rx="3" stroke="#000" stroke-width="1.7"/><rect x="978" y="975.1" width="10.5" height="10" fill="#f7b66c"/><rect x="1000.1" y="955" width="12.4" height="12.4" fill="#f8b55e" rx="3" stroke="#000" stroke-width="1.7"/><rect x="1001.1" y="975.1" width="10.5" height="10" fill="#f7b66c"/><rect x="1053.8" y="955" width="12.4" height="12.4" fill="#f8b55e" rx="3" stroke="#000" stroke-width="1.7"/><rect x="1054.8" y="975.1" width="10.5" height="10" fill="#f7b66c"/><rect x="1076.5" y="955" width="12.4" height="12.4" fill="#f8b55e" rx="3" stroke="#000" stroke-width="1.7"/><rect x="1077.5" y="975.1" width="10.5" height="10" fill="#f7b66c"/><rect x="1101.2" y="955" width="12.4" height="12.4" fill="#f8b55e" rx="3" stroke="#000" stroke-width="1.7"/><rect x="1102.1" y="975.1" width="10.5" height="10" fill="#f7b66c"/><circle cx="858.5" cy="811.8" r="2.6" fill="#f8b55e" stroke="#000" stroke-width="1.8"/><circle cx="855.3" cy="894.8" r="2.6" fill="#f8b55e" stroke="#000" stroke-width="1.8"/><circle cx="1150.7" cy="821.2" r="2.4" fill="#f8b55e" stroke="#000" stroke-width="1.8"/><circle cx="1163.3" cy="830.7" r="2.4" fill="#f8b55e" stroke="#000" stroke-width="1.8"/><rect x="997.4" y="1001" width="9" height="12" fill="#f8b55e" rx="4" stroke="#000" stroke-width="1.7"/><rect x="1014.8" y="1001" width="9" height="12" fill="#f8b55e" rx="4" stroke="#000" stroke-width="1.7"/><circle cx="893.2" cy="1186.5" r="4.2" fill="#f8b55e"/><circle cx="909.1" cy="1186.5" r="3.8" fill="#f7b66c"/><circle cx="925" cy="1186.5" r="4.2" fill="#f8b55e"/><circle cx="940.8" cy="1186.5" r="3.8" fill="#f7b66c"/><circle cx="972.6" cy="1186.5" r="3.8" fill="#f7b66c"/><circle cx="988.5" cy="1186.5" r="3.8" fill="#f7b66c"/><circle cx="1004.4" cy="1186.5" r="4.2" fill="#f8b55e" stroke="#000" stroke-width="2.2"/><circle cx="1020.3" cy="1186.5" r="3.8" fill="#f7b66c"/><circle cx="1036.2" cy="1186.5" r="3.8" fill="#f7b66c"/><circle cx="1052" cy="1186.5" r="4.2" fill="#f8b55e" stroke="#000" stroke-width="2.2"/><circle cx="1067.9" cy="1186.5" r="3.8" fill="#f7b66c"/><circle cx="1083.8" cy="1186.5" r="3.8" fill="#f7b66c"/><circle cx="1099.7" cy="1186.5" r="3.8" fill="#f7b66c"/><circle cx="1115.6" cy="1186.5" r="4.2" fill="#f8b55e" stroke="#000" stroke-width="2.2"/><circle cx="877.3" cy="1202.7" r="4.2" fill="#f8b55e"/><circle cx="893.2" cy="1202.7" r="4.2" fill="#f8b55e"/><circle cx="909.1" cy="1202.7" r="4.2" fill="#f8b55e"/><circle cx="925" cy="1202.7" r="4.2" fill="#f8b55e"/><circle cx="940.8" cy="1202.7" r="4.2" fill="#f8b55e"/><circle cx="956.7" cy="1202.7" r="3.8" fill="#f7b66c"/><circle cx="972.6" cy="1202.7" r="4.2" fill="#f8b55e" stroke="#000" stroke-width="2.2"/><circle cx="988.5" cy="1202.7" r="4.2" fill="#f8b55e"/><circle cx="1004.4" cy="1202.7" r="3.8" fill="#f7b66c"/><circle cx="1020.3" cy="1202.7" r="4.2" fill="#f8b55e" stroke="#000" stroke-width="2.2"/><circle cx="1036.2" cy="1202.7" r="4.2" fill="#f8b55e" stroke="#000" stroke-width="2.2"/><circle cx="1052" cy="1202.7" r="3.8" fill="#f7b66c"/><circle cx="1067.9" cy="1202.7" r="4.2" fill="#f8b55e" stroke="#000" stroke-width="2.2"/><circle cx="1083.8" cy="1202.7" r="3.8" fill="#f7b66c"/><circle cx="1099.7" cy="1202.7" r="4.2" fill="#f8b55e" stroke="#000" stroke-width="2.2"/><circle cx="1115.6" cy="1202.7" r="4.2" fill="#f8b55e" stroke="#000" stroke-width="2.2"/><circle cx="877.3" cy="1219.2" r="4.2" fill="#f8b55e"/><circle cx="893.2" cy="1219.2" r="4.2" fill="#f8b55e"/><circle cx="909.1" cy="1219.2" r="4.2" fill="#f8b55e"/><circle cx="925" cy="1219.2" r="4.2" fill="#f8b55e"/><circle cx="940.8" cy="1219.2" r="4.2" fill="#f8b55e"/><circle cx="956.7" cy="1219.2" r="4.2" fill="#f8b55e" stroke="#000" stroke-width="2.2"/><circle cx="972.6" cy="1219.2" r="4.2" fill="#f8b55e"/><circle cx="988.5" cy="1219.2" r="4.2" fill="#f8b55e" stroke="#000" stroke-width="2.2"/><circle cx="1004.4" cy="1219.2" r="3.8" fill="#f7b66c"/><circle cx="1020.3" cy="1219.2" r="4.2" fill="#f8b55e" stroke="#000" stroke-width="2.2"/><circle cx="1036.2" cy="1219.2" r="4.2" fill="#f8b55e" stroke="#000" stroke-width="2.2"/><circle cx="1052" cy="1219.2" r="3.8" fill="#f7b66c"/><circle cx="1067.9" cy="1219.2" r="4.2" fill="#f8b55e" stroke="#000" stroke-width="2.2"/><circle cx="1083.8" cy="1219.2" r="3.8" fill="#f7b66c"/><circle cx="1099.7" cy="1219.2" r="4.2" fill="#f8b55e" stroke="#000" stroke-width="2.2"/><circle cx="1115.6" cy="1219.2" r="3.8" fill="#f7b66c"/><circle cx="877.3" cy="1278.8" r="4.2" fill="#f8b55e"/><circle cx="893.2" cy="1278.8" r="4.2" fill="#f8b55e"/><circle cx="909.1" cy="1278.8" r="4.2" fill="#f8b55e"/><circle cx="925" cy="1278.8" r="4.2" fill="#f8b55e"/><circle cx="940.8" cy="1278.8" r="3.8" fill="#f7b66c"/><circle cx="956.7" cy="1278.8" r="4.2" fill="#f8b55e"/><circle cx="972.6" cy="1278.8" r="3.8" fill="#f7b66c"/><circle cx="988.5" cy="1278.8" r="3.8" fill="#f7b66c"/><circle cx="1004.4" cy="1278.8" r="4.2" fill="#f8b55e" stroke="#000" stroke-width="2.2"/><circle cx="1020.3" cy="1278.8" r="4.2" fill="#f8b55e" stroke="#000" stroke-width="2.2"/><circle cx="1036.2" cy="1278.8" r="4.2" fill="#f8b55e" stroke="#000" stroke-width="2.2"/><circle cx="1052" cy="1278.8" r="3.8" fill="#f7b66c"/><circle cx="1067.9" cy="1278.8" r="3.8" fill="#f7b66c"/><circle cx="1083.8" cy="1278.8" r="4.2" fill="#f8b55e"/><circle cx="1099.7" cy="1278.8" r="4.2" fill="#f8b55e"/><circle cx="1115.6" cy="1278.8" r="3.8" fill="#f7b66c"/><circle cx="877.3" cy="1296.2" r="4.2" fill="#f8b55e"/><circle cx="893.2" cy="1296.2" r="4.2" fill="#f8b55e"/><circle cx="909.1" cy="1296.2" r="4.2" fill="#f8b55e"/><circle cx="925" cy="1296.2" r="4.2" fill="#f8b55e"/><circle cx="940.8" cy="1296.2" r="3.8" fill="#f7b66c"/><circle cx="956.7" cy="1296.2" r="4.2" fill="#f8b55e" stroke="#000" stroke-width="2.2"/><circle cx="972.6" cy="1296.2" r="4.2" fill="#f8b55e"/><circle cx="988.5" cy="1296.2" r="3.8" fill="#f7b66c"/><circle cx="1004.4" cy="1296.2" r="4.2" fill="#f8b55e" stroke="#000" stroke-width="2.2"/><circle cx="1020.3" cy="1296.2" r="4.2" fill="#f8b55e" stroke="#000" stroke-width="2.2"/><circle cx="1036.2" cy="1296.2" r="3.8" fill="#f7b66c"/><circle cx="1052" cy="1296.2" r="4.2" fill="#f8b55e" stroke="#000" stroke-width="2.2"/><circle cx="1067.9" cy="1296.2" r="3.8" fill="#f7b66c"/><circle cx="1083.8" cy="1296.2" r="4.2" fill="#f8b55e"/><circle cx="1099.7" cy="1296.2" r="4.2" fill="#f8b55e"/><circle cx="1115.6" cy="1296.2" r="4.2" fill="#f8b55e" stroke="#000" stroke-width="2.2"/><circle cx="877.3" cy="1312.3" r="3.8" fill="#f7b66c"/><circle cx="893.2" cy="1312.3" r="3.8" fill="#f7b66c"/><circle cx="909.1" cy="1312.3" r="3.8" fill="#f7b66c"/><circle cx="925" cy="1312.3" r="3.8" fill="#f7b66c"/><circle cx="940.8" cy="1312.3" r="4.2" fill="#f8b55e" stroke="#000" stroke-width="2.2"/><circle cx="956.7" cy="1312.3" r="3.8" fill="#f7b66c"/><circle cx="972.6" cy="1312.3" r="4.2" fill="#f8b55e"/><circle cx="988.5" cy="1312.3" r="4.2" fill="#f8b55e"/><circle cx="1004.4" cy="1312.3" r="4.2" fill="#f8b55e" stroke="#000" stroke-width="2.2"/><circle cx="1020.3" cy="1312.3" r="3.8" fill="#f7b66c"/><circle cx="1036.2" cy="1312.3" r="4.2" fill="#f8b55e" stroke="#000" stroke-width="2.2"/><circle cx="1052" cy="1312.3" r="4.2" fill="#f8b55e" stroke="#000" stroke-width="2.2"/><circle cx="1067.9" cy="1312.3" r="3.8" fill="#f7b66c"/><circle cx="1083.8" cy="1312.3" r="4.2" fill="#f8b55e" stroke="#000" stroke-width="2.2"/><circle cx="1099.7" cy="1312.3" r="4.2" fill="#f8b55e" stroke="#000" stroke-width="2.2"/><circle cx="1115.6" cy="1312.3" r="3.8" fill="#f7b66c"/><circle cx="885.4" cy="1194.2" r="2.3" fill="#f8b55e"/><circle cx="901.3" cy="1194.2" r="2.3" fill="#f8b55e"/><circle cx="917.2" cy="1194.2" r="2.3" fill="#f8b55e"/><circle cx="933" cy="1194.2" r="2.3" fill="#f8b55e"/><circle cx="948.9" cy="1194.2" r="2.3" fill="#f8b55e"/><circle cx="885.4" cy="1210.8" r="2.3" fill="#f8b55e"/><circle cx="901.3" cy="1210.8" r="2.3" fill="#f8b55e"/><circle cx="917.2" cy="1210.8" r="2.3" fill="#f8b55e"/><circle cx="933" cy="1210.8" r="2.3" fill="#f8b55e"/><circle cx="948.9" cy="1210.8" r="2.3" fill="#f8b55e"/><circle cx="885.4" cy="1287.7" r="2.3" fill="#f8b55e"/><circle cx="901.3" cy="1287.7" r="2.3" fill="#f8b55e"/><circle cx="917.2" cy="1287.7" r="2.3" fill="#f8b55e"/><circle cx="933" cy="1287.7" r="2.3" fill="#f8b55e"/><rect x="890.1" y="1110.4" width="10.5" height="10" fill="#f7b66c"/><rect x="889.2" y="1128.4" width="12.4" height="12.4" fill="#f8b55e" rx="3" stroke="#000" stroke-width="1.7"/><rect x="913.2" y="1110.4" width="10.5" height="10" fill="#f7b66c"/><rect x="912.3" y="1128.4" width="12.4" height="12.4" fill="#f8b55e" rx="3" stroke="#000" stroke-width="1.7"/><rect x="937.4" y="1110.4" width="10.5" height="10" fill="#f7b66c"/><rect x="936.5" y="1128.4" width="12.4" height="12.4" fill="#f8b55e" rx="3" stroke="#000" stroke-width="1.7"/><rect x="1022.1" y="1109.6" width="10.5" height="10" fill="#f7b66c"/><rect x="1021.1" y="1128.4" width="12.4" height="12.4" fill="#f8b55e" rx="3" stroke="#000" stroke-width="1.7"/><rect x="1045.1" y="1129.6" width="10.5" height="10" fill="#f7b66c"/><rect x="1062.3" y="1128.4" width="12.4" height="12.4" fill="#f8b55e" rx="3" stroke="#000" stroke-width="1.7"/><rect x="1083.6" y="1129.6" width="10.5" height="10" fill="#f7b66c"/><rect x="1100.7" y="1128.4" width="12.4" height="12.4" fill="#f8b55e" rx="3" stroke="#000" stroke-width="1.7"/><rect x="1121.1" y="1128.4" width="12.4" height="12.4" fill="#f8b55e" rx="3" stroke="#000" stroke-width="1.7"/><rect x="1141.3" y="1129.6" width="10.5" height="10" fill="#f7b66c"/><circle cx="955.4" cy="1156.9" r="2.4" fill="#f8b55e" stroke="#000" stroke-width="1.8"/><rect x="819" y="1189.2" width="10.5" height="10" fill="#f7b66c"/><rect x="836.5" y="1188" width="12.4" height="12.4" fill="#f8b55e" rx="3" stroke="#000" stroke-width="1.7"/><rect x="818" y="1208.4" width="12.4" height="12.4" fill="#f8b55e" rx="3" stroke="#000" stroke-width="1.7"/><rect x="836.5" y="1208.4" width="12.4" height="12.4" fill="#f8b55e" rx="3" stroke="#000" stroke-width="1.7"/><circle cx="974.6" cy="1265.4" r="2.2" fill="#f8b55e" stroke="#000" stroke-width="1.8"/><circle cx="990" cy="1265.4" r="2.2" fill="#f8b55e" stroke="#000" stroke-width="1.8"/><circle cx="1052.3" cy="1265.4" r="2.2" fill="#f8b55e" stroke="#000" stroke-width="1.8"/><circle cx="1020.8" cy="1237.7" r="2.2" fill="#f8b55e" stroke="#000" stroke-width="1.8"/><circle cx="1036.2" cy="1237.7" r="2.2" fill="#f8b55e" stroke="#000" stroke-width="1.8"/><rect x="858.8" y="1360.8" width="12.4" height="13" fill="#f8b55e" rx="3.5" stroke="#000" stroke-width="1.7"/><rect x="859.8" y="1379.6" width="10.5" height="10" fill="#f7b66c"/><rect x="881.9" y="1360.8" width="12.4" height="13" fill="#f8b55e" rx="3.5" stroke="#000" stroke-width="1.7"/><rect x="882.8" y="1379.6" width="10.5" height="10" fill="#f7b66c"/><rect x="905.7" y="1360.8" width="12.4" height="13" fill="#f8b55e" rx="3.5" stroke="#000" stroke-width="1.7"/><rect x="906.7" y="1379.6" width="10.5" height="10" fill="#f7b66c"/><rect x="928.8" y="1360.8" width="12.4" height="13" fill="#f8b55e" rx="3.5" stroke="#000" stroke-width="1.7"/><rect x="929.8" y="1379.6" width="10.5" height="10" fill="#f7b66c"/><rect x="951.9" y="1360.8" width="12.4" height="13" fill="#f8b55e" rx="3.5" stroke="#000" stroke-width="1.7"/><rect x="952.8" y="1379.6" width="10.5" height="10" fill="#f7b66c"/><rect x="975" y="1360.8" width="12.4" height="13" fill="#f8b55e" rx="3.5" stroke="#000" stroke-width="1.7"/><rect x="975.9" y="1379.6" width="10.5" height="10" fill="#f7b66c"/><rect x="1005.7" y="1360.8" width="12.4" height="13" fill="#f8b55e" rx="3.5" stroke="#000" stroke-width="1.7"/><rect x="1006.7" y="1379.6" width="10.5" height="10" fill="#f7b66c"/><rect x="1044.2" y="1360.8" width="12.4" height="13" fill="#f8b55e" rx="3.5" stroke="#000" stroke-width="1.7"/><rect x="1045.1" y="1379.6" width="10.5" height="10" fill="#f7b66c"/><rect x="1070.3" y="1360.8" width="12.4" height="13" fill="#f8b55e" rx="3.5" stroke="#000" stroke-width="1.7"/><rect x="1071.3" y="1379.6" width="10.5" height="10" fill="#f7b66c"/><rect x="928.8" y="1378.4" width="12.4" height="12.4" fill="#f8b55e" rx="4" stroke="#000" stroke-width="1.7"/><rect x="1145" y="1297.6" width="12.4" height="12.4" fill="#f8b55e" rx="3" stroke="#000" stroke-width="1.7"/><rect x="1164.4" y="1298.8" width="10.5" height="10" fill="#f7b66c"/><rect x="1177.9" y="698" width="18.8" height="32.1" fill="#f7b66c"/><rect x="1259.6" y="697.1" width="22.1" height="34.3" fill="#f8b55e" stroke="#000" stroke-width="1.7"/><circle cx="1269.8" cy="783.8" r="8.2" fill="#f8b55e" stroke="#000" stroke-width="1.7"/><rect x="1248" y="755.2" width="11.5" height="12.5" fill="#f8b55e" rx="4" stroke="#000" stroke-width="1.7"/><rect x="1266.2" y="755.2" width="11.5" height="12.5" fill="#f8b55e" rx="4" stroke="#000" stroke-width="1.7"/><rect x="1304" y="696.1" width="12" height="11" fill="#f8b55e" rx="4" stroke="#000" stroke-width="1.7"/><rect x="1304.9" y="713.5" width="12" height="12" fill="#f8b55e" rx="5" stroke="#000" stroke-width="1.7"/><circle cx="1331.4" cy="701.6" r="6" fill="#f8b55e" stroke="#000" stroke-width="1.7"/><rect x="1324.9" y="715" width="9.5" height="9" fill="#f7b66c"/><rect x="1350.2" y="682" width="25" height="29.5" fill="#f8b55e" stroke="#000" stroke-width="1.7"/><rect x="1384.6" y="682.9" width="23.6" height="27.1" fill="#f7b66c"/><rect x="1350.7" y="727.5" width="23.6" height="27.7" fill="#f7b66c"/><rect x="1383.2" y="726.6" width="25.9" height="29.5" fill="#f8b55e" stroke="#000" stroke-width="1.7"/><rect x="1373" y="771.1" width="10.5" height="10" fill="#f7b66c"/><rect x="1390.1" y="769.7" width="12" height="12" fill="#f8b55e" rx="5" stroke="#000" stroke-width="1.7"/><rect x="1411.9" y="771.1" width="10.5" height="10" fill="#f7b66c"/><rect x="1372.2" y="789" width="12" height="12" fill="#f8b55e" rx="4" stroke="#000" stroke-width="1.7"/><rect x="1390.1" y="789" width="12" height="12" fill="#f8b55e" rx="5" stroke="#000" stroke-width="1.7"/><rect x="1411.1" y="789" width="12" height="11" fill="#f8b55e" rx="5" stroke="#000" stroke-width="1.7"/><circle cx="1449.6" cy="780.2" r="2.6" fill="#f8b55e" stroke="#000" stroke-width="1.8"/><circle cx="1302.9" cy="803.4" r="2.6" fill="#f8b55e" stroke="#000" stroke-width="1.8"/><circle cx="1311.8" cy="803.4" r="2.6" fill="#f8b55e" stroke="#000" stroke-width="1.8"/><circle cx="1428.8" cy="866.8" r="2.6" fill="#f8b55e" stroke="#000" stroke-width="1.8"/><rect x="1702.8" y="773.3" width="10.9" height="10.4" fill="#f7b66c"/><rect x="1723.6" y="772.3" width="12.4" height="12.4" fill="#f8b55e" rx="4" stroke="#000" stroke-width="1.7"/><rect x="1744" y="772.3" width="12.4" height="12.4" fill="#f8b55e" rx="4" stroke="#000" stroke-width="1.7"/><rect x="1764" y="772.6" width="10.9" height="10.4" fill="#f7b66c"/><rect x="1702.1" y="790.9" width="12.4" height="12.4" fill="#f8b55e" rx="4" stroke="#000" stroke-width="1.7"/><rect x="1723.6" y="790.9" width="12.4" height="12.4" fill="#f8b55e" rx="4" stroke="#000" stroke-width="1.7"/><rect x="1744" y="790.9" width="12.4" height="12.4" fill="#f8b55e" rx="4" stroke="#000" stroke-width="1.7"/><rect x="1764" y="791.9" width="10.9" height="10.4" fill="#f7b66c"/><circle cx="1691.6" cy="796.3" r="2.6" fill="#f8b55e" stroke="#000" stroke-width="1.8"/><rect x="1700.1" y="816.3" width="23" height="21.5" fill="#f8b55e" stroke="#000" stroke-width="1.7"/><rect x="1749.8" y="816.3" width="22.2" height="21.5" fill="#f8b55e" stroke="#000" stroke-width="1.7"/><circle cx="1733.5" cy="832.3" r="2.2" fill="#f8b55e" stroke="#000" stroke-width="1.8"/><circle cx="1733.5" cy="853.8" r="2.4" fill="#f8b55e" stroke="#000" stroke-width="1.8"/><rect x="1673.2" y="881.7" width="12.4" height="12.4" fill="#f8b55e" rx="4" stroke="#000" stroke-width="1.7"/><rect x="1673.2" y="900.2" width="12.4" height="12.4" fill="#f8b55e" rx="4" stroke="#000" stroke-width="1.7"/><rect x="1693.9" y="881.7" width="12.4" height="12.4" fill="#f8b55e" rx="4" stroke="#000" stroke-width="1.7"/><rect x="1693.9" y="900.2" width="12.4" height="12.4" fill="#f8b55e" rx="4" stroke="#000" stroke-width="1.7"/><rect x="1713.9" y="881.7" width="12.4" height="12.4" fill="#f8b55e" rx="4" stroke="#000" stroke-width="1.7"/><rect x="1714.7" y="901.2" width="10.9" height="10.4" fill="#f7b66c"/><rect x="1735.4" y="881.7" width="12.4" height="12.4" fill="#f8b55e" rx="4" stroke="#000" stroke-width="1.7"/><rect x="1735.4" y="900.2" width="12.4" height="12.4" fill="#f8b55e" rx="4" stroke="#000" stroke-width="1.7"/><rect x="1761.4" y="881.7" width="12.4" height="12.4" fill="#f8b55e" rx="4" stroke="#000" stroke-width="1.7"/><rect x="1761.4" y="900.2" width="12.4" height="12.4" fill="#f8b55e" rx="4" stroke="#000" stroke-width="1.7"/><rect x="1788.1" y="882.7" width="10.9" height="10.4" fill="#f7b66c"/><rect x="1787.3" y="900.2" width="12.4" height="12.4" fill="#f8b55e" rx="4" stroke="#000" stroke-width="1.7"/><rect x="1814" y="882.7" width="10.9" height="10.4" fill="#f7b66c"/><rect x="1813.3" y="900.2" width="12.4" height="12.4" fill="#f8b55e" rx="4" stroke="#000" stroke-width="1.7"/><circle cx="1728.7" cy="934.2" r="8" fill="#f8b55e" stroke="#000" stroke-width="1.7"/><circle cx="1684.2" cy="963.9" r="8" fill="#f8b55e" stroke="#000" stroke-width="1.7"/><circle cx="1728.7" cy="972" r="8" fill="#f8b55e" stroke="#000" stroke-width="1.7"/><circle cx="1671.2" cy="995.4" r="8" fill="#f8b55e" stroke="#000" stroke-width="1.7"/><rect x="1761.4" y="936.2" width="12.4" height="12.4" fill="#f8b55e" rx="4" stroke="#000" stroke-width="1.7"/><rect x="1784.4" y="937.2" width="10.9" height="10.4" fill="#f7b66c"/><rect x="1761.4" y="954.7" width="12.4" height="12.4" fill="#f8b55e" rx="4" stroke="#000" stroke-width="1.7"/><rect x="1783.6" y="954.7" width="12.4" height="12.4" fill="#f8b55e" rx="4" stroke="#000" stroke-width="1.7"/><circle cx="1636" cy="943.5" r="2.4" fill="#f8b55e" stroke="#000" stroke-width="1.8"/><circle cx="1649" cy="934.2" r="2.4" fill="#f8b55e" stroke="#000" stroke-width="1.8"/><circle cx="1639.7" cy="969.5" r="2.4" fill="#f8b55e" stroke="#000" stroke-width="1.8"/><rect x="1634.3" y="1010.6" width="10.9" height="10.4" fill="#f7b66c"/><rect x="1633.5" y="1028.1" width="12.4" height="12.4" fill="#f8b55e" rx="4" stroke="#000" stroke-width="1.7"/><rect x="1654.6" y="1010.6" width="10.9" height="10.4" fill="#f7b66c"/><rect x="1653.9" y="1028.1" width="12.4" height="12.4" fill="#f8b55e" rx="4" stroke="#000" stroke-width="1.7"/><rect x="1675" y="1010.6" width="10.9" height="10.4" fill="#f7b66c"/><rect x="1674.3" y="1028.1" width="12.4" height="12.4" fill="#f8b55e" rx="4" stroke="#000" stroke-width="1.7"/><rect x="1696.5" y="1010.6" width="10.9" height="10.4" fill="#f7b66c"/><rect x="1695.8" y="1028.1" width="12.4" height="12.4" fill="#f8b55e" rx="4" stroke="#000" stroke-width="1.7"/><rect x="1774.4" y="1005.9" width="12.4" height="12.4" fill="#f8b55e" rx="4" stroke="#000" stroke-width="1.7"/><rect x="1795.5" y="1006.9" width="10.9" height="10.4" fill="#f7b66c"/><rect x="1817" y="1005.9" width="12.4" height="12.4" fill="#f8b55e" rx="4" stroke="#000" stroke-width="1.7"/><rect x="1839.3" y="1006.9" width="10.9" height="10.4" fill="#f7b66c"/><rect x="1774.4" y="1024.4" width="12.4" height="12.4" fill="#f8b55e" rx="4" stroke="#000" stroke-width="1.7"/><rect x="1794.8" y="1024.4" width="12.4" height="12.4" fill="#f8b55e" rx="4" stroke="#000" stroke-width="1.7"/><rect x="1817" y="1024.4" width="12.4" height="12.4" fill="#f8b55e" rx="4" stroke="#000" stroke-width="1.7"/><rect x="1838.5" y="1024.4" width="12.4" height="12.4" fill="#f8b55e" rx="4" stroke="#000" stroke-width="1.7"/><circle cx="1637.8" cy="1075.1" r="8.6" fill="#f8b55e" stroke="#000" stroke-width="1.7"/><circle cx="1643.4" cy="1114" r="8.6" fill="#f8b55e" stroke="#000" stroke-width="1.7"/><circle cx="1637.8" cy="1138.1" r="8.6" fill="#f8b55e" stroke="#000" stroke-width="1.7"/><circle cx="1684.2" cy="1118.9" r="8" fill="#f8b55e" stroke="#000" stroke-width="1.7"/><circle cx="1723.1" cy="1123.3" r="8" fill="#f8b55e" stroke="#000" stroke-width="1.7"/><rect x="1653.9" y="1061.5" width="12.4" height="12.4" fill="#f8b55e" rx="4" stroke="#000" stroke-width="1.7"/><rect x="1674.3" y="1061.5" width="12.4" height="12.4" fill="#f8b55e" rx="4" stroke="#000" stroke-width="1.7"/><rect x="1693.9" y="1061.5" width="12.4" height="12.4" fill="#f8b55e" rx="4" stroke="#000" stroke-width="1.7"/><rect x="1653.9" y="1080.8" width="12.4" height="12.4" fill="#f8b55e" rx="4" stroke="#000" stroke-width="1.7"/><rect x="1674.3" y="1080.8" width="12.4" height="12.4" fill="#f8b55e" rx="4" stroke="#000" stroke-width="1.7"/><rect x="1694.7" y="1081.8" width="10.9" height="10.4" fill="#f7b66c"/><rect x="1731.7" y="1060.8" width="12.4" height="12.4" fill="#f8b55e" rx="4" stroke="#000" stroke-width="1.7"/><rect x="1754.7" y="1061.8" width="10.9" height="10.4" fill="#f7b66c"/><rect x="1731.7" y="1080" width="12.4" height="12.4" fill="#f8b55e" rx="4" stroke="#000" stroke-width="1.7"/><rect x="1754" y="1080" width="12.4" height="12.4" fill="#f8b55e" rx="4" stroke="#000" stroke-width="1.7"/><rect x="1817" y="1060.8" width="12.4" height="12.4" fill="#f8b55e" rx="4" stroke="#000" stroke-width="1.7"/><rect x="1839.3" y="1060.6" width="10.9" height="10.4" fill="#f7b66c"/><rect x="1817" y="1079.3" width="12.4" height="12.4" fill="#f8b55e" rx="4" stroke="#000" stroke-width="1.7"/><rect x="1838.5" y="1079.3" width="12.4" height="12.4" fill="#f8b55e" rx="4" stroke="#000" stroke-width="1.7"/><circle cx="1807.6" cy="1056.6" r="2.2" fill="#f8b55e" stroke="#000" stroke-width="1.8"/><circle cx="1726.1" cy="1099.2" r="2.2" fill="#f8b55e" stroke="#000" stroke-width="1.8"/><circle cx="1782.4" cy="1105.5" r="2.2" fill="#f8b55e" stroke="#000" stroke-width="1.8"/><rect x="1660.6" y="1142.3" width="12.4" height="12.4" fill="#f8b55e" rx="4" stroke="#000" stroke-width="1.7"/><rect x="1660.6" y="1161.6" width="12.4" height="12.4" fill="#f8b55e" rx="4" stroke="#000" stroke-width="1.7"/><rect x="1681.7" y="1142.3" width="12.4" height="12.4" fill="#f8b55e" rx="4" stroke="#000" stroke-width="1.7"/><rect x="1681.7" y="1161.6" width="12.4" height="12.4" fill="#f8b55e" rx="4" stroke="#000" stroke-width="1.7"/><rect x="1703.9" y="1142.3" width="12.4" height="12.4" fill="#f8b55e" rx="4" stroke="#000" stroke-width="1.7"/><rect x="1703.9" y="1161.6" width="12.4" height="12.4" fill="#f8b55e" rx="4" stroke="#000" stroke-width="1.7"/><rect x="1725.1" y="1142.3" width="12.4" height="12.4" fill="#f8b55e" rx="4" stroke="#000" stroke-width="1.7"/><rect x="1725.1" y="1161.6" width="12.4" height="12.4" fill="#f8b55e" rx="4" stroke="#000" stroke-width="1.7"/><rect x="1746.6" y="1143.3" width="10.9" height="10.4" fill="#f7b66c"/><rect x="1745.8" y="1161.6" width="12.4" height="12.4" fill="#f8b55e" rx="4" stroke="#000" stroke-width="1.7"/><rect x="1767" y="1142.3" width="12.4" height="12.4" fill="#f8b55e" rx="4" stroke="#000" stroke-width="1.7"/><rect x="1767.7" y="1162.6" width="10.9" height="10.4" fill="#f7b66c"/><rect x="1787.3" y="1142.3" width="12.4" height="12.4" fill="#f8b55e" rx="4" stroke="#000" stroke-width="1.7"/><rect x="1787.3" y="1161.6" width="12.4" height="12.4" fill="#f8b55e" rx="4" stroke="#000" stroke-width="1.7"/><rect x="1832.9" y="1109.7" width="12.4" height="12.4" fill="#f8b55e" rx="4" stroke="#000" stroke-width="1.7"/><rect x="1851.1" y="1110.7" width="10.9" height="10.4" fill="#f7b66c"/><rect x="1832.9" y="1131.2" width="12.4" height="12.4" fill="#f8b55e" rx="4" stroke="#000" stroke-width="1.7"/><rect x="1850.4" y="1131.2" width="12.4" height="12.4" fill="#f8b55e" rx="5" stroke="#000" stroke-width="1.7"/><rect x="1832.9" y="1152.3" width="12.4" height="12.4" fill="#f8b55e" rx="4" stroke="#000" stroke-width="1.7"/><rect x="1851.1" y="1153.3" width="10.9" height="10.4" fill="#f7b66c"/><rect x="1832.9" y="1172.7" width="12.4" height="12.4" fill="#f8b55e" rx="4" stroke="#000" stroke-width="1.7"/><rect x="1850.4" y="1172.7" width="12.4" height="12.4" fill="#f8b55e" rx="5" stroke="#000" stroke-width="1.7"/><rect x="1660.6" y="1204.2" width="12.4" height="12.4" fill="#f8b55e" rx="4" stroke="#000" stroke-width="1.7"/><rect x="1660.6" y="1221.6" width="12.4" height="12.4" fill="#f8b55e" rx="4" stroke="#000" stroke-width="1.7"/><rect x="1702.1" y="1204.2" width="12.4" height="12.4" fill="#f8b55e" rx="4" stroke="#000" stroke-width="1.7"/><rect x="1702.1" y="1222.8" width="12.4" height="12.4" fill="#f8b55e" rx="4" stroke="#000" stroke-width="1.7"/><circle cx="1794.3" cy="1210.4" r="2.2" fill="#f8b55e" stroke="#000" stroke-width="1.8"/><circle cx="1621.2" cy="1234.5" r="2.4" fill="#f8b55e" stroke="#000" stroke-width="1.8"/><rect x="1253" y="1225.8" width="10.9" height="10.4" fill="#f7b66c"/><rect x="1253" y="1243.9" width="11" height="11" fill="#f8b55e" rx="1" stroke="#000" stroke-width="1.7"/><circle cx="1287.1" cy="1234.8" r="8" fill="#f8b55e" stroke="#000" stroke-width="1.7"/><circle cx="1334.3" cy="1237.3" r="8" fill="#f8b55e" stroke="#000" stroke-width="1.7"/><rect x="1272.5" y="1249.8" width="12" height="12" fill="#f8b55e" rx="1" stroke="#000" stroke-width="1.7"/><rect x="1291.6" y="1249.8" width="12" height="12" fill="#f8b55e" rx="1" stroke="#000" stroke-width="1.7"/><rect x="1312.3" y="1249.8" width="12" height="12" fill="#f8b55e" rx="1" stroke="#000" stroke-width="1.7"/><rect x="1331.4" y="1249.8" width="12" height="12" fill="#f8b55e" rx="1" stroke="#000" stroke-width="1.7"/><circle cx="1249.2" cy="1294" r="12.7" fill="#f8b55e" stroke="#000" stroke-width="1.7"/><circle cx="1249.2" cy="1294" r="6.6" fill="#404040"/><circle cx="1299.9" cy="1294" r="12.7" fill="#f8b55e" stroke="#000" stroke-width="1.7"/><circle cx="1299.9" cy="1294" r="6.6" fill="#404040"/><rect x="1331.2" y="1269.3" width="12.4" height="12.4" fill="#f8b55e" rx="1" stroke="#000" stroke-width="1.7"/><rect x="1331.2" y="1287.8" width="12.4" height="12.4" fill="#f8b55e" rx="1" stroke="#000" stroke-width="1.7"/><circle cx="1320.9" cy="1301" r="2.2" fill="#f8b55e" stroke="#000" stroke-width="1.8"/><circle cx="1351.8" cy="1300.4" r="2.2" fill="#f8b55e" stroke="#000" stroke-width="1.8"/><circle cx="1269" cy="1270.1" r="2.2" fill="#f8b55e" stroke="#000" stroke-width="1.8"/><circle cx="1339" cy="1220.8" r="2.2" fill="#f8b55e" stroke="#000" stroke-width="1.8"/><rect x="1346.5" y="1313.3" width="12.4" height="12.4" fill="#f8b55e" rx="4" stroke="#000" stroke-width="1.7"/><rect x="1346.5" y="1330.5" width="12.4" height="12.4" fill="#f8b55e" rx="4" stroke="#000" stroke-width="1.7"/><rect x="1368.8" y="1313.3" width="12.4" height="12.4" fill="#f8b55e" rx="4" stroke="#000" stroke-width="1.7"/><rect x="1369.6" y="1331.5" width="10.9" height="10.4" fill="#f7b66c"/><rect x="1388.6" y="1313.3" width="12.4" height="12.4" fill="#f8b55e" rx="4" stroke="#000" stroke-width="1.7"/><rect x="1389.3" y="1331.5" width="10.9" height="10.4" fill="#f7b66c"/><circle cx="1436.8" cy="1295.3" r="2.4" fill="#f8b55e" stroke="#000" stroke-width="1.8"/><circle cx="1425" cy="1316.3" r="2.2" fill="#f8b55e" stroke="#000" stroke-width="1.8"/><circle cx="1334.3" cy="1353.6" r="2.4" fill="#f8b55e" stroke="#000" stroke-width="1.8"/><circle cx="1205.3" cy="1301" r="8.4" fill="#f8b55e" stroke="#000" stroke-width="1.7"/><circle cx="1195.7" cy="1320.1" r="8.4" fill="#f8b55e" stroke="#000" stroke-width="1.7"/><circle cx="1221.2" cy="1324.9" r="8.4" fill="#f8b55e" stroke="#000" stroke-width="1.7"/><circle cx="1200.5" cy="1350.4" r="8.4" fill="#f8b55e" stroke="#000" stroke-width="1.7"/><circle cx="1233.9" cy="1345.6" r="8.4" fill="#f8b55e" stroke="#000" stroke-width="1.7"/><circle cx="1195.7" cy="1338.3" r="2.2" fill="#f8b55e" stroke="#000" stroke-width="1.8"/><circle cx="1212.6" cy="1338.3" r="2.2" fill="#f8b55e" stroke="#000" stroke-width="1.8"/><circle cx="1194.1" cy="1369.5" r="2.2" fill="#f8b55e" stroke="#000" stroke-width="1.8"/><rect x="1199.1" y="1364.9" width="12.4" height="12.4" fill="#f8b55e" rx="4" stroke="#000" stroke-width="1.7"/><rect x="1199.8" y="1385" width="10.9" height="10.4" fill="#f7b66c"/><rect x="1345.6" y="1376" width="12.4" height="12.4" fill="#f8b55e" rx="4" stroke="#000" stroke-width="1.7"/><rect x="1346.3" y="1395.2" width="10.9" height="10.4" fill="#f7b66c"/><rect x="1366.3" y="1376" width="12.4" height="12.4" fill="#f8b55e" rx="4" stroke="#000" stroke-width="1.7"/><rect x="1366.3" y="1394.2" width="12.4" height="12.4" fill="#f8b55e" rx="4" stroke="#000" stroke-width="1.7"/><rect x="1388.6" y="1376" width="12.4" height="12.4" fill="#f8b55e" rx="4" stroke="#000" stroke-width="1.7"/><rect x="1388.6" y="1394.2" width="12.4" height="12.4" fill="#f8b55e" rx="4" stroke="#000" stroke-width="1.7"/><rect x="1410.2" y="1376" width="12.4" height="12.4" fill="#f8b55e" rx="4" stroke="#000" stroke-width="1.7"/><rect x="1411" y="1395.2" width="10.9" height="10.4" fill="#f7b66c"/><circle cx="1366.1" cy="1419.5" r="2.4" fill="#f8b55e" stroke="#000" stroke-width="1.8"/><rect x="1453.8" y="1326.7" width="12.4" height="12.4" fill="#f8b55e" rx="4" stroke="#000" stroke-width="1.7"/><rect x="1453.8" y="1345.8" width="12.4" height="12.4" fill="#f8b55e" rx="4" stroke="#000" stroke-width="1.7"/><circle cx="1460" cy="1370.1" r="8.2" fill="#f8b55e" stroke="#000" stroke-width="1.7"/><rect x="1453.8" y="1382.4" width="12.4" height="12.4" fill="#f8b55e" rx="1" stroke="#000" stroke-width="1.7"/><rect x="1454.6" y="1401.5" width="10.9" height="10.4" fill="#f7b66c"/><rect x="1484.1" y="1251.2" width="12.4" height="12.4" fill="#f8b55e" rx="4.5" stroke="#000" stroke-width="1.7"/><rect x="1484.8" y="1269.7" width="10.9" height="10.4" fill="#f7b66c"/><circle cx="1474.4" cy="1257.4" r="2.4" fill="#f8b55e" stroke="#000" stroke-width="1.8"/><rect x="1543" y="1299.6" width="12.4" height="12.4" fill="#f8b55e" rx="4.5" stroke="#000" stroke-width="1.7"/><rect x="1543" y="1317.1" width="12.4" height="12.4" fill="#f8b55e" rx="2" stroke="#000" stroke-width="1.7"/><rect x="1578" y="1285.9" width="12.4" height="12.4" fill="#f8b55e" rx="4.5" stroke="#000" stroke-width="1.7"/><rect x="1578" y="1304.4" width="12.4" height="12.4" fill="#f8b55e" rx="2" stroke="#000" stroke-width="1.7"/><circle cx="1529.1" cy="1282.5" r="2.4" fill="#f8b55e" stroke="#000" stroke-width="1.8"/><circle cx="1478.2" cy="1423" r="2.4" fill="#f8b55e" stroke="#000" stroke-width="1.8"/><circle cx="1622.5" cy="1235.7" r="2.4" fill="#f8b55e" stroke="#000" stroke-width="1.8"/><circle cx="1683" cy="1257.4" r="8.2" fill="#f8b55e" stroke="#000" stroke-width="1.7"/><circle cx="1718" cy="1257.4" r="8.2" fill="#f8b55e" stroke="#000" stroke-width="1.7"/><rect x="1660.8" y="1279.5" width="12.4" height="12.4" fill="#f8b55e" rx="4.5" stroke="#000" stroke-width="1.7"/><rect x="1660.8" y="1298" width="12.4" height="12.4" fill="#f8b55e" rx="4.5" stroke="#000" stroke-width="1.7"/><rect x="1680.9" y="1279.5" width="12.4" height="12.4" fill="#f8b55e" rx="4.5" stroke="#000" stroke-width="1.7"/><rect x="1680.9" y="1298" width="12.4" height="12.4" fill="#f8b55e" rx="4.5" stroke="#000" stroke-width="1.7"/><rect x="1700" y="1279.5" width="12.4" height="12.4" fill="#f8b55e" rx="4.5" stroke="#000" stroke-width="1.7"/><rect x="1700" y="1298" width="12.4" height="12.4" fill="#f8b55e" rx="4.5" stroke="#000" stroke-width="1.7"/><rect x="1719.1" y="1279.5" width="12.4" height="12.4" fill="#f8b55e" rx="4.5" stroke="#000" stroke-width="1.7"/><rect x="1719.1" y="1298" width="12.4" height="12.4" fill="#f8b55e" rx="4.5" stroke="#000" stroke-width="1.7"/><rect x="1739.6" y="1280.5" width="10.9" height="10.4" fill="#f7b66c"/><rect x="1738.9" y="1298" width="12.4" height="12.4" fill="#f8b55e" rx="4.5" stroke="#000" stroke-width="1.7"/><rect x="1759.6" y="1279.5" width="12.4" height="12.4" fill="#f8b55e" rx="4.5" stroke="#000" stroke-width="1.7"/><rect x="1759.6" y="1298" width="12.4" height="12.4" fill="#f8b55e" rx="4.5" stroke="#000" stroke-width="1.7"/><rect x="1779.3" y="1279.5" width="12.4" height="12.4" fill="#f8b55e" rx="4.5" stroke="#000" stroke-width="1.7"/><rect x="1779.3" y="1298" width="12.4" height="12.4" fill="#f8b55e" rx="4.5" stroke="#000" stroke-width="1.7"/><circle cx="1652.1" cy="1284.5" r="2.4" fill="#f8b55e" stroke="#000" stroke-width="1.8"/><rect x="1659.9" y="1204.1" width="12.4" height="12.4" fill="#f8b55e" rx="4.5" stroke="#000" stroke-width="1.7"/><rect x="1659.9" y="1222.2" width="12.4" height="12.4" fill="#f8b55e" rx="4.5" stroke="#000" stroke-width="1.7"/><rect x="1702.2" y="1204.1" width="12.4" height="12.4" fill="#f8b55e" rx="4.5" stroke="#000" stroke-width="1.7"/><rect x="1702.2" y="1222.2" width="12.4" height="12.4" fill="#f8b55e" rx="4.5" stroke="#000" stroke-width="1.7"/><rect x="1232.7" y="1452.3" width="8.9" height="49.4" fill="#f7b66c"/><rect x="1264.5" y="1452.3" width="8.9" height="49.4" fill="#f7b66c"/><rect x="1294.8" y="1452.3" width="8.9" height="49.4" fill="#f7b66c"/><rect x="1326.6" y="1452.3" width="8.9" height="49.4" fill="#f7b66c"/><rect x="1358.5" y="1452.3" width="8.9" height="49.4" fill="#f7b66c"/><rect x="1390.3" y="1452.3" width="8.9" height="49.4" fill="#f7b66c"/><rect x="1420.6" y="1452.3" width="8.9" height="49.4" fill="#f7b66c"/><rect x="1454" y="1452.3" width="8.9" height="49.4" fill="#f7b66c"/><path d="M1248 1503.2 V1436 A5.1 5.1 0 0 1 1258.1 1436 V1503.2 Z" fill="#c1f06a" stroke="#000" stroke-width="1.7"/><rect x="1248.9" y="1452.3" width="8.4" height="50.1" fill="#f8b55e"/><circle cx="1254.3" cy="1434.1" r="1.6" fill="#f8b55e" stroke="#000" stroke-width="1.8"/><path d="M1279.8 1503.2 V1436 A5.1 5.1 0 0 1 1290 1436 V1503.2 Z" fill="#c1f06a" stroke="#000" stroke-width="1.7"/><rect x="1280.7" y="1452.3" width="8.4" height="50.1" fill="#f8b55e"/><circle cx="1286.2" cy="1434.1" r="1.6" fill="#f8b55e" stroke="#000" stroke-width="1.8"/><path d="M1311 1503.2 V1436 A5.1 5.1 0 0 1 1321.2 1436 V1503.2 Z" fill="#c1f06a" stroke="#000" stroke-width="1.7"/><rect x="1311.9" y="1452.3" width="8.4" height="50.1" fill="#f8b55e"/><circle cx="1317.4" cy="1434.1" r="1.6" fill="#f8b55e" stroke="#000" stroke-width="1.8"/><path d="M1342.5 1503.2 V1436 A5.1 5.1 0 0 1 1352.7 1436 V1503.2 Z" fill="#c1f06a" stroke="#000" stroke-width="1.7"/><rect x="1343.4" y="1452.3" width="8.4" height="50.1" fill="#f8b55e"/><circle cx="1348.9" cy="1434.1" r="1.6" fill="#f8b55e" stroke="#000" stroke-width="1.8"/><path d="M1374.4 1503.2 V1436 A5.1 5.1 0 0 1 1384.6 1436 V1503.2 Z" fill="#c1f06a" stroke="#000" stroke-width="1.7"/><rect x="1375.3" y="1452.3" width="8.4" height="50.1" fill="#f8b55e"/><circle cx="1380.7" cy="1434.1" r="1.6" fill="#f8b55e" stroke="#000" stroke-width="1.8"/><path d="M1405.6 1503.2 V1436 A5.1 5.1 0 0 1 1415.8 1436 V1503.2 Z" fill="#c1f06a" stroke="#000" stroke-width="1.7"/><rect x="1406.5" y="1452.3" width="8.4" height="50.1" fill="#f8b55e"/><circle cx="1412" cy="1434.1" r="1.6" fill="#f8b55e" stroke="#000" stroke-width="1.8"/><path d="M1438.1 1503.2 V1436 A5.1 5.1 0 0 1 1448.3 1436 V1503.2 Z" fill="#c1f06a" stroke="#000" stroke-width="1.7"/><rect x="1439" y="1452.3" width="8.4" height="50.1" fill="#f8b55e"/><circle cx="1444.4" cy="1434.1" r="1.6" fill="#f8b55e" stroke="#000" stroke-width="1.8"/>
<path d="M851.8 302.7 L851.8 240.4 L1150.7 240.4 L1150.7 302.7" fill="none" stroke="#f7f3df" stroke-width="1.2"/><path d="M851.8 376 L851.8 422.7" fill="none" stroke="#f7f3df" stroke-width="1.2"/><path d="M1149 376 L1149 422.7" fill="none" stroke="#f7f3df" stroke-width="1.2"/><path d="M878 471 L906.4 471" fill="none" stroke="#f7f3df" stroke-width="1.2"/><path d="M1096 471 L1127.6 471" fill="none" stroke="#f7f3df" stroke-width="1.2"/><rect x="881.9" y="566.6" width="83.9" height="37" fill="none" stroke="#f7f3df" stroke-width="1.3"/><rect x="971.1" y="566.6" width="82.4" height="37" fill="none" stroke="#f7f3df" stroke-width="1.3"/><rect x="1059.5" y="566.6" width="15.1" height="37" fill="none" stroke="#f7f3df" stroke-width="1.1"/><rect x="1079.1" y="565.1" width="21.9" height="40.1" fill="none" stroke="#fdf6dd" stroke-width="1.8"/><rect x="1103.3" y="566.6" width="16.6" height="37" fill="none" stroke="#f7f3df" stroke-width="1.1"/><rect x="1210.4" y="435.4" width="39.8" height="26.9" fill="none" stroke="#f7f3df" stroke-width="1.2"/><rect x="1211.3" y="462.2" width="36.3" height="16.7" fill="none" stroke="#f7f3df" stroke-width="1.2"/><rect x="1328.2" y="460.7" width="37" height="18.3" fill="none" stroke="#f7f3df" stroke-width="1.2"/><rect x="1191.8" y="500.8" width="55.9" height="52.4" fill="none" stroke="#f7f3df" stroke-width="1.2"/><rect x="1308.7" y="500.8" width="55.9" height="52.4" fill="none" stroke="#f7f3df" stroke-width="1.2"/><rect x="1192.4" y="572.2" width="17.4" height="37" fill="none" stroke="#f7f3df" stroke-width="1.2"/><rect x="1228.7" y="572.2" width="39.5" height="37" fill="none" stroke="#f7f3df" stroke-width="1.2"/><rect x="1304.5" y="572.2" width="39.5" height="37" fill="none" stroke="#f7f3df" stroke-width="1.2"/><rect x="1345.6" y="572.2" width="19.6" height="37" fill="none" stroke="#f7f3df" stroke-width="1.2"/><rect x="1367.7" y="572.2" width="22.7" height="37" fill="none" stroke="#f7f3df" stroke-width="1.2"/><path d="M1568.5 571.1 L1568.5 533.2 L1725.2 533.2 L1725.2 571.1" fill="none" stroke="#fdf6dd" stroke-width="5"/><rect x="1528.4" y="572.7" width="237.6" height="159.5" fill="none" stroke="#000" stroke-width="1.6"/><rect x="1570.1" y="572.7" width="153.2" height="159.5" fill="none" stroke="#000" stroke-width="1.6"/><rect x="1723.3" y="663.7" width="42.6" height="70.1" fill="#c1f06a" stroke="#000" stroke-width="2.4"/><circle cx="1602.6" cy="653.2" r="10.4" fill="#404040" stroke="#000" stroke-width="1"/><circle cx="1690.7" cy="653.2" r="10.4" fill="#404040" stroke="#000" stroke-width="1"/><path d="M1574.8 711.7 L1605.8 711.7" fill="none" stroke="#fdf6dd" stroke-width="5"/><path d="M1690.1 711.7 L1720.1 711.7" fill="none" stroke="#fdf6dd" stroke-width="5"/><rect x="1555.9" y="744.8" width="40.4" height="19.9" fill="none" stroke="#fff" stroke-width="1.6"/><path d="M1289 877.3 L1620.8 877.3 L1620.8 1216 L1282.7 1216 L1282.7 884 Z" fill="none" stroke="#f7f3df" stroke-width="1.2"/><rect x="1284.5" y="886" width="4.5" height="4.5" fill="#fdf6dd"/><rect x="1204.2" y="1019.3" width="17.3" height="37.1" fill="none" stroke="#f7f3df" stroke-width="1.2"/><path d="M858.5 744.8 L1119.1 744.8 L1134.9 762.2 L1134.9 942.2 L858.5 942.2 Z" fill="none" stroke="#f7f3df" stroke-width="1.2"/><rect x="858.5" y="835.5" width="276.4" height="19" fill="#fdf6dd"/><rect x="875.8" y="699" width="20.2" height="37.9" fill="none" stroke="#f7f3df" stroke-width="1.1"/><rect x="904.3" y="699" width="20.2" height="37.9" fill="none" stroke="#f7f3df" stroke-width="1.1"/><rect x="929.9" y="699" width="20.2" height="37.9" fill="none" stroke="#f7f3df" stroke-width="1.1"/><rect x="954.2" y="699" width="20.2" height="37.9" fill="none" stroke="#f7f3df" stroke-width="1.1"/><rect x="975.7" y="699" width="20.2" height="37.9" fill="none" stroke="#f7f3df" stroke-width="1.1"/><rect x="997.8" y="699" width="20.2" height="37.9" fill="none" stroke="#f7f3df" stroke-width="1.1"/><rect x="1018.9" y="699" width="20.2" height="37.9" fill="none" stroke="#f7f3df" stroke-width="1.1"/><rect x="1040.1" y="699" width="20.2" height="37.9" fill="none" stroke="#f7f3df" stroke-width="1.1"/><rect x="1061" y="699" width="20.2" height="37.9" fill="none" stroke="#f7f3df" stroke-width="1.1"/><rect x="1083.7" y="699" width="20.2" height="37.9" fill="none" stroke="#f7f3df" stroke-width="1.1"/><rect x="1107.4" y="699" width="20.2" height="37.9" fill="none" stroke="#f7f3df" stroke-width="1.1"/><rect x="875.2" y="951.7" width="20.2" height="36.3" fill="none" stroke="#f7f3df" stroke-width="1.1"/><rect x="909.3" y="951.7" width="20.2" height="36.3" fill="none" stroke="#f7f3df" stroke-width="1.1"/><rect x="929.9" y="951.7" width="20.2" height="36.3" fill="none" stroke="#f7f3df" stroke-width="1.1"/><rect x="951" y="951.7" width="20.2" height="36.3" fill="none" stroke="#f7f3df" stroke-width="1.1"/><rect x="973.1" y="951.7" width="20.2" height="36.3" fill="none" stroke="#f7f3df" stroke-width="1.1"/><rect x="996.2" y="951.7" width="20.2" height="36.3" fill="none" stroke="#f7f3df" stroke-width="1.1"/><rect x="1049.9" y="951.7" width="20.2" height="36.3" fill="none" stroke="#f7f3df" stroke-width="1.1"/><rect x="1072.6" y="951.7" width="20.2" height="36.3" fill="none" stroke="#f7f3df" stroke-width="1.1"/><rect x="1097.3" y="951.7" width="20.2" height="36.3" fill="none" stroke="#f7f3df" stroke-width="1.1"/><rect x="992.7" y="999.1" width="35.4" height="17.4" fill="none" stroke="#f7f3df" stroke-width="1.1"/><path d="M858.1 1150.8 L1115.8 1150.8 L1135 1169.2 L1135 1349.2 L858.1 1349.2 Z" fill="none" stroke="#f7f3df" stroke-width="1.2"/><rect x="858.1" y="1241.5" width="276.9" height="20" fill="#fdf6dd"/><rect x="885" y="1104.6" width="20.8" height="38.5" fill="none" stroke="#f7f3df" stroke-width="1.1"/><rect x="908.1" y="1104.6" width="20.8" height="38.5" fill="none" stroke="#f7f3df" stroke-width="1.1"/><rect x="932.3" y="1104.6" width="20.8" height="38.5" fill="none" stroke="#f7f3df" stroke-width="1.1"/><rect x="1016.9" y="1104.6" width="20" height="38.5" fill="none" stroke="#f7f3df" stroke-width="1.1"/><rect x="1040" y="1123.8" width="116.9" height="20" fill="none" stroke="#f7f3df" stroke-width="1.1"/><rect x="814.6" y="1184.6" width="36.2" height="18.5" fill="none" stroke="#f7f3df" stroke-width="1.1"/><rect x="814.6" y="1206.2" width="36.2" height="17.7" fill="none" stroke="#f7f3df" stroke-width="1.1"/><rect x="854.6" y="1356.9" width="20.8" height="37.3" fill="none" stroke="#f7f3df" stroke-width="1.1"/><rect x="877.7" y="1356.9" width="20.8" height="37.3" fill="none" stroke="#f7f3df" stroke-width="1.1"/><rect x="901.5" y="1356.9" width="20.8" height="37.3" fill="none" stroke="#f7f3df" stroke-width="1.1"/><rect x="924.6" y="1356.9" width="20.8" height="37.3" fill="none" stroke="#f7f3df" stroke-width="1.1"/><rect x="947.7" y="1356.9" width="20.8" height="37.3" fill="none" stroke="#f7f3df" stroke-width="1.1"/><rect x="970.8" y="1356.9" width="20.8" height="37.3" fill="none" stroke="#f7f3df" stroke-width="1.1"/><rect x="1001.5" y="1356.9" width="20.8" height="37.3" fill="none" stroke="#f7f3df" stroke-width="1.1"/><rect x="1040" y="1356.9" width="20.8" height="37.3" fill="none" stroke="#f7f3df" stroke-width="1.1"/><rect x="1066.2" y="1356.9" width="20.8" height="37.3" fill="none" stroke="#f7f3df" stroke-width="1.1"/><rect x="1141.5" y="1292.3" width="37.7" height="20" fill="none" stroke="#f7f3df" stroke-width="1.1"/><rect x="1197.5" y="694.5" width="60.4" height="38.4" fill="none" stroke="#f7f3df" stroke-width="1.3"/><circle cx="1229.6" cy="713.2" r="10.6" fill="none" stroke="#fdf6dd" stroke-width="3"/><rect x="1243.9" y="752.5" width="35.7" height="17.9" fill="none" stroke="#f7f3df" stroke-width="1.1"/><rect x="1302" y="691.8" width="17" height="35.7" fill="none" stroke="#f7f3df" stroke-width="1.1"/><rect x="1319.8" y="691.8" width="18.8" height="35.7" fill="none" stroke="#f7f3df" stroke-width="1.1"/><path d="M1327 684.6 L1340.4 693.6 L1329.6 702.5 Z" fill="#fdf6dd"/><rect x="1342.5" y="676.1" width="73.4" height="85" fill="none" stroke="#fdf6dd" stroke-width="4.4"/><rect x="1368" y="765.9" width="18.4" height="18.8" fill="none" stroke="#f7f3df" stroke-width="1.1"/><rect x="1368" y="785.5" width="18.4" height="17.9" fill="none" stroke="#f7f3df" stroke-width="1.1"/><rect x="1387.7" y="765.9" width="18.4" height="18.8" fill="none" stroke="#f7f3df" stroke-width="1.1"/><rect x="1387.7" y="785.5" width="18.4" height="17.9" fill="none" stroke="#f7f3df" stroke-width="1.1"/><rect x="1407.3" y="765.9" width="18.4" height="18.8" fill="none" stroke="#f7f3df" stroke-width="1.1"/><rect x="1407.3" y="785.5" width="18.4" height="17.9" fill="none" stroke="#f7f3df" stroke-width="1.1"/><rect x="1699" y="769.3" width="42.6" height="37.1" fill="none" stroke="#f7f3df" stroke-width="1.1"/><rect x="1741.6" y="769.3" width="35.2" height="37.1" fill="none" stroke="#f7f3df" stroke-width="1.1"/><rect x="1669.4" y="878.6" width="20" height="37.1" fill="none" stroke="#f7f3df" stroke-width="1.1"/><rect x="1690.1" y="878.6" width="20" height="37.1" fill="none" stroke="#f7f3df" stroke-width="1.1"/><rect x="1710.1" y="878.6" width="20" height="37.1" fill="none" stroke="#f7f3df" stroke-width="1.1"/><rect x="1731.6" y="878.6" width="20" height="37.1" fill="none" stroke="#f7f3df" stroke-width="1.1"/><rect x="1757.6" y="878.6" width="20" height="37.1" fill="none" stroke="#f7f3df" stroke-width="1.1"/><rect x="1783.5" y="878.6" width="20" height="37.1" fill="none" stroke="#f7f3df" stroke-width="1.1"/><rect x="1809.5" y="878.6" width="20" height="37.1" fill="none" stroke="#f7f3df" stroke-width="1.1"/><rect x="1758.3" y="934.2" width="18.5" height="33.4" fill="none" stroke="#f7f3df" stroke-width="1.1"/><rect x="1780.6" y="934.2" width="18.5" height="33.4" fill="none" stroke="#f7f3df" stroke-width="1.1"/><rect x="1632.3" y="1006.5" width="77.8" height="37.1" fill="none" stroke="#f7f3df" stroke-width="1.3"/><rect x="1715.7" y="989.8" width="48.2" height="29.7" fill="none" stroke="#fff" stroke-width="1.6"/><rect x="1771.3" y="1002.8" width="40.8" height="35.2" fill="none" stroke="#f7f3df" stroke-width="1.1"/><rect x="1815.8" y="1002.8" width="37.1" height="35.2" fill="none" stroke="#f7f3df" stroke-width="1.1"/><rect x="1649" y="1056.6" width="63" height="40.8" fill="none" stroke="#f7f3df" stroke-width="1.6"/><rect x="1728.7" y="1058.4" width="38.9" height="35.2" fill="none" stroke="#f7f3df" stroke-width="1.1"/><rect x="1813.9" y="1056.6" width="38.9" height="37.1" fill="none" stroke="#f7f3df" stroke-width="1.1"/><rect x="1655.6" y="1134.4" width="150.9" height="46.3" fill="none" stroke="#f7f3df" stroke-width="2.2"/><rect x="1830.6" y="1106.6" width="35.2" height="18.5" fill="none" stroke="#f7f3df" stroke-width="1.1"/><rect x="1830.6" y="1128.1" width="35.2" height="18.5" fill="none" stroke="#f7f3df" stroke-width="1.1"/><rect x="1830.6" y="1149.2" width="35.2" height="18.5" fill="none" stroke="#f7f3df" stroke-width="1.1"/><rect x="1830.6" y="1169.6" width="35.2" height="18.5" fill="none" stroke="#f7f3df" stroke-width="1.1"/><rect x="1788" y="1203" width="126" height="40.8" fill="none" stroke="#f7f3df" stroke-width="2.2"/><path d="M1767.6 1180.8 L1788 1203" fill="none" stroke="#f7f3df" stroke-width="1.6"/><rect x="1657.1" y="1201.1" width="18.5" height="37.1" fill="none" stroke="#f7f3df" stroke-width="1.1"/><rect x="1699" y="1201.1" width="18.5" height="37.1" fill="none" stroke="#f7f3df" stroke-width="1.1"/><rect x="1246.7" y="1221.4" width="20.7" height="38.2" fill="none" stroke="#f7f3df" stroke-width="1.1"/><rect x="1270.6" y="1246.9" width="35" height="16.6" fill="none" stroke="#fff" stroke-width="1.3"/><rect x="1308.8" y="1246.9" width="36.6" height="16.6" fill="none" stroke="#fff" stroke-width="1.3"/><rect x="1325.7" y="1266" width="19.7" height="38.9" fill="none" stroke="#fff" stroke-width="1.4"/><rect x="1344.1" y="1309" width="17.2" height="36.6" fill="none" stroke="#f7f3df" stroke-width="1.1"/><rect x="1366.4" y="1309" width="17.2" height="36.6" fill="none" stroke="#f7f3df" stroke-width="1.1"/><rect x="1386.2" y="1309" width="17.2" height="36.6" fill="none" stroke="#f7f3df" stroke-width="1.1"/><path d="M1248.3 1342.4 L1300.8 1342.4 L1300.8 1482.5 L1289.7 1493.7 L1259.4 1493.7 L1248.3 1482.5 Z" fill="none" stroke="#fdf6dd" stroke-width="4"/><path d="M1254.6 1318.5 L1256.2 1329.7 L1265.8 1341.5" fill="none" stroke="#fdf6dd" stroke-width="3"/><path d="M1294.4 1318.5 L1292.9 1329.7 L1284.9 1341.5" fill="none" stroke="#fdf6dd" stroke-width="3"/><rect x="1196.7" y="1361.5" width="17.2" height="36.6" fill="none" stroke="#f7f3df" stroke-width="1.1"/><rect x="1342.9" y="1373.6" width="17.8" height="35.7" fill="none" stroke="#f7f3df" stroke-width="1.1"/><rect x="1363.6" y="1373.6" width="17.8" height="35.7" fill="none" stroke="#f7f3df" stroke-width="1.1"/><rect x="1385.8" y="1373.6" width="17.8" height="35.7" fill="none" stroke="#f7f3df" stroke-width="1.1"/><rect x="1407.5" y="1373.6" width="17.8" height="35.7" fill="none" stroke="#f7f3df" stroke-width="1.1"/><rect x="1450.5" y="1323.3" width="19.1" height="92.4" fill="none" stroke="#f7f3df" stroke-width="1.1"/><rect x="1480.1" y="1247.5" width="19.1" height="37.6" fill="none" stroke="#f7f3df" stroke-width="1.1"/><rect x="1540.6" y="1296.2" width="17.2" height="36.6" fill="none" stroke="#f7f3df" stroke-width="1.1"/><rect x="1575.6" y="1282.5" width="17.2" height="37.6" fill="none" stroke="#f7f3df" stroke-width="1.1"/><rect x="1657.8" y="1277.1" width="18.5" height="35" fill="none" stroke="#f7f3df" stroke-width="1.1"/><rect x="1677.9" y="1277.1" width="18.5" height="35" fill="none" stroke="#f7f3df" stroke-width="1.1"/><rect x="1697" y="1277.1" width="18.5" height="35" fill="none" stroke="#f7f3df" stroke-width="1.1"/><rect x="1716.1" y="1277.1" width="18.5" height="35" fill="none" stroke="#f7f3df" stroke-width="1.1"/><rect x="1735.8" y="1277.1" width="18.5" height="35" fill="none" stroke="#f7f3df" stroke-width="1.1"/><rect x="1756.5" y="1277.1" width="18.5" height="35" fill="none" stroke="#f7f3df" stroke-width="1.1"/><rect x="1776.3" y="1277.1" width="18.5" height="35" fill="none" stroke="#f7f3df" stroke-width="1.1"/><rect x="1657.5" y="1201.7" width="17.5" height="35.7" fill="none" stroke="#f7f3df" stroke-width="1.1"/><rect x="1699.8" y="1201.7" width="17.2" height="35.7" fill="none" stroke="#f7f3df" stroke-width="1.1"/><rect x="1218" y="1445.9" width="258.9" height="59.6" fill="none" stroke="#f7f3df" stroke-width="1.2"/>
<text x="1174.4" y="348" font-size="27" fill="#f7dcec" text-anchor="start" textLength="44.4" lengthAdjust="spacingAndGlyphs">CN1</text><text x="912.8" y="622.7" font-size="12.5" fill="#fff" font-family="Liberation Mono,monospace" text-anchor="start" font-weight="bold">RM1</text><text x="997.4" y="622.7" font-size="12.5" fill="#fff" font-family="Liberation Mono,monospace" text-anchor="start" font-weight="bold">RA2</text><text x="1071.4" y="637.6" font-size="12.5" fill="#f7dcec" font-family="Liberation Mono,monospace" text-anchor="start" font-weight="bold" transform="rotate(-90 1071.4 637.6)">R6</text><text x="1093.5" y="637.6" font-size="12.5" fill="#f7dcec" font-family="Liberation Mono,monospace" text-anchor="start" font-weight="bold" transform="rotate(-90 1093.5 637.6)">R2</text><text x="1116.2" y="637.6" font-size="12.5" fill="#f7dcec" font-family="Liberation Mono,monospace" text-anchor="start" font-weight="bold" transform="rotate(-90 1116.2 637.6)">R94</text><text x="1204.7" y="648" font-size="12.5" fill="#f7dcec" font-family="Liberation Mono,monospace" text-anchor="start" font-weight="bold" transform="rotate(-90 1204.7 648)">C8</text><text x="1242.6" y="648" font-size="12.5" fill="#f7dcec" font-family="Liberation Mono,monospace" text-anchor="start" font-weight="bold" transform="rotate(-90 1242.6 648)">C90</text><text x="1264.7" y="648" font-size="12.5" fill="#f7dcec" font-family="Liberation Mono,monospace" text-anchor="start" font-weight="bold" transform="rotate(-90 1264.7 648)">R95</text><text x="1320" y="648" font-size="12.5" fill="#f7dcec" font-family="Liberation Mono,monospace" text-anchor="start" font-weight="bold" transform="rotate(-90 1320 648)">C9</text><text x="1340.6" y="648" font-size="12.5" fill="#f7dcec" font-family="Liberation Mono,monospace" text-anchor="start" font-weight="bold" transform="rotate(-90 1340.6 648)">C91</text><text x="1361.1" y="648" font-size="12.5" fill="#f7dcec" font-family="Liberation Mono,monospace" text-anchor="start" font-weight="bold" transform="rotate(-90 1361.1 648)">R97</text><text x="1388" y="648" font-size="12.5" fill="#f7dcec" font-family="Liberation Mono,monospace" text-anchor="start" font-weight="bold" transform="rotate(-90 1388 648)">FL3</text><text x="1261.9" y="455.3" font-size="12.5" fill="#f7dcec" font-family="Liberation Mono,monospace" text-anchor="start" font-weight="bold">FL4</text><text x="1329.8" y="448" font-size="12.5" fill="#f7dcec" font-family="Liberation Mono,monospace" text-anchor="start" font-weight="bold">R99</text><text x="1179.7" y="474.9" font-size="12.5" fill="#f7dcec" font-family="Liberation Mono,monospace" text-anchor="start" font-weight="bold">R98</text><text x="1259.7" y="525.4" font-size="12.5" fill="#f7dcec" font-family="Liberation Mono,monospace" text-anchor="start" font-weight="bold">Q1</text><text x="1376.6" y="525.4" font-size="12.5" fill="#f7dcec" font-family="Liberation Mono,monospace" text-anchor="start" font-weight="bold">Q2</text><text x="1571" y="781.8" font-size="12.5" fill="#fff" font-family="Liberation Mono,monospace" text-anchor="start" font-weight="bold">D1</text><text x="1447" y="576.2" font-size="26" fill="#f7dcec" text-anchor="start" textLength="44.6" lengthAdjust="spacingAndGlyphs">CN2</text><text x="1442.8" y="872.8" font-size="26" fill="#f7dcec" text-anchor="start" textLength="27.8" lengthAdjust="spacingAndGlyphs">U1</text><text x="1194.3" y="1053.1" font-size="12.5" fill="#f7dcec" font-family="Liberation Mono,monospace" text-anchor="start" font-weight="bold" transform="rotate(-90 1194.3 1053.1)">R201</text><text x="1135.8" y="987.1" font-size="12.5" fill="#f7dcec" font-family="Liberation Mono,monospace" text-anchor="start" font-weight="bold" transform="rotate(-90 1135.8 987.1)">C232</text><text x="1153.1" y="987.1" font-size="12.5" fill="#f7dcec" font-family="Liberation Mono,monospace" text-anchor="start" font-weight="bold" transform="rotate(-90 1153.1 987.1)">R232</text><text x="1219.1" y="1109.3" font-size="13" fill="#f7dcec" font-family="Liberation Mono,monospace" text-anchor="start" font-weight="bold">TP48</text><text x="770" y="849.5" font-size="26" fill="#f7dcec" font-family="Liberation Mono,monospace" text-anchor="start">U204</text><text x="889.7" y="692.7" font-size="12.5" fill="#f7dcec" font-family="Liberation Mono,monospace" text-anchor="start" font-weight="bold" transform="rotate(-90 889.7 692.7)">C229</text><text x="918.2" y="692.7" font-size="12.5" fill="#f7dcec" font-family="Liberation Mono,monospace" text-anchor="start" font-weight="bold" transform="rotate(-90 918.2 692.7)">R228</text><text x="943.8" y="692.7" font-size="12.5" fill="#f7dcec" font-family="Liberation Mono,monospace" text-anchor="start" font-weight="bold" transform="rotate(-90 943.8 692.7)">C226</text><text x="968.1" y="692.7" font-size="12.5" fill="#f7dcec" font-family="Liberation Mono,monospace" text-anchor="start" font-weight="bold" transform="rotate(-90 968.1 692.7)">R232</text><text x="989.6" y="692.7" font-size="12.5" fill="#f7dcec" font-family="Liberation Mono,monospace" text-anchor="start" font-weight="bold" transform="rotate(-90 989.6 692.7)">C231</text><text x="1011.7" y="692.7" font-size="12.5" fill="#f7dcec" font-family="Liberation Mono,monospace" text-anchor="start" font-weight="bold" transform="rotate(-90 1011.7 692.7)">R230</text><text x="1032.8" y="692.7" font-size="12.5" fill="#f7dcec" font-family="Liberation Mono,monospace" text-anchor="start" font-weight="bold" transform="rotate(-90 1032.8 692.7)">C227</text><text x="1054" y="692.7" font-size="12.5" fill="#f7dcec" font-family="Liberation Mono,monospace" text-anchor="start" font-weight="bold" transform="rotate(-90 1054 692.7)">C228</text><text x="1074.8" y="692.7" font-size="12.5" fill="#f7dcec" font-family="Liberation Mono,monospace" text-anchor="start" font-weight="bold" transform="rotate(-90 1074.8 692.7)">C232</text><text x="1097.6" y="692.7" font-size="12.5" fill="#f7dcec" font-family="Liberation Mono,monospace" text-anchor="start" font-weight="bold" transform="rotate(-90 1097.6 692.7)">R233</text><text x="1121.3" y="692.7" font-size="12.5" fill="#f7dcec" font-family="Liberation Mono,monospace" text-anchor="start" font-weight="bold" transform="rotate(-90 1121.3 692.7)">C230</text><text x="777.3" y="989" font-size="12.5" fill="#f7dcec" font-family="Liberation Mono,monospace" text-anchor="start" font-weight="bold" transform="rotate(-90 777.3 989)">C236</text><text x="795.3" y="989" font-size="12.5" fill="#f7dcec" font-family="Liberation Mono,monospace" text-anchor="start" font-weight="bold" transform="rotate(-90 795.3 989)">C238</text><text x="813.3" y="989" font-size="12.5" fill="#f7dcec" font-family="Liberation Mono,monospace" text-anchor="start" font-weight="bold" transform="rotate(-90 813.3 989)">R231</text><text x="831.3" y="989" font-size="12.5" fill="#f7dcec" font-family="Liberation Mono,monospace" text-anchor="start" font-weight="bold" transform="rotate(-90 831.3 989)">R235</text><text x="849.3" y="989" font-size="12.5" fill="#f7dcec" font-family="Liberation Mono,monospace" text-anchor="start" font-weight="bold" transform="rotate(-90 849.3 989)">C237</text><text x="867.3" y="989" font-size="12.5" fill="#f7dcec" font-family="Liberation Mono,monospace" text-anchor="start" font-weight="bold" transform="rotate(-90 867.3 989)">C239</text><text x="1043.3" y="983.3" font-size="12.5" fill="#f7dcec" font-family="Liberation Mono,monospace" text-anchor="start" font-weight="bold" transform="rotate(-90 1043.3 983.3)">C231</text><text x="1136.4" y="986.5" font-size="12.5" fill="#f7dcec" font-family="Liberation Mono,monospace" text-anchor="start" font-weight="bold" transform="rotate(-90 1136.4 986.5)">C235</text><text x="1153.2" y="986.5" font-size="12.5" fill="#f7dcec" font-family="Liberation Mono,monospace" text-anchor="start" font-weight="bold" transform="rotate(-90 1153.2 986.5)">R232</text><text x="769.5" y="1261.5" font-size="26" fill="#f7dcec" font-family="Liberation Mono,monospace" text-anchor="start">U205</text><text x="772.3" y="1200" font-size="12.5" fill="#f7dcec" font-family="Liberation Mono,monospace" text-anchor="start" font-weight="bold">R224</text><text x="772.3" y="1220" font-size="12.5" fill="#f7dcec" font-family="Liberation Mono,monospace" text-anchor="start" font-weight="bold">R225</text><text x="1141.5" y="1287.7" font-size="12.5" fill="#f7dcec" font-family="Liberation Mono,monospace" text-anchor="start" font-weight="bold">C247</text><text x="869.6" y="1437.7" font-size="12.5" fill="#f7dcec" font-family="Liberation Mono,monospace" text-anchor="start" font-weight="bold" transform="rotate(-90 869.6 1437.7)">C242</text><text x="892.7" y="1437.7" font-size="12.5" fill="#f7dcec" font-family="Liberation Mono,monospace" text-anchor="start" font-weight="bold" transform="rotate(-90 892.7 1437.7)">C243</text><text x="916.5" y="1437.7" font-size="12.5" fill="#f7dcec" font-family="Liberation Mono,monospace" text-anchor="start" font-weight="bold" transform="rotate(-90 916.5 1437.7)">C214</text><text x="939.6" y="1437.7" font-size="12.5" fill="#f7dcec" font-family="Liberation Mono,monospace" text-anchor="start" font-weight="bold" transform="rotate(-90 939.6 1437.7)">C213</text><text x="962.7" y="1437.7" font-size="12.5" fill="#f7dcec" font-family="Liberation Mono,monospace" text-anchor="start" font-weight="bold" transform="rotate(-90 962.7 1437.7)">R232</text><text x="985.8" y="1437.7" font-size="12.5" fill="#f7dcec" font-family="Liberation Mono,monospace" text-anchor="start" font-weight="bold" transform="rotate(-90 985.8 1437.7)">C244</text><text x="1016.5" y="1437.7" font-size="12.5" fill="#f7dcec" font-family="Liberation Mono,monospace" text-anchor="start" font-weight="bold" transform="rotate(-90 1016.5 1437.7)">C241</text><text x="1055" y="1437.7" font-size="12.5" fill="#f7dcec" font-family="Liberation Mono,monospace" text-anchor="start" font-weight="bold" transform="rotate(-90 1055 1437.7)">C245</text><text x="1081.2" y="1437.7" font-size="12.5" fill="#f7dcec" font-family="Liberation Mono,monospace" text-anchor="start" font-weight="bold" transform="rotate(-90 1081.2 1437.7)">C246</text><text x="900" y="1101.9" font-size="12.5" fill="#f7dcec" font-family="Liberation Mono,monospace" text-anchor="start" font-weight="bold" transform="rotate(-90 900 1101.9)">C234</text><text x="923.1" y="1101.9" font-size="12.5" fill="#f7dcec" font-family="Liberation Mono,monospace" text-anchor="start" font-weight="bold" transform="rotate(-90 923.1 1101.9)">C240</text><text x="947.3" y="1101.9" font-size="12.5" fill="#f7dcec" font-family="Liberation Mono,monospace" text-anchor="start" font-weight="bold" transform="rotate(-90 947.3 1101.9)">C239</text><text x="1008.1" y="1142.3" font-size="12.5" fill="#f7dcec" font-family="Liberation Mono,monospace" text-anchor="start" font-weight="bold" transform="rotate(-90 1008.1 1142.3)">C228</text><text x="1079.2" y="1120" font-size="12.5" fill="#f7dcec" font-family="Liberation Mono,monospace" text-anchor="start" font-weight="bold">C235</text><text x="1163.8" y="1140.4" font-size="12.5" fill="#f7dcec" font-family="Liberation Mono,monospace" text-anchor="start" font-weight="bold">C236</text><text x="1040.8" y="1163.5" font-size="12.5" fill="#f7dcec" font-family="Liberation Mono,monospace" text-anchor="start" font-weight="bold">C227</text><text x="994.6" y="1036.5" font-size="12.5" fill="#f7dcec" font-family="Liberation Mono,monospace" text-anchor="start" font-weight="bold">R299</text><text x="1202" y="767.7" font-size="12.5" fill="#f7dcec" font-family="Liberation Mono,monospace" text-anchor="start" font-weight="bold">R148</text><text x="1202.9" y="688.6" font-size="12.5" fill="#f7dcec" font-family="Liberation Mono,monospace" text-anchor="start" font-weight="bold">SW102</text><text x="1259.1" y="807" font-size="13" fill="#f7dcec" font-family="Liberation Mono,monospace" text-anchor="start" font-weight="bold">TP21</text><text x="1314.5" y="766.8" font-size="12.5" fill="#f7dcec" font-family="Liberation Mono,monospace" text-anchor="start" font-weight="bold" transform="rotate(-90 1314.5 766.8)">R105</text><text x="1337.1" y="766.8" font-size="12.5" fill="#f7dcec" font-family="Liberation Mono,monospace" text-anchor="start" font-weight="bold" transform="rotate(-90 1337.1 766.8)">C105</text><text x="1357.3" y="670" font-size="12.5" fill="#f7dcec" font-family="Liberation Mono,monospace" text-anchor="start" font-weight="bold">X101</text><text x="1327.9" y="785" font-size="12.5" fill="#f7dcec" font-family="Liberation Mono,monospace" text-anchor="start" font-weight="bold">C104</text><text x="1332.3" y="802.1" font-size="12.5" fill="#f7dcec" font-family="Liberation Mono,monospace" text-anchor="start" font-weight="bold">R27</text><text x="1440.4" y="797.1" font-size="12.5" fill="#f7dcec" font-family="Liberation Mono,monospace" text-anchor="start" font-weight="bold" transform="rotate(-90 1440.4 797.1)">R64</text><text x="1786.1" y="782.2" font-size="12.5" fill="#f7dcec" font-family="Liberation Mono,monospace" text-anchor="start" font-weight="bold">C83</text><text x="1786.1" y="803.7" font-size="12.5" fill="#f7dcec" font-family="Liberation Mono,monospace" text-anchor="start" font-weight="bold">C82</text><text x="1687.9" y="834.1" font-size="12.5" fill="#f7dcec" font-family="Liberation Mono,monospace" text-anchor="start" font-weight="bold">J</text><text x="1706.4" y="876.8" font-size="12.5" fill="#f7dcec" font-family="Liberation Mono,monospace" text-anchor="start" font-weight="bold" transform="rotate(-90 1706.4 876.8)">R248</text><text x="1726.8" y="876.8" font-size="12.5" fill="#f7dcec" font-family="Liberation Mono,monospace" text-anchor="start" font-weight="bold" transform="rotate(-90 1726.8 876.8)">R251</text><text x="1749.1" y="876.8" font-size="12.5" fill="#f7dcec" font-family="Liberation Mono,monospace" text-anchor="start" font-weight="bold" transform="rotate(-90 1749.1 876.8)">R86</text><text x="1774.3" y="876.8" font-size="12.5" fill="#f7dcec" font-family="Liberation Mono,monospace" text-anchor="start" font-weight="bold" transform="rotate(-90 1774.3 876.8)">PL5</text><text x="1800.2" y="876.8" font-size="12.5" fill="#f7dcec" font-family="Liberation Mono,monospace" text-anchor="start" font-weight="bold" transform="rotate(-90 1800.2 876.8)">FL9</text><text x="1826.2" y="876.8" font-size="12.5" fill="#f7dcec" font-family="Liberation Mono,monospace" text-anchor="start" font-weight="bold" transform="rotate(-90 1826.2 876.8)">C86</text><text x="1667.5" y="910.1" font-size="12.5" fill="#f7dcec" font-family="Liberation Mono,monospace" text-anchor="start" font-weight="bold" transform="rotate(-90 1667.5 910.1)">R121</text><text x="1689.7" y="931.3" font-size="12.5" fill="#f7dcec" font-family="Liberation Mono,monospace" text-anchor="start" font-weight="bold">TP66</text><text x="1677.9" y="955.7" font-size="12.5" fill="#f7dcec" font-family="Liberation Mono,monospace" text-anchor="start" font-weight="bold">TP63</text><text x="1817.6" y="960.2" font-size="12.5" fill="#f7dcec" font-family="Liberation Mono,monospace" text-anchor="start" font-weight="bold" transform="rotate(-90 1817.6 960.2)">R21</text><text x="1830.6" y="960.2" font-size="12.5" fill="#f7dcec" font-family="Liberation Mono,monospace" text-anchor="start" font-weight="bold" transform="rotate(-90 1830.6 960.2)">R22</text><text x="1718.7" y="1009.1" font-size="12.5" fill="#fff" font-family="Liberation Mono,monospace" text-anchor="start" font-weight="bold">R27</text><text x="1737.2" y="1009.1" font-size="12.5" fill="#fff" font-family="Liberation Mono,monospace" text-anchor="start" font-weight="bold">R19</text><text x="1639.7" y="1001" font-size="12.5" fill="#fff" font-family="Liberation Mono,monospace" text-anchor="start" font-weight="bold" transform="rotate(-90 1639.7 1001)">R18</text><text x="1660.1" y="1001" font-size="12.5" fill="#fff" font-family="Liberation Mono,monospace" text-anchor="start" font-weight="bold" transform="rotate(-90 1660.1 1001)">R20</text><text x="1690.5" y="1001" font-size="12.5" fill="#fff" font-family="Liberation Mono,monospace" text-anchor="start" font-weight="bold" transform="rotate(-90 1690.5 1001)">R7</text><text x="1705.3" y="1001" font-size="12.5" fill="#fff" font-family="Liberation Mono,monospace" text-anchor="start" font-weight="bold" transform="rotate(-90 1705.3 1001)">R19</text><text x="1782.4" y="997.3" font-size="12.5" fill="#f7dcec" font-family="Liberation Mono,monospace" text-anchor="start" font-weight="bold" transform="rotate(-90 1782.4 997.3)">R23</text><text x="1804.7" y="997.3" font-size="12.5" fill="#f7dcec" font-family="Liberation Mono,monospace" text-anchor="start" font-weight="bold" transform="rotate(-90 1804.7 997.3)">R24</text><text x="1827.7" y="997.3" font-size="12.5" fill="#f7dcec" font-family="Liberation Mono,monospace" text-anchor="start" font-weight="bold" transform="rotate(-90 1827.7 997.3)">R81</text><text x="1849.2" y="997.3" font-size="12.5" fill="#f7dcec" font-family="Liberation Mono,monospace" text-anchor="start" font-weight="bold" transform="rotate(-90 1849.2 997.3)">R22</text><text x="1739.8" y="1052.9" font-size="12.5" fill="#fff" font-family="Liberation Mono,monospace" text-anchor="start" font-weight="bold" transform="rotate(-90 1739.8 1052.9)">R9</text><text x="1762" y="1052.9" font-size="12.5" fill="#fff" font-family="Liberation Mono,monospace" text-anchor="start" font-weight="bold" transform="rotate(-90 1762 1052.9)">R3</text><text x="1630.4" y="1056.6" font-size="12.5" fill="#fff" font-family="Liberation Mono,monospace" text-anchor="start" font-weight="bold">TP76</text><text x="1807.6" y="1086.2" font-size="12.5" fill="#f7dcec" font-family="Liberation Mono,monospace" text-anchor="start" font-weight="bold" transform="rotate(-90 1807.6 1086.2)">R9</text><text x="1870.7" y="1086.2" font-size="12.5" fill="#f7dcec" font-family="Liberation Mono,monospace" text-anchor="start" font-weight="bold" transform="rotate(-90 1870.7 1086.2)">R10</text><text x="1640.8" y="1180.8" font-size="12.5" fill="#f7dcec" font-family="Liberation Mono,monospace" text-anchor="start" font-weight="bold" transform="rotate(-90 1640.8 1180.8)">TP75</text><text x="1661.9" y="1128.9" font-size="12.5" fill="#f7dcec" font-family="Liberation Mono,monospace" text-anchor="start" font-weight="bold" transform="rotate(-90 1661.9 1128.9)">TP77</text><text x="1703.8" y="1128.9" font-size="12.5" fill="#f7dcec" font-family="Liberation Mono,monospace" text-anchor="start" font-weight="bold" transform="rotate(-90 1703.8 1128.9)">TP74</text><text x="1743.5" y="1128.9" font-size="12.5" fill="#f7dcec" font-family="Liberation Mono,monospace" text-anchor="start" font-weight="bold" transform="rotate(-90 1743.5 1128.9)">TP73</text><text x="1874.4" y="1120.3" font-size="12.5" fill="#f7dcec" font-family="Liberation Mono,monospace" text-anchor="start" font-weight="bold">R16</text><text x="1874.4" y="1141.8" font-size="12.5" fill="#f7dcec" font-family="Liberation Mono,monospace" text-anchor="start" font-weight="bold">R15</text><text x="1874.4" y="1163" font-size="12.5" fill="#f7dcec" font-family="Liberation Mono,monospace" text-anchor="start" font-weight="bold">R14</text><text x="1874.4" y="1183.4" font-size="12.5" fill="#f7dcec" font-family="Liberation Mono,monospace" text-anchor="start" font-weight="bold">R13</text><text x="1806.5" y="1235.3" font-size="12.5" fill="#f7dcec" font-family="Liberation Mono,monospace" text-anchor="start" font-weight="bold" transform="rotate(-90 1806.5 1235.3)">R8</text><text x="1823.2" y="1235.3" font-size="12.5" fill="#f7dcec" font-family="Liberation Mono,monospace" text-anchor="start" font-weight="bold" transform="rotate(-90 1823.2 1235.3)">R85</text><text x="1839.9" y="1235.3" font-size="12.5" fill="#f7dcec" font-family="Liberation Mono,monospace" text-anchor="start" font-weight="bold" transform="rotate(-90 1839.9 1235.3)">FL2</text><text x="1856.6" y="1235.3" font-size="12.5" fill="#f7dcec" font-family="Liberation Mono,monospace" text-anchor="start" font-weight="bold" transform="rotate(-90 1856.6 1235.3)">R82</text><text x="1873.3" y="1235.3" font-size="12.5" fill="#f7dcec" font-family="Liberation Mono,monospace" text-anchor="start" font-weight="bold" transform="rotate(-90 1873.3 1235.3)">R2</text><text x="1889.9" y="1235.3" font-size="12.5" fill="#f7dcec" font-family="Liberation Mono,monospace" text-anchor="start" font-weight="bold" transform="rotate(-90 1889.9 1235.3)">R12</text><text x="1906.6" y="1235.3" font-size="12.5" fill="#f7dcec" font-family="Liberation Mono,monospace" text-anchor="start" font-weight="bold" transform="rotate(-90 1906.6 1235.3)">R11</text><text x="1651.9" y="1234.5" font-size="12.5" fill="#f7dcec" font-family="Liberation Mono,monospace" text-anchor="start" font-weight="bold" transform="rotate(-90 1651.9 1234.5)">R159</text><text x="1732.4" y="1225.2" font-size="12.5" fill="#f7dcec" font-family="Liberation Mono,monospace" text-anchor="start" font-weight="bold" transform="rotate(-90 1732.4 1225.2)">R1</text><text x="1241.3" y="1259.6" font-size="12.5" fill="#f7dcec" font-family="Liberation Mono,monospace" text-anchor="start" font-weight="bold" transform="rotate(-90 1241.3 1259.6)">C103</text><text x="1300.8" y="1233.5" font-size="13" fill="#fff" font-family="Liberation Mono,monospace" text-anchor="start" font-weight="bold">TP31</text><text x="1351.8" y="1239.9" font-size="13" fill="#fff" font-family="Liberation Mono,monospace" text-anchor="start" font-weight="bold">TP2</text><text x="1351.8" y="1259.6" font-size="13" fill="#fff" font-family="Liberation Mono,monospace" text-anchor="start" font-weight="bold">R38</text><text x="1276.3" y="1278.1" font-size="13" fill="#fff" font-family="Liberation Mono,monospace" text-anchor="start" font-weight="bold">R100</text><text x="1362.9" y="1301" font-size="12.5" fill="#fff" font-family="Liberation Mono,monospace" text-anchor="start" font-weight="bold" transform="rotate(-90 1362.9 1301)">C105</text><text x="1341.3" y="1343" font-size="12.5" fill="#f7dcec" font-family="Liberation Mono,monospace" text-anchor="start" font-weight="bold" transform="rotate(-90 1341.3 1343)">R122</text><text x="1379.5" y="1304.8" font-size="12.5" fill="#f7dcec" font-family="Liberation Mono,monospace" text-anchor="start" font-weight="bold" transform="rotate(-90 1379.5 1304.8)">R182</text><text x="1400.5" y="1304.8" font-size="12.5" fill="#f7dcec" font-family="Liberation Mono,monospace" text-anchor="start" font-weight="bold" transform="rotate(-90 1400.5 1304.8)">R183</text><text x="1314.5" y="1398.1" font-size="12.5" fill="#f7dcec" font-family="Liberation Mono,monospace" text-anchor="start" font-weight="bold" transform="rotate(-90 1314.5 1398.1)">X102</text><text x="1208.5" y="1288.3" font-size="12.5" fill="#f7dcec" font-family="Liberation Mono,monospace" text-anchor="start" font-weight="bold" transform="rotate(-90 1208.5 1288.3)">TP49</text><text x="1229.2" y="1310.6" font-size="12.5" fill="#f7dcec" font-family="Liberation Mono,monospace" text-anchor="start" font-weight="bold" transform="rotate(-90 1229.2 1310.6)">TP48</text><text x="1152.7" y="1330.3" font-size="13" fill="#f7dcec" font-family="Liberation Mono,monospace" text-anchor="start" font-weight="bold">TP47</text><text x="1155.3" y="1357.7" font-size="13" fill="#f7dcec" font-family="Liberation Mono,monospace" text-anchor="start" font-weight="bold">TP44</text><text x="1186.2" y="1392.7" font-size="12.5" fill="#f7dcec" font-family="Liberation Mono,monospace" text-anchor="start" font-weight="bold" transform="rotate(-90 1186.2 1392.7)">R59</text><text x="1239.4" y="1392.7" font-size="12.5" fill="#f7dcec" font-family="Liberation Mono,monospace" text-anchor="start" font-weight="bold" transform="rotate(-90 1239.4 1392.7)">TP43</text><text x="1359.7" y="1367.9" font-size="12.5" fill="#f7dcec" font-family="Liberation Mono,monospace" text-anchor="start" font-weight="bold">R187</text><text x="1334.9" y="1404.5" font-size="12.5" fill="#f7dcec" font-family="Liberation Mono,monospace" text-anchor="start" font-weight="bold" transform="rotate(-90 1334.9 1404.5)">R185</text><text x="1439.3" y="1405.5" font-size="12.5" fill="#f7dcec" font-family="Liberation Mono,monospace" text-anchor="start" font-weight="bold" transform="rotate(-90 1439.3 1405.5)">R184</text><text x="1385.8" y="1423.6" font-size="12.5" fill="#f7dcec" font-family="Liberation Mono,monospace" text-anchor="start" font-weight="bold">R183</text><text x="1465.5" y="1315.3" font-size="12.5" fill="#f7dcec" font-family="Liberation Mono,monospace" text-anchor="start" font-weight="bold" transform="rotate(-90 1465.5 1315.3)">R172</text><text x="1488.7" y="1411.8" font-size="12.5" fill="#f7dcec" font-family="Liberation Mono,monospace" text-anchor="start" font-weight="bold" transform="rotate(-90 1488.7 1411.8)">C115</text><text x="1512" y="1277.1" font-size="12.5" fill="#f7dcec" font-family="Liberation Mono,monospace" text-anchor="start" font-weight="bold" transform="rotate(-90 1512 1277.1)">C85</text><text x="1554" y="1371.1" font-size="12.5" fill="#f7dcec" font-family="Liberation Mono,monospace" text-anchor="start" font-weight="bold" transform="rotate(-90 1554 1371.1)">R124</text><text x="1589.7" y="1279.4" font-size="12.5" fill="#f7dcec" font-family="Liberation Mono,monospace" text-anchor="start" font-weight="bold" transform="rotate(-90 1589.7 1279.4)">R136</text><text x="1633.6" y="1261.2" font-size="13" fill="#f7dcec" font-family="Liberation Mono,monospace" text-anchor="start" font-weight="bold">TP78</text><text x="1732.3" y="1262.2" font-size="13" fill="#f7dcec" font-family="Liberation Mono,monospace" text-anchor="start" font-weight="bold">TP79</text><text x="1670.2" y="1350.4" font-size="12.5" fill="#f7dcec" font-family="Liberation Mono,monospace" text-anchor="start" font-weight="bold" transform="rotate(-90 1670.2 1350.4)">R157</text><text x="1689.3" y="1350.4" font-size="12.5" fill="#f7dcec" font-family="Liberation Mono,monospace" text-anchor="start" font-weight="bold" transform="rotate(-90 1689.3 1350.4)">R131</text><text x="1709.4" y="1350.4" font-size="12.5" fill="#f7dcec" font-family="Liberation Mono,monospace" text-anchor="start" font-weight="bold" transform="rotate(-90 1709.4 1350.4)">R180</text><text x="1728.5" y="1350.4" font-size="12.5" fill="#f7dcec" font-family="Liberation Mono,monospace" text-anchor="start" font-weight="bold" transform="rotate(-90 1728.5 1350.4)">R132</text><text x="1748.2" y="1350.4" font-size="12.5" fill="#f7dcec" font-family="Liberation Mono,monospace" text-anchor="start" font-weight="bold" transform="rotate(-90 1748.2 1350.4)">R6</text><text x="1768.9" y="1350.4" font-size="12.5" fill="#f7dcec" font-family="Liberation Mono,monospace" text-anchor="start" font-weight="bold" transform="rotate(-90 1768.9 1350.4)">R5</text><text x="1790.3" y="1350.4" font-size="12.5" fill="#f7dcec" font-family="Liberation Mono,monospace" text-anchor="start" font-weight="bold" transform="rotate(-90 1790.3 1350.4)">R123</text><text x="1168" y="1466" font-size="14" fill="#f7dcec" font-family="Liberation Mono,monospace" text-anchor="start" font-weight="bold">CN3</text>

</g>
<circle cx="759" cy="290.3" r="28.2" fill="#404040" stroke="#000" stroke-width="1.4"/>
<circle cx="1326" cy="290" r="28.2" fill="#404040" stroke="#000" stroke-width="1.4"/>
<circle cx="1850.7" cy="807" r="28.2" fill="#404040" stroke="#000" stroke-width="1.4"/>
<circle cx="759" cy="1466.6" r="28.2" fill="#404040" stroke="#000" stroke-width="1.4"/>
<circle cx="1706" cy="1466.6" r="28.2" fill="#404040" stroke="#000" stroke-width="1.4"/>
<path d="M692 228 H1348.7 L1418 305 V501 A21 21 0 0 0 1439 522 H1846.5 L1859 535 V722 L1936 796 V1349 Q1936 1363 1921 1363 H1793 Q1776 1363 1776 1384 V1511 L1760.6 1525 H1135 Q1125 1525 1125 1513 V1511 A51 51 0 0 0 1023 1511 V1513 Q1023 1525 1013 1525 H696 Q676 1525 676 1505 V244 Q676 228 692 228 Z" fill="none" stroke="#ff4a20" stroke-width="1.6"/>
</g></svg>
<svg width="2951" height="1669" viewBox="0 0 2951 1669" style="pointer-events:none">
<defs><linearGradient id="gFold" x1="0" y1="0" x2="0" y2="1"><stop offset="0" stop-color="#fff0a0"/><stop offset="1" stop-color="#e8b820"/></linearGradient><linearGradient id="gBlue" x1="0" y1="0" x2="0" y2="1"><stop offset="0" stop-color="#2a7be0"/><stop offset="1" stop-color="#0a3c9c"/></linearGradient><linearGradient id="gGrn" x1="0" y1="0" x2="0" y2="1"><stop offset="0" stop-color="#35c320"/><stop offset="1" stop-color="#1f9a10"/></linearGradient><linearGradient id="gPur" x1="0" y1="0" x2="0" y2="1"><stop offset="0" stop-color="#7a6cb0"/><stop offset="0.5" stop-color="#2f2a6a"/><stop offset="1" stop-color="#8b80c0"/></linearGradient><linearGradient id="gTeal" x1="0" y1="0" x2="0" y2="1"><stop offset="0" stop-color="#1a5560"/><stop offset="0.6" stop-color="#0b3040"/><stop offset="1" stop-color="#35d0d8"/></linearGradient><linearGradient id="gBl2" x1="0" y1="0" x2="0" y2="1"><stop offset="0" stop-color="#1a2a9c"/><stop offset="0.6" stop-color="#2050c0"/><stop offset="1" stop-color="#40c8f0"/></linearGradient></defs>
<g><rect x="3.4" y="36" width="23" height="23.500" rx="4" fill="#f5f3f5"/><circle cx="9.900" cy="42.100" r="2.700" fill="#5fb35f"/><path d="M17.500 42.600 Q19 37.200 23 37.800 Q25.400 39.400 23.800 42 Q21.500 43.800 17.500 42.600 Z" fill="#4aa84a"/><path d="M9.300 49.300 Q5.400 53 6 57.600" fill="none" stroke="#56b056" stroke-width="2.600" stroke-linecap="round"/><circle cx="10.900" cy="57.100" r="1.700" fill="#4a9a4a"/><text x="15.300" y="55.800" font-size="11.500" font-weight="bold" fill="#4f9f4f">P</text></g>
<path d="M2765.4 46.7 H2780.2" stroke="#000" stroke-width="1.5"/>
<rect x="2835" y="43.6" width="10.6" height="10" rx="1.2" fill="none" stroke="#000" stroke-width="1.5"/>
<path d="M2838.2 43.4 V40.4 H2848.6 V50.4 H2845.8" fill="none" stroke="#000" stroke-width="1.5"/>
<path d="M2905.4 39 L2920.2 53.8 M2920.2 39 L2905.4 53.8" stroke="#000" stroke-width="1.5"/>
<path d="M2928 166.8 L2938 176.8 M2938 166.8 L2928 176.8" stroke="#8a8a8a" stroke-width="1.3"/>
<circle cx="1532" cy="465.4" r="18.9" fill="none" stroke="#e8000b" stroke-width="3.2"/>
<text x="1532" y="476.79999999999995" font-size="33.3" font-weight="bold" fill="#e8000b" text-anchor="middle" textLength="17.6" lengthAdjust="spacingAndGlyphs">1</text>
<circle cx="513.4" cy="49.3" r="18.9" fill="none" stroke="#e8000b" stroke-width="3.2"/>
<text x="513.4" y="60.699999999999996" font-size="33.3" font-weight="bold" fill="#e8000b" text-anchor="middle" textLength="17.6" lengthAdjust="spacingAndGlyphs">2</text>
<circle cx="939" cy="86.2" r="18.9" fill="none" stroke="#e8000b" stroke-width="3.2"/>
<text x="939" y="97.60000000000001" font-size="33.3" font-weight="bold" fill="#e8000b" text-anchor="middle" textLength="17.6" lengthAdjust="spacingAndGlyphs">3</text>
<circle cx="1629.4" cy="130.6" r="18.9" fill="none" stroke="#e8000b" stroke-width="3.2"/>
<text x="1629.4" y="142.0" font-size="33.3" font-weight="bold" fill="#e8000b" text-anchor="middle" textLength="17.6" lengthAdjust="spacingAndGlyphs">4</text>
<circle cx="81.2" cy="1617.6" r="18.9" fill="none" stroke="#e8000b" stroke-width="3.2"/>
<text x="81.2" y="1629.0" font-size="33.3" font-weight="bold" fill="#e8000b" text-anchor="middle" textLength="17.6" lengthAdjust="spacingAndGlyphs">5</text>
<circle cx="2261.7" cy="1616.8" r="18.9" fill="none" stroke="#e8000b" stroke-width="3.2"/>
<text x="2261.7" y="1628.2" font-size="33.3" font-weight="bold" fill="#e8000b" text-anchor="middle" textLength="17.6" lengthAdjust="spacingAndGlyphs">6</text>
<circle cx="2660.5" cy="1616.8" r="18.9" fill="none" stroke="#e8000b" stroke-width="3.2"/>
<text x="2660.5" y="1628.2" font-size="33.3" font-weight="bold" fill="#e8000b" text-anchor="middle" textLength="17.6" lengthAdjust="spacingAndGlyphs">7</text>
<circle cx="2792.8" cy="611.5" r="18.9" fill="none" stroke="#e8000b" stroke-width="3.2"/>
<text x="2792.8" y="622.9" font-size="33.3" font-weight="bold" fill="#e8000b" text-anchor="middle" textLength="17.6" lengthAdjust="spacingAndGlyphs">8</text>
<g transform="translate(25,112)"><path d="M1 1 H15 L22 8 V30 H1 Z" fill="#e4e4e4" stroke="#8c8c8c"/><path d="M15 1 V8 H22" fill="#f8f8f8" stroke="#8c8c8c"/><rect x="4" y="13" width="18" height="17" rx="2" fill="#d01818" stroke="#8a0a0a"/><path d="M8.5 17 L17.5 26 M17.5 17 L8.5 26" stroke="#fff" stroke-width="3.2"/></g>
<g transform="translate(74,114)"><path d="M2 5 Q2 2 5 2 H12 L15 5 H24 Q26 5 26 8 V12 H2 Z" fill="#f4d04c" stroke="#c89a18"/><path d="M6 11 H30 Q32 11 31 13 L26 27 H3 Z" fill="url(#gFold)" stroke="#c89a18"/><path d="M2 10 L3 27" stroke="#c89a18"/></g>
<g transform="translate(118,114)"><path d="M1 1 H28 V29 H4 L1 26 Z" fill="url(#gBlue)" stroke="#082a78"/><rect x="6" y="2" width="18" height="14" fill="#fafafa"/><path d="M8 6 H22 M8 9 H22 M8 12 H22" stroke="#c8d4e8" stroke-width="1"/><rect x="8" y="20" width="14" height="9" fill="#dfe6f2"/><rect x="10" y="21.5" width="4" height="7" fill="#1a50b0"/></g>
<g transform="translate(162,112)"><path d="M8 2 L20 1 L23 13 H7 Z" fill="#dceaff" stroke="#9ab"/><path d="M2 16 Q2 12 7 12 H24 Q29 12 29 16 V24 H2 Z" fill="#d8d8d8" stroke="#7e7e7e"/><path d="M5 22 H27 L29 29 H9 Z" fill="#f6f6f6" stroke="#8a8a8a"/><path d="M2 19 H29" stroke="#a8a8a8" stroke-width="2"/></g>
<g transform="translate(213,112)"><path d="M12 3 L31 22 L24 28 L5 9 Z" fill="#f0c83c" stroke="#8a6a10"/><path d="M14 7 l2 -2 M17 10 l3 -3 M20 13 l2 -2 M23 16 l3 -3 M26 19 l2 -2" stroke="#5a4608" stroke-width="1.2"/><path d="M3 13 L19 29" stroke="#d81818" stroke-width="2.2"/><path d="M1 11 L8 13 L3 18 Z M21 31 L14 29 L19 24 Z" fill="#d81818"/></g>
<g transform="translate(0,0)"><path d="M260.8 115.4 L277.9 124.8 L272.2 129.6 L281.8 139 L278.4 142.4 L268.8 132.8 L266 137 Z" fill="#f8c030" stroke="#8a6a20" stroke-width="1.2" stroke-linejoin="round"/><path d="M262.5 118 L267 133" stroke="#fdf0b0" stroke-width="1.6"/></g>
<g transform="translate(309,114)"><path d="M0 8 L3 0 H30 L27 19 H0 Z" fill="url(#gGrn)" stroke="#157a0c"/><path d="M20 20 L28 28" stroke="#a8642c" stroke-width="4.5" stroke-linecap="round"/><circle cx="15" cy="14" r="7.5" fill="#e6eefc" fill-opacity="0.9" stroke="#8898b8" stroke-width="2"/><path d="M10.5 14 H19.5 M15 9.5 V18.5" stroke="#203060" stroke-width="2.6"/></g>
<g transform="translate(352,114)"><path d="M0 8 L3 0 H30 L27 19 H0 Z" fill="url(#gGrn)" stroke="#157a0c"/><path d="M20 20 L28 28" stroke="#a8642c" stroke-width="4.5" stroke-linecap="round"/><circle cx="15" cy="14" r="7.5" fill="#e6eefc" fill-opacity="0.9" stroke="#8898b8" stroke-width="2"/><path d="M10.5 14 H19.5" stroke="#203060" stroke-width="2.8"/></g>
<g transform="translate(395,114)"><rect x="1" y="2" width="20" height="18" fill="#dfe8f4" stroke="#5a5a5a" stroke-dasharray="2 2"/><path d="M20 20 L28 28" stroke="#a8642c" stroke-width="4.5" stroke-linecap="round"/><circle cx="15" cy="14" r="7.5" fill="#e6eefc" fill-opacity="0.9" stroke="#8898b8" stroke-width="2"/></g>
<g transform="translate(438,114)"><rect x="1" y="1" width="28" height="26" fill="#dfe8f4" stroke="#444" stroke-dasharray="2 2"/><path d="M3 8 L5 5 H27 L26 20 H3 Z" fill="url(#gGrn)" stroke="#157a0c"/><rect x="18" y="9" width="5" height="3" fill="#e83030"/></g>
<g transform="translate(491,115)"><rect x="0.5" y="0.5" width="28" height="27" fill="#383838" stroke="#222"/><rect x="0.5" y="0.5" width="28" height="4" fill="#3a6ad0"/><rect x="3" y="7" width="5" height="18" fill="#b8b8b8"/><rect x="10" y="7" width="16" height="18" fill="#28b818"/></g>
<g transform="translate(542.4,116.8)"><path d="M0.500 24.1 L3 21.3 H17 L14.500 24.1 Z" fill="#7a1a8a"/><path d="M0.500 21.200000000000003 L3 18.400000000000002 H17 L14.500 21.200000000000003 Z" fill="#e050e0"/><path d="M0.500 17.8 L3 15.0 H17 L14.500 17.8 Z" fill="#e03030"/><path d="M0.500 14.799999999999999 L3 12.0 H17 L14.500 14.799999999999999 Z" fill="#f08a30"/><path d="M0.500 12.0 L3 9.200000000000001 H17 L14.500 12.0 Z" fill="#f4e050"/><path d="M0.400 8.900 L9.300 0.400 H30.300 L21.400 8.900 Z" fill="#3ad028" stroke="#1f7a18" stroke-width="0.800"/><path d="M3 7.600 L10 1.400 H20 L13 7.600 Z" fill="#86f070" opacity="0.700"/><path d="M21.400 8.900 L30.300 0.400 V3 L27 22 L19 24.500 Z" fill="#5a2a5a" opacity="0.550"/><text x="13.500" y="24.600" font-size="19.500" font-weight="bold" fill="#fff" stroke="#3a2a3a" stroke-width="0.900" paint-order="stroke" font-family="Liberation Serif,serif">A</text></g>
<g transform="translate(585.2,116.8)"><path d="M0.500 24.1 L3 21.3 H17 L14.500 24.1 Z" fill="#7a1a8a"/><path d="M0.500 21.200000000000003 L3 18.400000000000002 H17 L14.500 21.200000000000003 Z" fill="#e050e0"/><path d="M0.500 17.8 L3 15.0 H17 L14.500 17.8 Z" fill="#e03030"/><path d="M0.500 14.799999999999999 L3 12.0 H17 L14.500 14.799999999999999 Z" fill="#f08a30"/><path d="M0.500 12.0 L3 9.200000000000001 H17 L14.500 12.0 Z" fill="#f4e050"/><path d="M0.400 8.900 L9.300 0.400 H30.300 L21.400 8.900 Z" fill="#3ad028" stroke="#1f7a18" stroke-width="0.800"/><path d="M3 7.600 L10 1.400 H20 L13 7.600 Z" fill="#86f070" opacity="0.700"/><path d="M21.400 8.900 L30.300 0.400 V3 L27 22 L19 24.500 Z" fill="#5a2a5a" opacity="0.550"/><text x="13.500" y="24.600" font-size="19.500" font-weight="bold" fill="#fff" stroke="#3a2a3a" stroke-width="0.900" paint-order="stroke" font-family="Liberation Serif,serif">P</text></g>
<g transform="translate(905.5,116.8)"><path d="M0.500 24.1 L3 21.3 H17 L14.500 24.1 Z" fill="#7a1a8a"/><path d="M0.500 21.200000000000003 L3 18.400000000000002 H17 L14.500 21.200000000000003 Z" fill="#e050e0"/><path d="M0.500 17.8 L3 15.0 H17 L14.500 17.8 Z" fill="#e03030"/><path d="M0.500 14.799999999999999 L3 12.0 H17 L14.500 14.799999999999999 Z" fill="#f08a30"/><path d="M0.500 12.0 L3 9.200000000000001 H17 L14.500 12.0 Z" fill="#f4e050"/><path d="M0.400 8.900 L9.300 0.400 H30.300 L21.400 8.900 Z" fill="#3ad028" stroke="#1f7a18" stroke-width="0.800"/><path d="M3 7.600 L10 1.400 H20 L13 7.600 Z" fill="#86f070" opacity="0.700"/><path d="M21.400 8.900 L30.300 0.400 V3 L27 22 L19 24.500 Z" fill="#5a2a5a" opacity="0.550"/><path d="M19 3.500 q3.500 -3.500 7.500 0 l-2.500 3.600 v13 q0 4 -2.600 4 q-2.600 0 -2.600 -4 v-13 Z" fill="#6aa6ee" stroke="#1d3c78" stroke-width="1.100"/><circle cx="21.400" cy="21.500" r="1.300" fill="#fff"/></g>
<g transform="translate(956,114)"><rect x="0" y="0" width="29" height="28" fill="url(#gGrn)" stroke="#1a8a10"/><path d="M2 6 H14 L18 10 H28 M2 12 H10 M14 22 H27 M2 25 H12" stroke="#7be060" stroke-width="1.2" fill="none"/><rect x="4" y="15" width="6" height="9" fill="#9a9a9a" stroke="#555"/><path d="M22 14 l3 3 l-3 3 l-3 -3 Z" fill="#f0d020"/></g>
<g transform="translate(999,114)"><path d="M0 4 H4 V0 H28 V28 H0 Z" fill="url(#gGrn)" stroke="#1a8a10"/><rect x="1" y="1" width="6" height="5" fill="#aaa"/><rect x="5" y="12" width="9" height="12" fill="#b4b4b4" stroke="#555"/><rect x="18" y="5" width="9" height="10" fill="#a8a8a8" stroke="#555"/><rect x="17" y="22" width="3" height="3" fill="#fff"/><rect x="22" y="22" width="6" height="5" fill="#999"/></g>
<g transform="translate(1042,114)"><path d="M5 0 H25 V10 H29 V28 H0 V6 Z" fill="url(#gGrn)" stroke="#1a8a10"/><path d="M10 17 L22 8 L29 20 L17 28 Z" fill="#e8b860" stroke="#8a5a10"/><path d="M13 17 L22 11" stroke="#fff" stroke-width="2"/><rect x="12" y="5" width="8" height="3" fill="#ddd"/></g>
<g transform="translate(1096,115)"><rect x="0.5" y="0.5" width="28" height="27" fill="#111" stroke="#555"/><rect x="0.5" y="0.5" width="28" height="3.5" fill="#2a50c8"/><rect x="22" y="5" width="6" height="22" fill="#c8c8c8"/><path d="M23 9 H27 M23 13 H27 M23 17 H27 M23 21 H27" stroke="#777" stroke-width="1.4"/><rect x="6" y="8" width="12" height="16" rx="2" fill="#a0a0a0"/><path d="M3 11 H6 M3 15 H6 M3 19 H6 M18 11 H21 M18 15 H21 M18 19 H21" stroke="#ddd" stroke-width="1.2"/></g>
<g transform="translate(1139,115)"><rect x="0.5" y="0.5" width="28" height="27" fill="#111" stroke="#555"/><rect x="0.5" y="0.5" width="28" height="3.5" fill="#2a50c8"/><rect x="22" y="5" width="6" height="22" fill="#c8c8c8"/><path d="M23 9 H27 M23 13 H27 M23 17 H27 M23 21 H27" stroke="#777" stroke-width="1.4"/><path d="M6 9 H17 L13 15 L17 22 H6 L10 15 Z" fill="#e8b040"/><ellipse cx="11.5" cy="9" rx="5.5" ry="2" fill="#f4d080"/><ellipse cx="11.5" cy="22" rx="5.5" ry="2" fill="#c89020"/></g>
<g transform="translate(1182,115)"><rect x="0.5" y="0.5" width="28" height="27" fill="#111" stroke="#555"/><rect x="0.5" y="0.5" width="28" height="3.5" fill="#2a50c8"/><rect x="22" y="5" width="6" height="22" fill="#c8c8c8"/><path d="M23 9 H27 M23 13 H27 M23 17 H27 M23 21 H27" stroke="#777" stroke-width="1.4"/><path d="M11 17 V7" stroke="#28c828" stroke-width="2.4"/><path d="M11 5 l3 4 h-6 Z" fill="#28c828"/><path d="M11 17 L4 24" stroke="#2848e8" stroke-width="2.4"/><path d="M11 17 L19 24" stroke="#e82828" stroke-width="2.4"/></g>
<g transform="translate(1225,115)"><rect x="0.5" y="0.5" width="28" height="27" fill="#f4f4f4" stroke="#666"/><rect x="0.5" y="0.5" width="28" height="3.5" fill="#2a50c8"/><path d="M14.5 4 V27" stroke="#999"/><path d="M4 9 H9 M4 13 H11 M4 17 H8 M4 21 H10 M18 9 H23 M18 13 H22 M18 17 H24" stroke="#333" stroke-width="1.6"/><rect x="0.5" y="24" width="28" height="3.5" fill="#bbb"/></g>
<g transform="translate(1268,115)"><rect x="0.5" y="0.5" width="28" height="27" fill="#111" stroke="#555"/><rect x="0.5" y="0.5" width="28" height="3.5" fill="#2a50c8"/><rect x="22" y="5" width="6" height="22" fill="#c8c8c8"/><path d="M23 9 H27 M23 13 H27 M23 17 H27 M23 21 H27" stroke="#777" stroke-width="1.4"/><path d="M5 9 H12 V22 H18 M12 15 H17" stroke="#78e048" stroke-width="2" fill="none"/><circle cx="11" cy="8" r="2" fill="#f0b030"/></g>
<g transform="translate(1321,116)"><rect x="0" y="0" width="28" height="27" rx="5" fill="url(#gPur)"/><path d="M4 6 H24 V20 H4 Z" fill="#2a2660" stroke="#d8d4f0" stroke-width="1.6"/><path d="M9 12 L13 17 L22 8" stroke="#fff" stroke-width="2.6" fill="none"/></g>
<g transform="translate(1364,116)"><rect x="0" y="0" width="27" height="27" rx="5" fill="url(#gTeal)"/><path d="M4 6 H23 V20 H4 Z" fill="#0e3848" stroke="#cfeff0" stroke-width="1.6"/><path d="M7 18 L20 8" stroke="#bfe8f0" stroke-width="3"/></g>
<g transform="translate(1406,115)"><rect x="0" y="0" width="29" height="28" rx="5" fill="url(#gBl2)"/><rect x="6" y="4" width="11" height="12" fill="#3a78d0" stroke="#dfe8ff" stroke-width="1.4"/><path d="M21 5 V20 M6 20 H20" stroke="#9fd0ff" stroke-width="2"/></g>
<g transform="translate(1447.6,114.5)"><rect x="0" y="0" width="28" height="28" rx="4" fill="#b8b8b8"/></g>
<g transform="translate(1491,113)"><path d="M3 3 q4 -4 7 0 l-2 4 v16 q0 5 -3.500 5 q-3.500 0 -3.500 -5 v-16 Z" fill="#d8d8d8" stroke="#8a8a8a"/><rect x="19" y="2" width="9" height="15" rx="3" fill="#f8a020" stroke="#c87808"/><path d="M23.500 17 V22" stroke="#999" stroke-width="1.500"/><ellipse cx="23.500" cy="26" rx="2.500" ry="3.500" fill="#f0f0f0" stroke="#999"/></g>
<g transform="translate(1544,115)"><path d="M1 6 H6 L8 3 H13 L14 6 H28 Q29.500 6 29.500 8 V23 Q29.500 25 28 25 H1 Z" fill="#cfcfcf" stroke="#6a6a6a"/><rect x="1" y="7" width="8" height="17" fill="#8a8a8a"/><circle cx="19" cy="16" r="6.500" fill="#e0e0e0" stroke="#666"/><circle cx="19" cy="16" r="4" fill="#2a2a2a"/><circle cx="19" cy="16" r="1.800" fill="#5a7a4a"/></g>
</svg>
</body></html>
